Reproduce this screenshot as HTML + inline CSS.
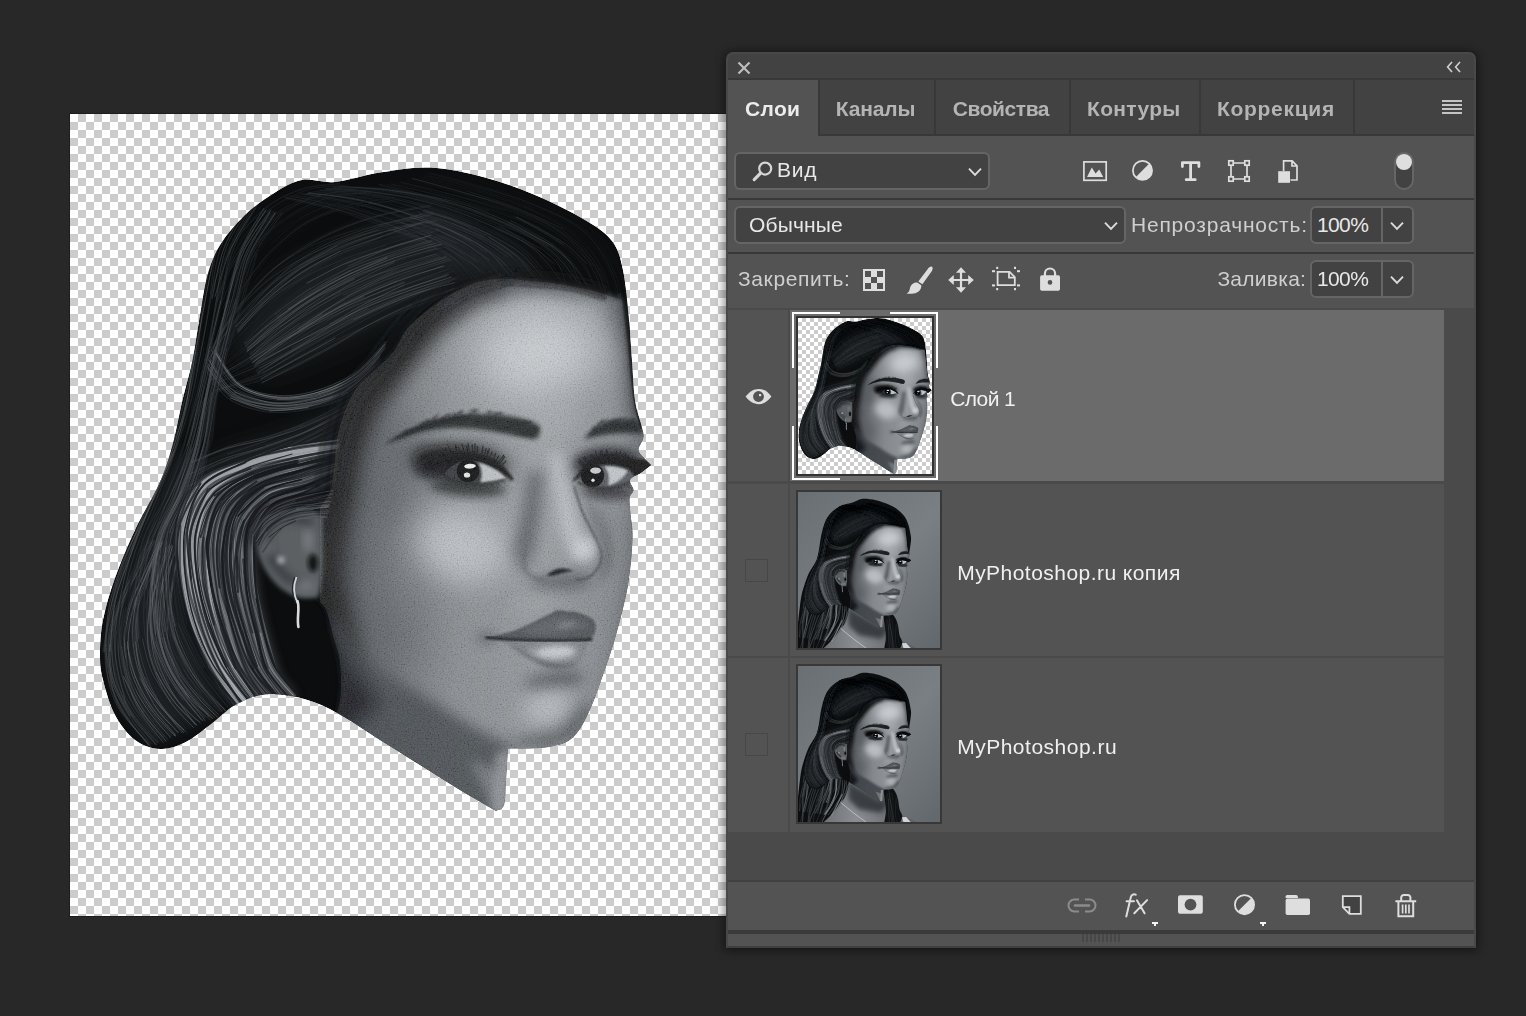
<!DOCTYPE html>
<html><head><meta charset="utf-8">
<style>
html,body{margin:0;padding:0;}
body{width:1526px;height:1016px;background:#282828;position:relative;overflow:hidden;font-family:"Liberation Sans",sans-serif;}
.abs{position:absolute;}
.t{position:absolute;white-space:nowrap;line-height:1;font-size:21px;color:#dcdcdc;}
.b{font-weight:bold;}
#canvas{left:70px;top:114px;width:690px;height:802px;background-color:#fff;
 background-image:conic-gradient(#ccc 0 25%,#fff 0 50%,#ccc 0 75%,#fff 0);background-size:16px 16px;box-shadow:0 0 0 1px #1d1d1d;}
#panel{left:726px;top:52px;width:746px;height:892px;background:#535353;border:2px solid #484848;border-bottom-color:#3f3f3f;border-radius:7px 7px 0 0;box-shadow:0 1px 10px 2px rgba(0,0,0,.45);overflow:hidden;}
#panel .abs, #panel .t{ }
.ln{position:absolute;background:#383838;}
.dd{position:absolute;box-sizing:border-box;border:2px solid #656565;border-radius:6px;background:#424242;}
</style></head><body>
<div id="canvas" class="abs"><svg class="abs" style="left:0;top:0" width="690" height="802" viewBox="70 114 690 802"><defs>
<clipPath id="cut"><path d="M430 167.5C447.5 168.3 467.5 172.9 485 177.5C502.5 182.1 518.3 187.9 535 195C551.7 202.1 572.2 212.3 585 220C597.8 227.7 605.7 232.7 612 241C618.3 249.3 620.2 256.8 623 270C625.8 283.2 627.5 305 629 320C630.5 335 631 346.7 632 360C633 373.3 633.5 389.3 635 400C636.5 410.7 639.6 417.8 641 424C642.4 430.2 643.9 432.7 643.5 437C643.1 441.3 638.2 446.3 638.5 450C638.8 453.7 642.9 456.5 645 459C647.1 461.5 650 464 651 465C649.3 466.2 644.5 470 641 472.5C637.5 475 631.2 477.1 630 480C628.8 482.9 633.6 487 633.5 490C633.4 493 630 494 629.5 498C629 502 630 507.3 630.5 514C631 520.7 632.9 526.2 632.5 538C632.1 549.8 630.8 568.8 628 585C625.2 601.2 620.2 620 616 635C611.8 650 607.7 661.8 603 675C598.3 688.2 593.3 703.3 588 714C582.7 724.7 578.2 733.4 571 739C563.8 744.6 555.5 745.9 545 747.5C534.5 749.1 514.2 748.3 508 748.5C507.7 753.8 506.7 770.6 506 780C505.3 789.4 505.7 799.8 504 805C502.3 810.2 497.3 810 496 811C490 807.5 472.7 797.7 460 790C447.3 782.3 433.3 773.3 420 765C406.7 756.7 392.5 747.9 380 740C367.5 732.1 355.8 723.8 345 717.5C334.2 711.2 325 706.2 315 702.5C305 698.8 294.2 696.2 285 695C275.8 693.8 268.3 693.3 260 695C251.7 696.7 243.3 700 235 705C226.7 710 218.3 718.8 210 725C201.7 731.2 193.3 738.5 185 742.5C176.7 746.5 168.3 749.4 160 749C151.7 748.6 142.5 745.7 135 740C127.5 734.3 120.3 725 115 715C109.7 705 105.5 690 103 680C100.5 670 100 665 100 655C100 645 100.5 632.8 103 620C105.5 607.2 109.7 593 115 578C120.3 563 127.5 546 135 530C142.5 514 153.8 496.2 160 482C166.2 467.8 168.8 458.7 172.5 445C176.2 431.3 179.2 414.2 182.5 400C185.8 385.8 189.6 374.2 192.5 360C195.4 345.8 197.5 329.2 200 315C202.5 300.8 204.2 286.7 207.5 275C210.8 263.3 213.8 255 220 245C226.2 235 235.8 223.8 245 215C254.2 206.2 265.5 198.3 275 192.5C284.5 186.7 292 181.8 302 180C312 178.2 322 183.2 335 182C348 180.8 364.2 174.9 380 172.5C395.8 170.1 412.5 166.7 430 167.5Z"/></clipPath>
<clipPath id="skinclip"><path d="M622 300C618.3 298.8 605.5 294.7 600 293C594.5 291.3 594.8 291.3 589 290C583.2 288.7 572.8 286.3 565 285C557.2 283.7 553.7 283 542 282C530.3 281 508.2 278 495 279C481.8 280 473.5 283.3 463 288C452.5 292.7 441.3 300.2 432 307C422.7 313.8 413.3 321.7 407 329C400.7 336.3 399.3 344.2 394 351C388.7 357.8 381.3 363.7 375 370C368.7 376.3 361.2 381.7 356 389C350.8 396.3 347.2 405.5 344 414C340.8 422.5 338.7 431 337 440C335.3 449 335.2 459.3 334 468C332.8 476.7 332.7 484.7 330 492C327.3 499.3 321 504 318 512C315 520 313 530.3 312 540C311 549.7 311.3 560.7 312 570C312.7 579.3 313.7 589.3 316 596C318.3 602.7 323.2 603.5 326 610C328.8 616.5 330.7 626.3 333 635C335.3 643.7 338.8 651.2 340 662C341.2 672.8 341.7 688.7 340 700C338.3 711.3 331.7 725 330 730C358.3 748.3 471.7 821.7 500 840C533.3 840 666.7 840 700 840C700 773.3 700 506.7 700 440C690.2 438.2 650.8 430.8 641 429C640 425.8 636.7 418.2 635 410C633.3 401.8 632.3 391.7 631 380C629.7 368.3 628.5 353.3 627 340C625.5 326.7 622.8 306.7 622 300Z"/></clipPath>
<filter id="b1" x="-20%" y="-20%" width="140%" height="140%"><feGaussianBlur stdDeviation="0.8"/></filter>
<filter id="b2" x="-30%" y="-30%" width="160%" height="160%"><feGaussianBlur stdDeviation="2"/></filter>
<filter id="b3" x="-10%" y="-10%" width="120%" height="120%"><feGaussianBlur stdDeviation="3"/></filter>
<filter id="b4" x="-40%" y="-40%" width="180%" height="180%"><feGaussianBlur stdDeviation="4"/></filter>
<filter id="b6" x="-50%" y="-50%" width="200%" height="200%"><feGaussianBlur stdDeviation="6"/></filter>
<filter id="b8" x="-50%" y="-50%" width="200%" height="200%"><feGaussianBlur stdDeviation="8"/></filter>
<filter id="b10" x="-50%" y="-50%" width="200%" height="200%"><feGaussianBlur stdDeviation="10"/></filter>
<filter id="b14" x="-60%" y="-60%" width="220%" height="220%"><feGaussianBlur stdDeviation="14"/></filter>
<filter id="b22" x="-80%" y="-80%" width="260%" height="260%"><feGaussianBlur stdDeviation="22"/></filter>
<filter id="grain" x="0" y="0" width="100%" height="100%"><feTurbulence type="fractalNoise" baseFrequency="0.7" numOctaves="2" seed="4"/><feColorMatrix type="matrix" values="1.6 0 0 0 -0.3  1.6 0 0 0 -0.3  1.6 0 0 0 -0.3  0 0 0 0 1"/></filter>
<linearGradient id="skg" x1="322" y1="0" x2="652" y2="0" gradientUnits="userSpaceOnUse">
<stop offset="0" stop-color="#3e4246"/><stop offset=".1" stop-color="#54585c"/><stop offset=".24" stop-color="#74787c"/><stop offset=".4" stop-color="#8c9094"/><stop offset=".65" stop-color="#9a9ea2"/><stop offset=".9" stop-color="#878b8f"/><stop offset="1" stop-color="#6e7276"/></linearGradient>
</defs><g id="faceg" clip-path="url(#cut)">
<path d="M430 167.5C447.5 168.3 467.5 172.9 485 177.5C502.5 182.1 518.3 187.9 535 195C551.7 202.1 572.2 212.3 585 220C597.8 227.7 605.7 232.7 612 241C618.3 249.3 620.2 256.8 623 270C625.8 283.2 627.5 305 629 320C630.5 335 631 346.7 632 360C633 373.3 633.5 389.3 635 400C636.5 410.7 639.6 417.8 641 424C642.4 430.2 643.9 432.7 643.5 437C643.1 441.3 638.2 446.3 638.5 450C638.8 453.7 642.9 456.5 645 459C647.1 461.5 650 464 651 465C649.3 466.2 644.5 470 641 472.5C637.5 475 631.2 477.1 630 480C628.8 482.9 633.6 487 633.5 490C633.4 493 630 494 629.5 498C629 502 630 507.3 630.5 514C631 520.7 632.9 526.2 632.5 538C632.1 549.8 630.8 568.8 628 585C625.2 601.2 620.2 620 616 635C611.8 650 607.7 661.8 603 675C598.3 688.2 593.3 703.3 588 714C582.7 724.7 578.2 733.4 571 739C563.8 744.6 555.5 745.9 545 747.5C534.5 749.1 514.2 748.3 508 748.5C507.7 753.8 506.7 770.6 506 780C505.3 789.4 505.7 799.8 504 805C502.3 810.2 497.3 810 496 811C490 807.5 472.7 797.7 460 790C447.3 782.3 433.3 773.3 420 765C406.7 756.7 392.5 747.9 380 740C367.5 732.1 355.8 723.8 345 717.5C334.2 711.2 325 706.2 315 702.5C305 698.8 294.2 696.2 285 695C275.8 693.8 268.3 693.3 260 695C251.7 696.7 243.3 700 235 705C226.7 710 218.3 718.8 210 725C201.7 731.2 193.3 738.5 185 742.5C176.7 746.5 168.3 749.4 160 749C151.7 748.6 142.5 745.7 135 740C127.5 734.3 120.3 725 115 715C109.7 705 105.5 690 103 680C100.5 670 100 665 100 655C100 645 100.5 632.8 103 620C105.5 607.2 109.7 593 115 578C120.3 563 127.5 546 135 530C142.5 514 153.8 496.2 160 482C166.2 467.8 168.8 458.7 172.5 445C176.2 431.3 179.2 414.2 182.5 400C185.8 385.8 189.6 374.2 192.5 360C195.4 345.8 197.5 329.2 200 315C202.5 300.8 204.2 286.7 207.5 275C210.8 263.3 213.8 255 220 245C226.2 235 235.8 223.8 245 215C254.2 206.2 265.5 198.3 275 192.5C284.5 186.7 292 181.8 302 180C312 178.2 322 183.2 335 182C348 180.8 364.2 174.9 380 172.5C395.8 170.1 412.5 166.7 430 167.5Z" fill="#0b0d0e"/>
<path d="M340 444L270 456L208 482L188 506L183 540L185 578L194 616L210 655L222 680L240 708L296 696L279 677L267 638L257 598L253 559L255 530L267 508L306 494L338 480Z" fill="#54585c" opacity=".9" filter="url(#b6)"/>
<path d="M440 215L360 235L290 270L240 320L232 350L270 372L330 348L395 316L458 290L470 250Z" fill="#2a2e32" opacity=".55" filter="url(#b14)"/>
<path d="M545 280L515 248L470 224L425 208L392 228L428 244L456 262L480 284Z" fill="#30343a" opacity=".5" filter="url(#b10)"/>
<path d="M176 450L150 510L122 575L108 640L118 700L152 744L226 708L200 660L182 610L178 560L186 512L208 474Z" fill="#2a2e32" opacity=".6" filter="url(#b10)"/>
<path d="M372 382L330 412L280 434L232 448L196 466L186 520L224 502L264 484L306 468L340 452Z" fill="#2a2e32" opacity=".5" filter="url(#b10)"/>
<g fill="none" stroke-linecap="round">
<path d="M613 314C610.5 306.5 606 282 598 268S580 240.5 567.5 230.5S537.5 213.5 522.5 207S492 196 475.5 191S433 179.5 424.5 177M616 320C614 312 610 286.5 603 271.5S585 243 571.5 232S532 211 524 206.5M468 288C464 283 453 266 443.5 256.5S421 239.5 408.5 233S382.5 222.5 369 217.5S341.5 208 328 204S293.5 197 286.5 195.5M481 286C476.5 280.5 463 262.5 452.5 254S430.5 239.5 418 233.5S391 222.5 377.5 217.5S351 208.5 337 205S300.5 197 293 195.5M529 287.5C524 281.5 510.5 260 498.5 249.5S469.5 232 455 225.5S425 214.5 410 210S381.5 200.5 366 198S325.5 193.5 317.5 193M350 303.5C342 307.5 317.5 318.5 302 327.5S270.5 346.5 255.5 355.5S219.5 377 212 381" stroke="#1d2023" stroke-width="0.8" opacity="0.6"/>
<path d="M628 334.5C627.5 325 629 296 623.5 279S608 243.5 595 231S562.5 210 545.5 202.5S509.5 190 492 185S448 173.5 439 171M517 287.5C511.5 281.5 497.5 261.5 486 251.5S459.5 234 445.5 227.5S416 216 401 211.5S371.5 203 356.5 199.5S316.5 194 309 193M531 288.5C525.5 282.5 511 262.5 498 252S470 234 454.5 227S422 215.5 405.5 211S373.5 202 357 199S315 194 306.5 193M284 291.5C277 298 255.5 316.5 242.5 329.5S214 362.5 208 369M374.5 219.5C365 222.5 336.5 230.5 319.5 239S287 257.5 273 269.5S241.5 304.5 235 311.5M406 296C397.5 300 373 310 356.5 318S323.5 335 308 343.5S269 364 261.5 368M440.5 232.5C431 234.5 402.5 239.5 384 244.5S346 253.5 329 261S296 277.5 281.5 288S253.5 311 241 324S212.5 358 207 364.5M316 222C310 226.5 291 239 281 249S258.5 277 254 283M348 204C341.5 206.5 320.5 212.5 308.5 219.5S282.5 241.5 277.5 246" stroke="#181b1e" stroke-width="0.8" opacity="0.4"/>
<path d="M621 325C619.5 316.5 618 290 611 274.5S592.5 243 579 231.5S549 214 532.5 207S498 194 480.5 188.5S434.5 177 425.5 174.5M628.5 333.5C627 324 627 294.5 621 277.5S597 239 592.5 231.5M625 329C623.5 320 622.5 292.5 616 276.5S599.5 242.5 586.5 231S555 213 538 206S503.5 194 486 188.5S441.5 176 433 173M390 256.5C381.5 259.5 355 267.5 338.5 275S305 290.5 289.5 300.5S252.5 328.5 245 334M309.5 345.5C302 349.5 278 363 262.5 370.5S222.5 386.5 214.5 389.5M263 447C257 449 238.5 456 226.5 461S196.5 474 190.5 476.5M283 463.5C277.5 465.5 260.5 473 249.5 478S221 490.5 215 493M200.5 350C199.5 359 197.5 386.5 194.5 403.5S187 437 181.5 453S165 492.5 161.5 500.5M284.5 213.5C280 220 264 239.5 257 254S248 284.5 243.5 300S233.5 330.5 229.5 346.5S221.5 378.5 218.5 394.5S215 426.5 211.5 441.5S204.5 471 199 485.5S181 513 177 528S174 559 175.5 575S179 607 184 622.5S197.5 653 205.5 667.5S228.5 700.5 233 707M123.5 600C122.5 609 116.5 635 116.5 651.5S119 685.5 125.5 700.5S151.5 734.5 156.5 741.5" stroke="#22262a" stroke-width="0.6" opacity="0.4"/>
<path d="M630 333C628.5 323.5 628 293.5 622 276.5S606 243 593 231S560.5 212.5 544 205.5S511 194 493.5 189S448 176.5 439 174.5M566 289.5C560 283 545 260 531 249S501 230.5 484 223S449.5 210 432 205S398 196 380 193S334.5 189 325.5 188.5M561.5 288.5C556.5 282 543 259 530.5 247.5S503 228.5 487.5 221S456 208 439.5 203S407 194 390 191.5S346 188 337 187M427.5 207.5C419 205.5 393.5 199 376 196S331.5 190.5 322.5 189.5M398 200.5C391 201.5 369.5 203 355.5 206.5S326.5 214 313.5 220.5S288 235 277 244.5S257 267 249 279S232.5 311 229 317.5M310 462C304 464 286.5 470 275.5 474.5S255 484.5 244.5 490S224 501.5 213.5 507S187 522 182 525M189 492.5C185 499.5 171 520.5 165.5 535.5S159.5 573.5 158 581" stroke="#1a1d1f" stroke-width="0.6" opacity="0.6"/>
<path d="M593.5 293.5C589.5 287 578.5 266 567.5 255.5S543 237.5 529.5 230S501 216.5 487 211S458.5 200 443 195S404.5 183.5 396.5 181.5M517.5 247.5C510 243.5 488 230.5 472 223.5S440 211.5 423.5 207S390 199 373.5 196.5S330.5 192 322 191M527.5 288.5C522.5 282.5 510 262.5 498 252.5S470.5 234.5 455.5 227.5S425 215.5 409.5 210.5S377.5 200.5 361.5 197S321 191.5 312.5 190M551 290C546 283.5 532.5 261.5 520 250.5S491 231.5 475.5 224S444 210.5 427 205.5S392.5 196.5 375 193.5S331.5 189 322.5 188M459.5 284.5C451 287.5 425 296 408 303S374.5 317 358.5 325S327.5 341.5 312 349.5S281.5 367.5 265.5 374S223.5 387 215 389.5" stroke="#14171a" stroke-width="0.8" opacity="0.4"/>
<path d="M612.5 317C610.5 309 606 283 599 269S581.5 242 568.5 231.5S537.5 213.5 521.5 206.5S489.5 195 473 190S430.5 178 422 175.5M530 206.5C521.5 203.5 495.5 195 477.5 189.5S433.5 177.5 424.5 175.5M578.5 289C573 282 558.5 259 545 247.5S515 228.5 498.5 221S465.5 206.5 448 201S412 192 393.5 189.5S347 186.5 337.5 186M494 286C489 280.5 475.5 262.5 464 253.5S439.5 237.5 425.5 231.5S396.5 221 382.5 216.5S355 207 340.5 204S303 197.5 295.5 196M475 286C470.5 281 458.5 263.5 448 254.5S425 238.5 413 232S386.5 221.5 373.5 216.5S347.5 208 334 204.5S300 198 293 197M431 207.5C422 210 394 215 376 221S338.5 234 321.5 243S288.5 261.5 274 274S247.5 302 236 317S211.5 356 206.5 363.5M387.5 197.5C380.5 198.5 360 199.5 347 202.5S319 211 306.5 217.5S282.5 233 272.5 243S254 264 246.5 276S230.5 308 227.5 314.5M369.5 193C363 194 343 195.5 331 198.5S306.5 207 295.5 213.5S272.5 229 263 238S245.5 259 238.5 270.5S224.5 301 222 307.5" stroke="#181b1e" stroke-width="0.6" opacity="0.4"/>
<path d="M630 332C628.5 323 628 294 622 277S605.5 243 592.5 231S560.5 212 544 205S509.5 193 492 187.5S448 175.5 439 173M614.5 317.5C612 310 609 284.5 601.5 270S582.5 242 569.5 231.5S540 215 524 208.5S491 197 474 191.5S430.5 179.5 421.5 177M600.5 300C596 293 585.5 268 574 256S545.5 236.5 530.5 229S499 215.5 483.5 210S453 201.5 437 197.5S397.5 187.5 389.5 185.5M451.5 201C442 199 413.5 191.5 394.5 189.5S347.5 187 338 186.5M427 230.5C419.5 227.5 397 218.5 382.5 214S352.5 205.5 338 202.5S302 197 295 195.5M478.5 288.5C473.5 283 461.5 264.5 450.5 255.5S426.5 239 413.5 232.5S386 221.5 372 216.5S336.5 206 329.5 204M523.5 286.5C518.5 280 505 259.5 493.5 249.5S467 233 453 226.5S423.5 214.5 408.5 210S379 201 363.5 198S324.5 194 316.5 193M536 289.5C531 283 517 263 504 252.5S475.5 233.5 459.5 226S426.5 214 410 209S376.5 199.5 359.5 196.5S318.5 192 310 191M382 238.5C373 241.5 346.5 248.5 330 256.5S296 274 281 285.5S246 316.5 239 322.5M457 273.5C448 275.5 420.5 281.5 403 287S367.5 298.5 350.5 305.5S309.5 326 301.5 330M456.5 283C448.5 286 424.5 295 408.5 302S376 315.5 360 322.5S327.5 337.5 311 345.5S278.5 362.5 262 369.5S220.5 384.5 212.5 387.5M274.5 205C270 209 255 220.5 247.5 230S231.5 256.5 228.5 261.5" stroke="#14171a" stroke-width="0.6" opacity="0.6"/>
<path d="M611.5 314.5C609 307 604 281.5 595.5 267.5S574 241 560.5 231.5S529.5 214.5 513 208S479.5 197.5 462.5 192.5S420.5 180.5 412 178.5M592.5 295C588 288.5 577 267 565 256S537.5 238 522.5 231S492 217 476 211S443 201.5 427 197S387.5 186.5 379.5 184.5M464.5 254C457.5 250.5 438.5 237.5 424.5 231S396 221 381.5 216.5S345 206 337.5 204M458 278.5C449.5 281.5 424 290 407.5 297S374 312 357.5 320S324.5 336.5 309 345S279 364.5 263 372S223 387 214.5 390M338.5 184C332.5 184.5 314 185.5 303 189S281 197 271.5 203.5S253 219 245.5 228S230 248.5 224.5 259S213 287.5 211 293M393 197.5C386 199 363.5 201.5 349.5 205.5S322.5 214 310 220.5S286.5 236.5 276.5 246S257.5 267 249.5 278.5S231.5 309 228 315.5M205 367C209.5 372.5 220 390.5 231 397.5S257 407 270 408S296.5 408 309.5 405.5S337.5 399 348.5 392S372 368.5 376.5 364M210.5 352C215 358 225.5 379 236.5 386.5S263 397.5 277 398.5S305 396.5 318.5 392.5S345 382 356 373.5S379.5 346.5 384.5 341M193.5 532C193.5 539.5 192 561.5 193.5 576.5S198.5 607.5 203 622.5S217 659 219.5 666M241.5 667C242.5 669.5 244.5 676.5 247 681.5S252.5 692 256 697S267 706.5 269 708.5M274 210.5C269.5 217.5 253 237 246.5 252S237.5 284 233.5 300S226.5 332 223 348.5S215.5 381 212.5 397S209 428 205 443.5S196 473.5 190 488.5S172 516.5 168 531.5S164 562.5 165 578.5S168.5 611.5 173 627.5S185 658.5 193 672.5S216 705.5 221 712M280.5 213C276 219.5 260.5 238 253 252.5S242 283.5 237 299S227.5 330 223.5 345.5S216.5 378.5 213.5 394.5S207.5 435.5 206.5 443.5M167 629C170 636.5 178.5 659.5 186.5 673.5S210 708 214.5 715M197 352.5C195.5 361 192 387.5 188 404.5S178 437.5 171.5 453.5S157.5 484.5 150.5 500.5S135.5 532.5 129.5 549S118 581.5 115 598.5S110 634 111.5 651S117.5 686.5 125 702S150.5 737 155.5 744M200.5 440.5C199 448.5 194.5 473 189.5 489S175.5 519.5 171.5 535S166 567.5 165 583.5S163 616.5 165.5 631.5S179 667 182 674.5" stroke="#33373b" stroke-width="0.8" opacity="0.6"/>
<path d="M611 314C608 306 603 280.5 595 267S576.5 241 563.5 231S533.5 215 517.5 208.5S485.5 196.5 469 191S427 179 419 176.5M595 296C590 289 578.5 267.5 567 256.5S540 238 525.5 230.5S493.5 217.5 478 212S446.5 201 430.5 196.5S390 187 382 185M572 232C564.5 228 544 214.5 528.5 207.5S487 192.5 478.5 189.5M559 287C553 280.5 537 258 523 247.5S492 230 476 223S444 211 427.5 206.5S393.5 198.5 376 195.5S332.5 192 323.5 191M389 196.5C382 197.5 359 199 345 202.5S318 211 306 218S282.5 234 272.5 244S250.5 271.5 246 277M247.5 486C242 488 227.5 495.5 216.5 500.5S188.5 514.5 183 517M354 418C348.5 421 333 431 322 436.5S299.5 448.5 288.5 453.5S267 463 256 467.5S232.5 476.5 221 481S191.5 494 185.5 496.5M201.5 296C200.5 305 196 331 193.5 349S189.5 385.5 186 403.5S178 438.5 172.5 455.5S159.5 489 152 505.5S135.5 536 128.5 551.5S114.5 583.5 110.5 600S105 643 104 651.5M212.5 395C211.5 403 209.5 428.5 206 444.5S198 476.5 191.5 491.5S174 520 168.5 535S160.5 573.5 159 581.5" stroke="#1a1d1f" stroke-width="0.8" opacity="0.4"/>
<path d="M608 310.5C605 303 599 278.5 590.5 265S570 239.5 556.5 230S525.5 215 510 208.5S478.5 197 462 192S421.5 181 413 178.5M593 293.5C588 287.5 576 266 563.5 255.5S535.5 237 520.5 229.5S481.5 215 474 212M488.5 210.5C480.5 208 457 200.5 440.5 196S399.5 186 391 184M309 344C301.5 348.5 279.5 364.5 264 372.5S224 387.5 216 390.5M347 185.5C341 186 322.5 186 310.5 189S287 197.5 276.5 204.5S256.5 220.5 248.5 230.5S234.5 252.5 229.5 264.5S219.5 295.5 217.5 301.5M357.5 189C351 190 331 192 319 195.5S296 204.5 285.5 211S265 225.5 256.5 234.5S239 254 232.5 265.5S219.5 295.5 217 302M212 351C216 356.5 225.5 377.5 236.5 385.5S264 397.5 277 399S303.5 398 316.5 394.5S343 385.5 354 377.5S377 353 381.5 348M243.5 490.5C238 493 222 500.5 211.5 506S186 521 181 524M340 453C334.5 455 318.5 462 307.5 466S279.5 476.5 274 478.5M362.5 402.5C357 406 341.5 417 330.5 423.5S308 435.5 296 440.5S271 450 259 454.5S235.5 462 224 467S194 481 188 483.5M360.5 401C355 405 339 417 328 424S306.5 437 295 442.5S271.5 453 259.5 457.5S235.5 465 223.5 470S194 484 188 487M210 440.5C208 447.5 203 469.5 197.5 483.5S181 510.5 177.5 526S175.5 559.5 177 576S185 616 187 624.5M282 213.5C277.5 220 263 239 255.5 253S244.5 282.5 239.5 298S228 328.5 223.5 344.5S216 377 213.5 393.5S211 426.5 208 443S202.5 475.5 197.5 490.5S181 518.5 176 533.5S169 563.5 168.5 579S169.5 609.5 174 624S187.5 653 196.5 667S222.5 700 227.5 706.5M139.5 590C139.5 598.5 136.5 624.5 139.5 640.5S148 673.5 156 688S180.5 721.5 185.5 728.5" stroke="#2a2e32" stroke-width="0.8" opacity="0.6"/>
<path d="M607.5 307.5C604 300 596.5 276 587 263S564 239 550 229.5S519 214 503.5 208S472.5 197.5 456.5 193S416.5 183 408 181M595 296C590.5 289.5 578.5 266 566.5 255.5S537 238 521.5 231S490.5 218.5 475 213S443 203 427.5 198.5S387.5 188 379.5 186M497.5 285C492.5 279.5 478.5 261.5 466.5 252S439.5 235 426 229S399.5 220 385.5 216S358 208.5 343.5 205S307 198 300 197M298 320.5C290.5 325.5 267.5 340.5 253 350.5S218 374 211 378.5M453 263.5C444.5 266.5 418 274.5 401 281.5S367.5 296.5 351 305.5S318.5 324.5 303 334.5S274.5 355.5 260 364.5S222 384 214.5 388M338.5 199C331.5 201 310 206 297.5 212.5S274 228 264.5 238S247 259.5 240 271.5S226.5 303 224 309.5M373.5 192C366.5 193 344.5 195 331.5 198.5S306.5 207.5 295 214.5S273.5 230 264 239.5S245.5 260 238.5 271S223 300 220 306" stroke="#181b1e" stroke-width="0.6" opacity="0.6"/>
<path d="M603.5 307C600 300 592 275.5 581.5 263S557 241 542.5 232S511.5 217 494.5 210.5S459.5 199.5 442 194.5S398.5 183.5 390 181.5M625 329.5C623.5 320 622 291 615.5 275S597 243 583.5 231.5S550.5 213 533.5 206S499 194.5 481 189.5S436 178 426.5 176M624.5 331.5C623.5 322.5 623.5 294.5 617.5 278S602.5 244.5 589.5 233S557.5 214.5 540 207S504.5 194 486 188.5S439 175 430 172.5M510.5 287C505 281.5 491 262.5 479 252.5S453 235.5 439 229S409 218.5 394 213.5S364 204 349 201S311 195.5 303.5 194M576 289.5C570.5 282.5 556.5 259 543 247.5S511 228.5 495 221S462 207 444.5 202S408.5 193 390.5 190.5S344 186.5 335 185.5" stroke="#1d2023" stroke-width="0.6" opacity="0.6"/>
<path d="M505 210.5C496.5 208 471 199.5 454 195S410 184.5 401 182.5M615 318C612.5 310 607.5 282.5 599 268S577.5 241 563.5 231S532.5 215.5 516.5 209S483.5 198 466 193S422 181 413 178.5M480.5 222.5C472 219.5 446.5 210.5 429.5 206S395.5 197.5 377.5 194.5S333 190.5 324 189.5M498.5 286C494 280.5 483 262.5 472.5 253.5S447.5 236 434.5 229.5S408.5 218 394.5 213.5S366.5 205 351.5 201.5S313 195 305.5 194M459.5 283C451 286.5 425.5 297 409 304.5S377 320.5 361.5 329S331 346.5 315 354.5S283.5 371.5 266.5 377.5S223.5 389.5 215 392M400 200C392.5 201 369.5 203.5 355 206.5S325.5 213.5 312.5 220S287.5 236 276.5 246S256 267.5 248 279S232 309 228.5 315M213 396.5C212 404.5 210 429 207 444.5S200 476.5 194 491.5S174.5 518.5 169.5 533S165 571 164 579M238.5 201C234.5 209 220.5 232 214.5 248.5S206 282 203 299S198.5 333.5 195.5 351S190 385 186 402.5S176.5 437 170 453.5S156 486 149 502.5S135 534.5 129 551S116 585 112.5 602S107.5 645.5 106.5 654" stroke="#22262a" stroke-width="0.8" opacity="0.6"/>
<path d="M610 312C607 304.5 600.5 278.5 592 265S570.5 240.5 557 231S525.5 216 509 209.5S476.5 198 459.5 193S417.5 181 409 179M622.5 326C621 317 619.5 289.5 613 274S596 242 583.5 231S552.5 212.5 535.5 205S501 192.5 483.5 187S441 176 432.5 173.5M603 303.5C599 296.5 589 273 579 261S555.5 239 541.5 231S512.5 218 497.5 212.5S467 201 450.5 196S408 184 399.5 182M613 275.5C608.5 268.5 599 245 586.5 233.5S548 211.5 540 207M491 286.5C485.5 280.5 471 261.5 458.5 252S430.5 235.5 416.5 230S386.5 220 372.5 216.5S346 209.5 332.5 207S297.5 200 290.5 198.5M427 231C419.5 228.5 397 220 382.5 215S353.5 206.5 339 203S302.5 196.5 295 195.5M579 289C573 281.5 558 258 544.5 246.5S512.5 227.5 496 220S462.5 207 445 202S409.5 194 391.5 191S345.5 187.5 336 186.5M477.5 222C469 219.5 444 211 427 207S393 198.5 376 196S332.5 192 323.5 191M410 306.5C402.5 311 379.5 323.5 364 331.5S331.5 348 315 356S274.5 374 266 377.5M279.5 282.5C272.5 289 251 309 238.5 322.5S211 358 205.5 365M412.5 308.5C404 312 378.5 322.5 362 330S322 350.5 314 354.5M307 338.5C299.5 343.5 277 358.5 261.5 367S222 385 214 388.5M340.5 453.5C335.5 456 319 464.5 308 469S286 476.5 275 481S252.5 489.5 241.5 494.5S220.5 506 210 512S184.5 527 179.5 530M117 650.5C119 659 121.5 686.5 128.5 701.5S154 735.5 159 742.5M273 211C269 218 254.5 237.5 248 251.5S237 282 232 297.5S222 328.5 218 344.5S210 377.5 207.5 394.5S205.5 429.5 203 446S195.5 477 190 492S173.5 521 168.5 536S161.5 567 161 582.5S161.5 613.5 166 628S179 657.5 187.5 671.5S214 704.5 219 711" stroke="#181b1d" stroke-width="0.8" opacity="0.6"/>
<path d="M564 229C556 225.5 532 214 516 207.5S476 194.5 468.5 191.5M446 201C437 199 409.5 192 391.5 189.5S346.5 188 337.5 187.5M582.5 289.5C577 282.5 562 259 548 247.5S515.5 228.5 498 221S463 206.5 444.5 201.5S408 192.5 389.5 190S342.5 187.5 333 187M367.5 190.5C360.5 191 339 191 325 194S297.5 201 285.5 207.5S261.5 222.5 252.5 232S237 253.5 231 265S219 295 216.5 301M258.5 455.5C253 457.5 235 464.5 223 469.5S193.5 484 188 486.5M275.5 676.5C277 678.5 281 684 284 687S290.5 692.5 293.5 695.5S301.5 703 303 704.5M230.5 251C228.5 259.5 223 284.5 219.5 301S212 334 208.5 350S201.5 383 197.5 399S188.5 431 183 447.5S168 488 164.5 496" stroke="#33373b" stroke-width="0.6" opacity="0.6"/>
<path d="M600.5 302C596.5 295 586.5 271.5 576 259.5S552 239 537.5 230.5S506.5 217 490.5 211.5S459 200 442.5 195.5S402 185 393.5 183M580 260C573.5 255 555.5 238.5 541.5 230.5S511.5 216 496.5 210.5S466 201 450 196.5S409.5 185 401.5 183M599 302C595 295 585 272.5 574.5 261S550.5 240 536 232S504.5 217.5 488 211.5S453.5 200.5 437 195.5S396 185 388 183M518 286C512.5 280 498 260.5 485 251S457 234 442.5 228S413 217 398 212.5S367.5 205 352 202S314 196 306.5 194.5M503.5 286.5C499 280.5 486 261 474.5 251.5S450 235 436.5 229S408.5 218.5 394.5 214S366 204.5 351.5 201.5S314.5 196 307 195M454 265C445 267.5 418 274.5 400.5 281S365 295.5 348.5 303.5S317 322 302 331.5S273 352.5 258 361.5S221 381 213.5 384.5M405 291.5C396.5 294.5 371 304 354 311S320 324.5 303.5 332.5S272 351.5 256.5 359.5S219.5 378.5 212 382M358 189C351 189.5 330.5 189 317.5 192S292 200 281 206.5S255.5 227 250.5 231M314.5 221.5C308.5 225.5 289.5 236.5 278.5 246.5S258.5 269 250.5 280.5S233.5 311 230 317.5M140.5 546C138 554 130 578 127.5 594.5S122 629 124 646S136 687 138.5 695.5M241.5 199.5C237.5 207 222 229.5 215.5 246S207.5 280.5 204.5 298S201 334 199 351.5S195.5 387.5 192 404.5S183.5 438.5 177.5 454S163 484.5 156 500S139.5 530 133.5 546S123 578.5 120.5 595.5S116.5 629.5 119 646.5S126 681 134 697S161 733 166 740.5M147 590.5C146.5 598.5 143.5 624 145 640S156.5 679 158.5 687" stroke="#181b1d" stroke-width="0.8" opacity="0.4"/>
<path d="M593 292.5C588.5 286.5 577 265 565.5 254.5S538.5 236.5 524 229S494 216 478.5 211S447 201.5 431.5 197S393.5 186.5 386 184M593 265.5C586 259.5 567 239 551.5 229.5S516.5 214 499 207.5S454.5 195.5 445.5 193M580 289.5C574 282 558 258.5 544 247S513 228.5 496.5 221S462.5 208 444.5 203S408 194 389.5 191S342.5 188 333 187.5M467 287C462.5 282 450.5 266 440.5 257.5S419 241.5 406.5 235.5S380.5 225.5 367 220.5S339.5 209.5 326 205.5S291.5 198.5 284.5 197M570 289.5C564.5 282.5 550 260 536.5 248.5S506 230.5 490 223S457 209.5 439.5 204S403.5 193.5 385 190.5S338 186.5 329 186M541 288C536 281.5 522 260 509 249.5S481 232 465.5 225S433 212.5 417 208S385.5 198 369 195.5S327 192 318.5 191.5M206 365.5C210 371 220.5 390.5 231 398S255.5 408 268.5 410S296 410.5 309 408S334.5 403.5 345 397.5S369.5 375.5 374 371M360.5 409C355 412.5 337.5 425 326 431.5S302 442.5 290.5 448.5S267 460 255 465.5S229.5 475.5 218 481.5S191 498.5 186 501.5M369 387C363.5 391 348.5 404.5 337.5 411.5S315 424.5 303 430S278.5 439.5 265.5 444S239 450.5 226 455S194 469 188 471.5M176 575C177.5 583 179.5 607 184.5 622.5S197.5 652.5 205.5 667S227.5 700.5 232 707M255 205.5C250.5 213 235.5 233.5 229 249S220 282 216.5 298.5S210 332 207 349S201 384 197.5 401S192.5 434 187.5 450.5S175.5 482.5 169 498S152.5 526.5 146.5 542S136.5 574.5 134.5 590.5S132 624 134.5 640.5S142.5 674 150.5 689S176.5 724.5 182 731.5M220 349C218 357 212 381 208 396.5S199 435 197.5 442.5M207.5 349C205.5 357 200.5 381 196.5 397.5S188 431 183 447.5S173.5 480.5 167.5 496.5S153 528 148 544S139 585 137 593.5M133 548C130.5 556.5 121.5 581 118.5 598S113.5 633.5 115 650S119.5 684.5 127 700S154.5 734.5 160 741.5M212.5 246C210.5 254.5 204 280.5 201 298S197 334 195 352S192 388 188 405.5S178.5 439.5 172 455.5S156.5 487 149 502.5S130.5 541.5 127 549M618.5 293.5C619.5 300.5 622 322 623.5 336.5S625.5 366.5 628 381S636.5 416.5 638 423.5M622 293C623 300.5 625.5 322.5 627 337.5S627.5 366.5 629.5 381S637 417 638.5 424.5M618 295C619 302.5 622 324.5 624 339S625.5 367 628 381.5S636.5 417 638 424" stroke="#2a2e32" stroke-width="0.8" opacity="0.4"/>
<path d="M619.5 324C618 315.5 617 289.5 610.5 274S594 243 581.5 231.5S550.5 212.5 534 205S499 192.5 482 187S439 175.5 430 173M587 289.5C580.5 282.5 565 258.5 550.5 247S517 228.5 500 220.5S464.5 206.5 446.5 201.5S410.5 193 392 190.5S344 187.5 334.5 186.5M428.5 231C421.5 228.5 400.5 221 386 216S349.5 205 342 203M442.5 241C433.5 243.5 406 250.5 388.5 256.5S354 267.5 337.5 275.5S304 292.5 289 302.5S260 324 246.5 335.5S214.5 365 208 371M435 215.5C426 218 398 224 380.5 230.5S344.5 244.5 328 253.5S295 274.5 280.5 286.5S253 313.5 240.5 327S213.5 363 208.5 370.5M352.5 187C346.5 187.5 326.5 188 314.5 191.5S289.5 199.5 279 206.5S259.5 222 251 231.5S236.5 252.5 230.5 264S218.5 294 216 300M333.5 199C327.5 201.5 308.5 206.5 297 213.5S274.5 229.5 265.5 239.5S250 262 243.5 274S229 306 226 312.5M292 447.5C286 449.5 268 455.5 256.5 459S228 468.5 222 470.5M244 492C238.5 494.5 221.5 503 211 509S186 525.5 181 529M358 412.5C352.5 416 337 427 326 432.5S303.5 443 292 447.5S268.5 456.5 257 461S232.5 469.5 220.5 474.5S192.5 488 187 491M348.5 432C343 435.5 327 445.5 316 452S293.5 463.5 282 468.5S259.5 478.5 248 484S225 495.5 214 501.5S185.5 517.5 180 520.5M356 418C350.5 421 334.5 431 323 436.5S300 447 288.5 452S265.5 461 254 465.5S231.5 474.5 220.5 479.5S192 492 186.5 494.5M225.5 347C223.5 355 216.5 377.5 213.5 393.5S210 426.5 207 442S198.5 472 193 486.5S178 514.5 174 530S170 562 170.5 578S173 611 177.5 626.5S194 662.5 197.5 670M216.5 300.5C215 308.5 210.5 333.5 207 350S200 382.5 195.5 399S187.5 433 182 449.5S170 480.5 163.5 496.5S148 529 142.5 545S131.5 586.5 129.5 595M156 500C152.5 508 141.5 533 135.5 549.5S124 582.5 120.5 599.5S114 642.5 112.5 651.5M194.5 444C191.5 452 183.5 475.5 178 491S163.5 520 159 536S152.5 578 151 586.5" stroke="#1a1d1f" stroke-width="0.6" opacity="0.4"/>
<path d="M605.5 304C601.5 296.5 591 272 580 259.5S554 237.5 539.5 229.5S507.5 216 491.5 210.5S460 200.5 444 196.5S402.5 187 394 185M612.5 312C609.5 304 603.5 279 595 265.5S574.5 239.5 562 230S532.5 215 517 209S487 197.5 471 192.5S429.5 181 421.5 179M550 246C541.5 241.5 517.5 228 500 221S465 207 447 202S410.5 193 391.5 191S344.5 188.5 335 188M449.5 255.5C441 257.5 415 263 397 268S360 279.5 342.5 286.5S308 301.5 292.5 311S262 332.5 248 343S216 370.5 209.5 376M430.5 209C421 211 393.5 217 375.5 222.5S340.5 234.5 323.5 243S289 261 274.5 273S246 299 234.5 314S210 353 205.5 361M278.5 279.5C271.5 286 249 304.5 236.5 318.5S210 356 205 363M380 230.5C371 233.5 343.5 242 326.5 250S292.5 268 278 279.5S250.5 305.5 238.5 320S212 357 206.5 364.5M349.5 434C344 436.5 328.5 445 317.5 450S293.5 459 282 463.5S254 476 248 478.5M351.5 427C346 430 330.5 441 319 447S295.5 457 284 462S260.5 471.5 249.5 477S227 488 216 494S188.5 509 183 512M274.5 211.5C270 219 255 239.5 248.5 255S240 287 236 302.5S227.5 333 223.5 348.5S215 379.5 211 395S204 427 199.5 442S190 472.5 184 487.5S167.5 516.5 163 532.5S158.5 567 158 584S159.5 617.5 162.5 633.5S170 666 177 681S198 714.5 202.5 721.5M251 204.5C247.5 212 234 234 228.5 249.5S221 282.5 217 299S210.5 332.5 207 349S200.5 382.5 197 399S191 433 186.5 449S176 480.5 169.5 496S154 526.5 149 542S141.5 574 140 590S138 623.5 141 639.5S150 672 158 686.5S184.5 719.5 189.5 726M176 529.5C175.5 537.5 173 562 173.5 578S176 610.5 180.5 625.5S196 662 199.5 669M261 206.5C257 213.5 242 234 235.5 249S225.5 281.5 221.5 298S214.5 331.5 211.5 348.5S207 382.5 204.5 399S200 433 195.5 448.5S185 479 178.5 493.5S161.5 521.5 156.5 536.5S149 568 148.5 584S149 617.5 153 633.5S165 665 173.5 679.5S199 714.5 204.5 721.5" stroke="#1a1d1f" stroke-width="0.8" opacity="0.6"/>
<path d="M621.5 327.5C620 319 620 292 613.5 276S597.5 243.5 584 231.5S551.5 212.5 534.5 205S498 192.5 480 187.5S435.5 175.5 427 173M559 289.5C553 282.5 537.5 260 523.5 249S493 230.5 476.5 223.5S444 211.5 426.5 207S390.5 197.5 373 194.5S330 190.5 321.5 189.5M513 287.5C507.5 281.5 492.5 262.5 480.5 253S453.5 237 439.5 230.5S410 219.5 394.5 214.5S364 206 348.5 202.5S308.5 195 300.5 193.5M418 208C410 206 386 198.5 370 195.5S328 191 319.5 190M435 219.5C426 221.5 398 227 380 232.5S343.5 243 327 250.5S293.5 268.5 278.5 279.5S249 304.5 237 318.5S211.5 355 206.5 362.5M435 219.5C426.5 222.5 399.5 229.5 382.5 236.5S347.5 251 331 260S299 280.5 284.5 292.5S256 318.5 243.5 331.5S214 364 208.5 370.5M459 287.5C451 291 426.5 300.5 410.5 307.5S378 323 362 331S331.5 347.5 316 355S284 372.5 267 378.5S223.5 390 214.5 392.5M452.5 265C443.5 267 417 273 399.5 278.5S355.5 295 347 298M234.5 299.5C232 307.5 225 330.5 221 346.5S213 379 210.5 395S207.5 427.5 204 443S193 481.5 190.5 489.5M195.5 352C194 360.5 191.5 387 187 404S177.5 437.5 171 454S156.5 486 149 502S134 533.5 128 550S115 592.5 112 601" stroke="#33373b" stroke-width="0.6" opacity="0.4"/>
<path d="M617 320C614.5 312 610.5 285 603.5 270.5S587 242.5 574.5 232S545 215 529 208S496.5 196 479.5 190.5S436 178 427 175.5M527.5 288C522.5 281.5 510 261 497.5 251S469.5 233.5 454.5 227S424.5 214 409 209.5S377.5 201 361.5 198S321 192.5 313 191.5M587 289.5C581 282.5 564.5 258 549.5 247S516.5 228.5 499 221S464 207 445.5 202S408 193 389 190.5S342 187.5 332.5 187M365 220C358.5 218 340.5 212.5 327.5 209S293.5 200.5 286.5 199M474.5 287C469.5 281.5 456 263.5 444.5 254.5S419 239 406 233.5S378.5 224 365.5 219.5S339.5 210 326 207S293 200 286 198.5M448.5 256.5C439.5 259.5 414 267 397 273S362 285 345.5 292.5S312.5 309.5 297 319S266.5 340.5 252 350.5S217.5 374 210.5 378.5M293 308C285.5 313.5 262.5 329 248.5 339.5S214 367 207 372.5M441.5 236C432 238 404 243 386 248S350 258.5 333 266S299.5 281.5 284 292S254.5 314 241.5 326.5S212.5 359.5 206.5 366M340.5 183.5C334.5 184 316 184 304.5 187.5S281.5 196.5 271.5 203.5S251.5 219.5 244 229S231 250 225.5 261S215 289.5 213 295M347 438.5C342 441 326.5 449 315.5 453.5S293.5 461 282.5 465.5S259.5 474 248.5 478.5S226 488.5 215.5 493.5S189.5 507 184.5 509.5M348 435C343 437.5 328 446.5 318 451.5S297 460.5 286 465S262 472 250.5 476S227.5 483.5 216 488.5S188 503 182 506M225.5 348.5C223.5 356.5 217.5 380.5 214 396.5S210 427.5 205.5 442.5S195.5 472 189.5 486S173.5 521.5 170 529M264 208C260 215.5 245 236 239 251.5S230.5 284 227 300.5S220.5 334 217 350S210.5 382 206.5 398S199 430.5 194 446.5S183 476 176.5 491S161 521 156.5 537S149 569 148 585.5S149 620 152 636S160 669 167.5 684S191 719 195.5 725.5" stroke="#2a2e32" stroke-width="0.6" opacity="0.4"/>
<path d="M602.5 303.5C599 296.5 590.5 273.5 580.5 261S556.5 238 542 229S510 214.5 494.5 208.5S462.5 198 447 193.5S408 183.5 400 181.5M436.5 204.5C427.5 202.5 402 196 384 194S338.5 190.5 329.5 190M500.5 287.5C496 281.5 485 263 474.5 253.5S449.5 236.5 436 230S408.5 218.5 394.5 213.5S358 202.5 350.5 200.5M487.5 286.5C482.5 281 467.5 262.5 455.5 253.5S429 237.5 415 231.5S386.5 222.5 372 218S344 208.5 330 205.5S294.5 199 287 197.5M432.5 217.5C424 220 398 226.5 380.5 232.5S345 244.5 328 252.5S287.5 276 279.5 280.5M369.5 192C363 193 342.5 193.5 330 197S304 205.5 293 212.5S272 228 263 238S246 259.5 239.5 271S226 302 223.5 308M355 188C348 188.5 328 189 315 191.5S288.5 198.5 276.5 205S253.5 219.5 244.5 228.5S228 247 222.5 258S212.5 288 210.5 294M282.5 211C277.5 218 260 238 253 253S243.5 285.5 239 301.5S230.5 333 227 349S219.5 381 216.5 396.5S213 428.5 209 443.5S198 472.5 191.5 486.5S174 514 170 529S166 561 166.5 577.5S169.5 610.5 173.5 626.5S185 659.5 192.5 674S214.5 708 219 714.5M264.5 210C260.5 217.5 248 238.5 242 253.5S234 284.5 230 300.5S222.5 333 218.5 348.5S209.5 379 206 395S200.5 427.5 196.5 443.5S188 475 182.5 490.5S168.5 520 164.5 535.5S159.5 567.5 159.5 583.5S160.5 616.5 164 632S174.5 663.5 182 677.5S206 709 211 715.5M145 542C143 550.5 135.5 576.5 133.5 593.5S132.5 635.5 132.5 644M190.5 487.5C187 494.5 172.5 515 168.5 530S164 562 165 578.5S172 619.5 173.5 628" stroke="#22262a" stroke-width="0.8" opacity="0.4"/>
<path d="M625 330.5C624 321.5 624.5 294 618.5 277.5S602 244 589 231.5S557 212 540 204.5S504.5 192.5 487 187S443 175.5 434 173M342.5 288C334.5 292.5 310 305.5 295 315.5S265.5 338 251.5 348.5S218 374 211.5 379.5M461 282.5C452 284.5 425 291.5 407.5 296.5S363 311 354.5 314M281 285C274 291.5 252.5 309 240 322.5S212.5 358.5 207 365.5M380.5 234.5C371.5 237.5 344 245.5 327.5 253.5S294 270.5 279.5 282S251 307 239 320.5S212.5 357 207 364.5M276.5 275C270 281.5 249 301 237 315S210 353 204.5 361M452 268C443.5 271 416.5 278 399.5 283.5S366 296.5 350 303.5S318.5 319 302.5 327.5S271 346 255.5 354.5S218 375.5 210.5 379.5M386.5 248C378 251.5 351.5 260 335 268S301 286 286 297S257 321.5 244.5 333.5S214.5 365 209 371M439 233C430.5 236 404 243.5 387 250.5S352 265 336 274.5S305.5 295 291 306S263 330 249 341.5S216.5 370 210 376M391.5 199.5C385 200 365 201.5 352 205S325 214 312.5 220.5S287.5 234.5 277 244.5S257.5 266 249.5 278.5S233 311.5 229.5 318M337 184.5C331 184.5 312.5 183.5 301 186S276 193 265.5 199S245 214 237 223S222 243 217 254S209 284.5 207.5 290.5M388 196.5C381.5 198 360 200 346.5 204S319.5 212.5 307.5 219.5S285 235 275.5 244.5S256.5 266.5 249 278S231.5 308 228 314" stroke="#14171a" stroke-width="0.6" opacity="0.4"/>
<path d="M586 290C579 283 560.5 257.5 544.5 246S509 228.5 491 221S455 207.5 437 203S400 195.5 382 193S336 190 326.5 189.5M448 246.5C444 244.5 432.5 238 424.5 234.5S403 228 399 226.5M433.5 213.5C424 216 396 222 378 227.5S342 238.5 325 247S291.5 266.5 277 278S249 303.5 237 317.5S211.5 356 206 363.5M432.5 212C423 214.5 395 220.5 377.5 227S342 241 325.5 250S293.5 270 279.5 282.5S247 317 240.5 324M445 266C438 268 416.5 274 403 278.5S375 288 362 294S335.5 307.5 323 314.5S298 329 286.5 337S258.5 358 253 362.5M431 237C424 239 401.5 244.5 387 249S352.5 261.5 345.5 264M377 230C370.5 232.5 350.5 239 337.5 245S305.5 262.5 299 266M422 216.5C414.5 219 392 224.5 378 229.5S349.5 239.5 336.5 246S310.5 259.5 298.5 268S276 286 266 296.5S242.5 324.5 237.5 330M398 269C391.5 272.5 371.5 281.5 359.5 288.5S335 304 323 312.5S299 330.5 287.5 339.5S259.5 361.5 253.5 366M345.5 442.5C339.5 445 323 453 312 458S290 467 279 471.5S256.5 481 245 486S223 496 212.5 501.5S187 516 182 519M167 543.5C164.5 548.5 157 564 153.5 575S146.5 602.5 145 608M149 539.5C146 545.5 136.5 563 131.5 574.5S120.5 597 117 608.5S110 633 109.5 645S108.5 670 112 681.5S121 703.5 127.5 714S148 739 152 744" stroke="#3d4246" stroke-width="0.6" opacity="0.6"/>
<path d="M486.5 252C479.5 248 459.5 234.5 445.5 228S416.5 216.5 401.5 212S371 203 356 200S317.5 193.5 309.5 192.5M553 246.5C544.5 242 519.5 227.5 502.5 219.5S469 205.5 451.5 201S414 193.5 395.5 191S349 187 339.5 186M431 206C421 208 392 212 373.5 217.5S336.5 230 320 239S287.5 257.5 273 269.5S246.5 297 235 312S210 352 205 360M435.5 221.5C426.5 223.5 398 228 380 233S344.5 244.5 327.5 252S292.5 268.5 277.5 279.5S249.5 305 237.5 319S211 355.5 206 363M449 259C440.5 261.5 414 269.5 397 275.5S355 292.5 347 296M456.5 277.5C448 280.5 421.5 288.5 404.5 295S371 308.5 355 316S324 332.5 308.5 341S276.5 357.5 260.5 365S221 381.5 213 384.5M437 220.5C427.5 222 400 225.5 381.5 230S343.5 239.5 326 247S290 264.5 274.5 275.5S245.5 300.5 234 315S210 354 205 362M351.5 273C345.5 276.5 326.5 286.5 314 294S283 313.5 277 317M312.5 402C319 399.5 339.5 394 350.5 386.5S374 362 378.5 357M303 425.5C296.5 428 278 436 265.5 441S234 451.5 227.5 454M244 595C245.5 601 250 619.5 253 632S259 657 264.5 668S282 693 285.5 698M274.5 676.5C275.5 678.5 278 683.5 279.5 687S283.5 693 285.5 696S292 704 293 706M263.5 673.5C265 675.5 270 681 273 685S278.5 693.5 281.5 696.5S291.5 703.5 293.5 705M215.5 391.5C214 399.5 211.5 423.5 208.5 439S198.5 478 196.5 485.5M145.5 677.5C148 682 156 698 163 707S181.5 728 185.5 732M160.5 608.5C160.5 614 160 629.5 162.5 640S168 661 172.5 670S184 687.5 190.5 695S209.5 713.5 213 717.5M165.5 543.5C163 549 156 564.5 151.5 575S141.5 595.5 138.5 606.5S134 629 134.5 640.5S138.5 664 143 675S154.5 696.5 161.5 706S182.5 728 187 732.5" stroke="#3d4246" stroke-width="0.8" opacity="0.6"/>
<path d="M472 287.5C467.5 282.5 454 264.5 443.5 255.5S420.5 239 407.5 233S373 221.5 366 219M557 291C552 284.5 538.5 261.5 525.5 250.5S495 232.5 478.5 225S444 211.5 427 206S392 195.5 374 192.5S329 188.5 320 187.5M527.5 287.5C522.5 281.5 508 261.5 495.5 251.5S467 233.5 452.5 226.5S422 215.5 406.5 211S373.5 201.5 357.5 198.5S318 193.5 310 193M360.5 328C352.5 332 329.5 345 314 353S283 372 266.5 378.5S224 389.5 215 392M347 295.5C338.5 299.5 313 311.5 297.5 321S260 345.5 252.5 350.5M454 271.5C445.5 274 420 280 403 286S368 299 351 306S318 321.5 302 330S270 348 255 356.5S218.5 377 211.5 381M380 194.5C373.5 195.5 353 198 340 201.5S314 210.5 303 217.5S276.5 238.5 271.5 243M383 196.5C376 197.5 356.5 198.5 343 202S315.5 209.5 303.5 216S279 231 269 240.5S250 261.5 242.5 273S227.5 304.5 224.5 310.5M209.5 397.5C207.5 405.5 202.5 429 197.5 444.5S186.5 474.5 180.5 489.5S164.5 526 161 533M109 652.5C111 661 113.5 688 121 703S147.5 736.5 152.5 743.5M188 447C185 455 177 479.5 170.5 495S154 525 149 541S140.5 573.5 139 590.5S135.5 625.5 137.5 642S149.5 681.5 152 689.5" stroke="#22262a" stroke-width="0.6" opacity="0.6"/>
<path d="M548 246C539.5 241.5 515 227.5 498.5 220S464 206 446 201S401 192 392 190.5M515 255.5C510 252.5 494.5 242.5 484.5 237.5S458.5 226 453 223.5M486.5 235.5C481.5 233.5 465.5 226 455 221.5S428 212 422.5 210M449 258.5C440 261.5 414.5 269 397.5 275.5S364 290 347.5 298S315 315 299.5 324S270 345 255 354.5S218.5 375.5 211 380M430 205C420.5 207 391 211.5 372.5 217S336 229 319 238S286.5 257 273 269.5S247 297 236 312S210.5 353 205.5 361M382 237C373 241 346.5 250 330 259S290.5 285 282.5 290M430.5 234C423.5 236.5 402 243 388.5 248.5S360.5 261 347.5 268.5S322.5 284 311 292.5S289.5 310 279 319.5S253 345 247.5 350M354 424.5C348.5 427 332 434.5 321 439.5S298.5 448.5 287 453S264 462.5 253 467S231.5 475.5 220.5 480S193.5 493 188 495.5M368 389C362.5 392.5 347.5 404 336.5 410S314 420.5 302.5 425S278 434.5 265.5 438.5S242 444 230 448S198.5 460 192.5 462.5M275.5 479C270 481.5 253.5 488.5 243 493.5S222.5 503.5 212 509.5S186 525 180.5 528M252.5 207C249 215 235 237.5 230 253S224 285 221 301.5S214.5 334.5 210.5 350.5S202 381.5 197.5 397.5S188.5 429.5 183.5 445.5S172.5 477.5 166.5 493.5S151.5 524.5 147 541.5S140.5 575.5 138.5 593S135.5 627.5 137 644S141.5 677.5 148.5 692S173 725 178 732M237.5 201C234 208.5 219.5 231 214 247.5S207 282 204 299.5S200 334.5 197 352S191.5 386.5 187.5 403.5S179 437.5 173 453.5S158.5 485 151.5 501S134 541.5 130.5 549.5M181 547C179.5 551.5 174.5 565 171.5 575S165 594.5 164 605S164 627.5 166.5 638S174 659.5 179.5 669S191.5 688 198.5 696S217.5 715 221 718.5M154.5 540.5C152 546 142.5 562.5 137 573.5S125 595 121 607S114.5 631.5 114 643.5S114 669.5 117.5 681.5S127.5 704 134 714.5S154.5 738.5 159 743M174 546C172.5 551 167.5 566.5 165 577S159.5 598.5 158.5 608.5S156.5 629 158 639.5S162.5 660 167 670S181.5 693.5 184.5 698M171 545C169.5 550.5 163.5 565.5 160.5 576S153 603 151.5 608.5M170.5 607C171 612 171 627 173.5 636.5S179 656.5 184 665.5S201.5 687 205 691M620.5 294C621 301 622.5 322 623.5 336.5S624 365.5 626 380S634 416 636 423" stroke="#3d4246" stroke-width="0.8" opacity="0.4"/>
<path d="M543 287.5C537.5 281.5 522 260 508.5 249.5S479 232 463.5 225S432 212.5 415.5 208S383 200.5 366 197.5S324.5 193 316 192M542.5 289.5C537 283 523 262 510.5 251S482 233 466.5 225.5S434 212.5 417.5 207.5S376.5 197 368 194.5M434 215C425 217.5 397 223 379.5 228.5S343.5 240.5 326.5 249S292.5 268.5 278 280S250 306.5 238 320.5S212.5 359 207.5 367M454 271C445.5 273.5 418.5 280 401 285.5S366.5 297.5 350 304.5S317 319.5 301.5 328S271 347.5 256 356.5S219 377 211.5 381M283 288.5C276 294.5 254 312.5 241 325.5S212 359 206.5 366M457 279C448.5 281.5 423 288.5 406 294.5S371.5 307 355 314S321.5 329.5 305.5 337.5S275 354.5 259.5 362.5S219.5 380 211.5 383.5M445 247C436 249.5 410.5 256.5 393 262.5S357 274.5 340.5 282S308.5 299.5 293 309.5S263 332.5 249 343.5S217 371 210.5 376.5M365.5 193C359 193 339 193 326 195.5S299 202.5 287 208.5S264.5 223 255 232S237 253 230.5 264.5S218.5 295 216 301M205.5 368.5C209 373.5 218 391.5 228 398.5S252.5 409 266 410.5S301.5 409 308.5 408.5M370.5 382.5C365 386.5 350 400 339 407S317 420.5 305 425.5S280 435 267.5 438.5S241 443.5 228 447.5S196.5 460 190 462.5M190 446.5C187 454.5 179 479.5 173 495S157 523.5 152 539.5S144.5 581 143 589.5M209 441C207 448.5 202.5 473 197.5 488S180.5 525 177 532.5" stroke="#2a2e32" stroke-width="0.6" opacity="0.6"/>
<path d="M568 288C562.5 281 547 258.5 533.5 247.5S503.5 229.5 487.5 222S455 209 438 204S404 195 386.5 192.5S342 189.5 333 189M484 286C478.5 281 463.5 263.5 452 254.5S427.5 238.5 414 232.5S386 223.5 372 219.5S344 210.5 330 207S294.5 199.5 287.5 198M473 253.5C466.5 250 447 237.5 433 231.5S397 219 389.5 216.5M570 289C564.5 282 549.5 258.5 536 247.5S506 229.5 490 222.5S457.5 209 440 204S396.5 193.5 388 191.5M508 287.5C502.5 281.5 488.5 262 476 252.5S449.5 237 435 230.5S405 218 389.5 213.5S359.5 205.5 344.5 202S306.5 195.5 299 194.5M342 451C336.5 453 319 460 308 464.5S285 473.5 274 478S252.5 488 242 493S221.5 503.5 211.5 509.5S186.5 524 181.5 527M340 455C335 457 319 464.5 308 468.5S286.5 475 275.5 479S253 487.5 242.5 492.5S221.5 503 211 508.5S186 523 180.5 526M297 437C291 439.5 272.5 448 260 453.5S235.5 462 223.5 467S193.5 482 187.5 485M176 532C175 540 171.5 564 171.5 580S171.5 612.5 175.5 627.5S190.5 663.5 193.5 671M151 501C148 509 137 532.5 131 549S118.5 591.5 116 600.5" stroke="#181b1d" stroke-width="0.6" opacity="0.4"/>
<path d="M567.5 289C561.5 282.5 547 260 533.5 249S501.5 230.5 485 223S451 209 434 204S398.5 195.5 380.5 193S335.5 189 326.5 188.5M254 670C256 672.5 261 680 265 684.5S273 693.5 277.5 697S290 704.5 292 706" stroke="#33373b" stroke-width="0.8" opacity="0.8"/>
<path d="M583 290C577.5 283 564.5 259.5 551.5 247.5S521.5 227 504.5 219S468.5 205 450 200S413 191.5 394.5 189S347.5 186.5 338.5 186M164 499C160 506.5 147 528 140.5 543.5S129.5 575.5 127 592S123.5 626.5 126 643.5S138.5 685.5 141 694" stroke="#181b1d" stroke-width="0.6" opacity="0.8"/>
<path d="M553 288.5C547.5 282 533 259 519.5 248.5S488.5 231 472.5 224S440 211.5 423.5 206.5S388.5 197 371.5 194S329 191 320.5 190M269 210.5C265 217.5 249.5 238 243 253.5S235.5 286 231.5 302S223.5 334 219.5 349.5S211 380.5 206.5 396S199 428.5 194.5 444S183.5 475 177.5 490S161.5 520.5 157 536.5S151 569.5 150 586.5S147.5 622.5 149.5 639S156 672 163 686.5S185.5 721 190 727.5M265 208.5C261 216 247 237 241 252.5S231.5 284.5 227.5 300.5S220 332.5 216.5 348.5S209.5 380 206 396S201 428 197.5 444S188 476.5 182.5 492S167 521 163 536.5S156 569 155.5 585S156 617 160 632.5S171 663.5 179 677.5S203.5 710 208.5 716.5" stroke="#2a2e32" stroke-width="0.6" opacity="0.8"/>
<path d="M564.5 286.5C558 280 541 258 526.5 247.5S495 229.5 478.5 222.5S445 210.5 428.5 206.5S395.5 199.5 378 197S332 192.5 323 191.5M310 189.5C304 192 286 198.5 275 205S254 219 245.5 228S229.5 248.5 224 259.5S213.5 288.5 211.5 294" stroke="#1d2023" stroke-width="0.6" opacity="0.4"/>
<path d="M421.5 208C412.5 206 387 198 369.5 194.5S327 190 318.5 189M528.5 288.5C523 282.5 508 262 495.5 251.5S468.5 234.5 453 228S420 216 404 211S372 201.5 355.5 198.5S315.5 192.5 307.5 191.5M444.5 249C436 252 411 260.5 394.5 267S361 280.5 345 289S304.5 312 296 317M288.5 304.5C282 310 261 327 248 338.5S216 368 209.5 374M442 234C433 236 405.5 240.5 387 245.5S350 256.5 332.5 265S299 283.5 284 294.5S255.5 318 242.5 331S214 364 208.5 371" stroke="#14171a" stroke-width="0.8" opacity="0.6"/>
<path d="M481 287.5C476 282 463.5 263.5 453 254.5S429 239 415.5 232.5S387 222 373 217.5S346 208 332 204.5S297.5 198 290.5 196.5M292 456.5C285 458.5 263 464.5 250 470.5S219.5 490 213.5 494" stroke="#14171a" stroke-width="0.8" opacity="0.8"/>
<path d="M443 255C437.5 251.5 422.5 240 411 234S388 223.5 375.5 219S349 209 335 205.5S300 198 293 196.5" stroke="#22262a" stroke-width="0.8" opacity="0.8"/>
<path d="M479 286.5C474 281.5 460.5 263 449 254.5S423.5 239 410 233S383 223 369 218.5S340.5 210.5 326.5 207S292.5 199 285.5 197.5M338.5 472.5C332.5 475 315 482.5 303.5 486.5S278 492 269.5 499S254.5 517 251.5 528S249 552 249.5 564S252 588 254 599.5S259 622 262.5 633.5S267 656.5 272 667S291 690 294.5 694.5M179.5 625.5C183 633 192 656 200 669.5S224 702 228.5 708.5" stroke="#33373b" stroke-width="0.6" opacity="0.8"/>
<path d="M515 288C509 282 493 263 480.5 253S452.5 235 437.5 228.5S406.5 218 390.5 213.5S359 205 343.5 202S304.5 196.5 297 195.5M292.5 452C285 454.5 262 460 248 466S217 477 207.5 488S192.5 516 189.5 530.5S188.5 562.5 190 578S198.5 615.5 200 623" stroke="#1d2023" stroke-width="0.8" opacity="0.8"/>
<path d="M442 202.5C433 200.5 406 194 388 192S343.5 189 334.5 188.5M529.5 287C523.5 281 508 261 495 251.5S467 235.5 452.5 229S423.5 217 408 212.5S376.5 203.5 359.5 200S317 194 308.5 192.5M378.5 230C369.5 233.5 341.5 242.5 325 250.5S285.5 274.5 277.5 279.5M439 228C430 230 402.5 234.5 384.5 239.5S347.5 250.5 330.5 258S296.5 275.5 281 286.5S252 311.5 239.5 324.5S213 359 207.5 366M444.5 244C435.5 247 409 253.5 391.5 260S357 274 340.5 282.5S307.5 300.5 292 310.5S264 334 250.5 345S217 371.5 210 377M370.5 193C363.5 193.5 342.5 194 329.5 197.5S305 206.5 294 213S271.5 228.5 262 238S244 257.5 237 269S223.5 299.5 220.5 305.5M265.5 441.5C259 443.5 239 448.5 226.5 453S196 466.5 190 469.5M351 428.5C345.5 432 329 442.5 317.5 449S294 459.5 282.5 465S259.5 474.5 248.5 480S225 491.5 214 498S187.5 515 182 518.5M339.5 459.5C332.5 461 312.5 465 299 468.5S269.5 474.5 257 480.5S233 494 225 504S212.5 529 210 542S208.5 570 210 584S215 611.5 218.5 625S226.5 654 233 666.5S254 696.5 258 702.5M305 490.5C299.5 492.5 280 495.5 272 502.5S257.5 521.5 254.5 532S253 554.5 254 566S256.5 589.5 258.5 600.5S262.5 622 265 633S270 657.5 275 667.5S291.5 690 295 694.5M199.5 400C197.5 408 194.5 433.5 189.5 449.5S177 481 170 496.5S153.5 525.5 148 541S139.5 572.5 137.5 589S136.5 631.5 136.5 639.5M227.5 346.5C225.5 354 219 376 216 392S212.5 424 209.5 440S201 478 199 485.5M144 542.5C142 551 132.5 575.5 130 592S127 625.5 129 642.5S136.5 676.5 144.5 692S170.5 728 176 735" stroke="#33373b" stroke-width="0.8" opacity="0.4"/>
<path d="M571 290C565 283 549.5 259 535.5 247.5S503.5 229 486.5 221.5S451 208 433.5 203.5S398 195 380.5 192.5S336 189.5 327 189M439 229.5C430 232 402.5 237 384.5 242.5S349.5 254.5 332.5 262.5S291 285.5 283 290M458 284.5C450 288 424.5 297.5 408.5 305S377 320.5 361.5 329S331 346 315.5 354S283.5 370 266.5 376S223.5 388.5 215 391M461 286C452.5 288.5 426.5 297 409.5 303S376 315.5 360 323S327.5 339.5 311.5 348S280 366.5 264 373.5S223 387 214.5 390M356.5 188C350 189 330.5 190 318 193.5S294 202 283.5 209S262.5 225 254 234.5S238 254.5 231.5 265.5S217.5 294.5 215 300M375 195.5C368.5 196.5 348.5 197 335.5 200.5S310.5 208.5 299 215S277 230.5 267 240S248.5 260.5 241 272S226 302 223 308M359 190.5C353 191.5 334.5 193 322.5 196.5S299 204.5 288 211S266 225.5 256.5 234.5S238.5 254.5 232 265.5S219 295 216.5 301M382.5 195C375 195.5 352.5 196 338.5 199S310.5 206 298 212.5S272.5 228.5 263 238.5S246 260 239.5 271.5S225.5 302.5 223 308.5" stroke="#1d2023" stroke-width="0.8" opacity="0.4"/>
<path d="M509 287.5C504 281.5 490 262 478.5 253S452.5 237.5 439 231S410.5 220.5 395.5 215.5S364.5 205.5 349 202S309 195 301 193.5M491.5 235C486 232.5 470 225 459 220.5S431 211.5 425.5 209.5M491 235C485.5 232.5 469.5 224.5 458.5 220.5S430 212 424.5 210.5M464.5 242.5C460 240.5 446 234 436 230S411.5 222 407 220.5M537.5 280C533 276 520.5 263 511 256S491.5 243.5 481.5 238.5S456 228 451 226M477.5 261.5C473 258.5 461 249.5 452 245S430 235 425.5 233.5M488.5 284C485.5 280.5 478 269 472 263S459.5 251.5 452 246.5S435 237 426.5 233S405.5 224.5 401.5 222.5M563 244C559 241 546.5 232 538 227.5S517.5 218 513.5 216.5M578.5 286C576.5 282 572.5 269.5 568 263S557.5 252.5 551.5 248S538.5 239 531.5 234.5S513 224 509 221.5M437.5 224C428 226 399 231.5 381 237S345 250.5 328.5 259S296.5 277.5 282 289S255 314 242.5 327S214 361 208.5 367.5M440 229.5C431 232 402.5 239 384.5 245S341.5 263.5 333 267.5M408 293C401.5 295.5 382 303.5 369 309.5S344 323 331.5 329.5S306.5 343.5 294.5 351S263 368.5 256.5 372M363 296.5C356.5 299.5 336.5 310 324 317S300.5 331.5 288.5 339S258.5 359 252.5 363M348 435.5C342.5 438.5 327.5 447 317 451.5S294.5 460 283.5 464.5S261 473.5 249.5 478S226 485.5 215 490.5S188.5 504.5 183.5 507.5M361 407C355.5 410.5 338.5 421.5 327 427.5S305 438.5 293.5 444S270 455 258 460S232.5 468 221 473S193 487 187.5 490M258.5 456.5C252.5 458.5 234 464.5 222.5 469.5S194 483 188.5 486M265.5 633.5C267 639 269.5 657 274.5 667S293 690 297 694.5M210.5 395C209 403 204.5 426.5 200.5 442S192.5 473.5 186.5 489S170.5 517.5 166.5 533S163 573.5 162 581.5M282 214C277.5 221 261.5 239.5 254.5 254S246 285 241.5 300.5S232 331.5 227.5 347S218 377.5 215 393S211.5 425.5 208 441S200.5 472 195 486.5S178 515 174 530.5S170.5 562 171 578S173 611 177 626.5S188 657 196 671S219.5 703.5 224 710M217 301C215.5 309 210 334 206.5 350.5S200.5 384 196.5 400S187.5 433 181.5 449S165 489 162 497" stroke="#3d4246" stroke-width="0.6" opacity="0.4"/>
<path d="M519 288C514 282 501 262 488.5 252S461 234.5 446.5 228S416 216.5 401 211.5S371 202 355.5 199S315.5 194 307.5 193.5M162 579C160.5 584 156 599 154.5 609S152 630 153 640.5S156.5 660.5 160 670S173 693.5 175.5 698M173 546C171.5 551 167 566 164 576.5S157 597 156 607.5S154 628.5 156 639S162 660.5 167 670.5S179 689.5 186 698S206.5 716.5 210.5 720" stroke="#3d4246" stroke-width="0.8" opacity="0.8"/>
<path d="M507.5 256.5C502.5 253.5 488 243.5 478 238S456.5 228.5 446.5 224.5S421 216.5 416 215M494 281.5C490 278.5 478.5 268.5 470.5 263S455 252.5 447 248.5S430.5 241.5 421.5 238.5S399 231.5 394.5 230M483.5 237C478 234.5 462.5 227.5 452 223S424 214.5 418.5 212.5M440 242C431.5 244.5 404.5 252 387.5 258.5S352.5 272.5 336 281S304.5 298.5 289 309.5S252.5 339.5 245.5 345.5M310.5 288C304.5 292 285 305 274 314S248.5 338 243.5 343M364 297C357.5 300.5 337 311 324.5 318.5S300.5 334 288.5 342S260.5 362.5 255 366.5M447.5 274C441 276.5 422 283 408.5 288.5S380.5 299 367.5 305.5S342 319.5 329.5 327S305 342 293 349.5S264 369.5 258 373.5M386 245C379 247.5 358 253.5 344.5 259S317.5 270 305 277S279 292.5 268 301.5S243 326.5 238 331.5M403.5 281.5C397 284.5 377 293 364 299.5S333 317.5 327 321M318.5 397.5C324.5 394.5 345.5 387.5 356.5 379S378.5 352 383 346.5M255.5 631.5C257.5 637.5 261.5 657 267.5 668S287 692.5 291 697.5M339.5 446.5C332 447.5 310 451 295 454.5S263.5 461.5 249 467S219 478.5 209 489S193.5 515 190.5 530S190 561.5 191.5 577S197 608.5 201.5 623.5S212.5 653 220 666.5S242 698.5 246.5 705M202.5 301.5C201.5 310.5 200 337 197.5 354.5S192 388 187.5 404.5S176 436.5 169 452S153 484 146 500S132 531.5 126.5 548.5S116.5 582 113.5 599.5S109.5 645 108.5 654M196 350.5C194 358.5 188.5 384 184 400.5S174 434.5 168 451S154.5 484 148 500.5S133.5 543 130.5 551.5M135.5 573.5C133 579 124 595.5 120 607S112 632.5 111.5 645S112.5 670 116 681.5S129.5 710 132 715.5M169 608.5C170 613.5 170.5 628.5 173.5 638S184.5 661.5 186.5 666M174 578C173 583 169.5 597.5 169 607S167.5 627 170 637S176 657 181 666S197.5 688 201 692.5M162 544C159.5 549 151.5 564 146.5 574.5S136.5 596 133 607.5S126 630.5 125 642S125.5 666 128.5 677.5S137.5 699.5 144 710S163.5 734 167.5 739" stroke="#5a5f63" stroke-width="0.6" opacity="0.4"/>
<path d="M485.5 235.5C480.5 233 465.5 225 455.5 220.5S429.5 211.5 424 209.5M574.5 286.5C572.5 282.5 569 269 564.5 262.5S552.5 251.5 546 247S532.5 238.5 525.5 234.5S508 226 504.5 224.5M594 288.5C592.5 284.5 589.5 271 584.5 263.5S573 250 566.5 244.5S552 235.5 543.5 231S522 219 517.5 217M341 447C333.5 448 309.5 450 294 453.5S262 461 248 467S217.5 478.5 208.5 489.5S194.5 516.5 192.5 531.5S193.5 564 196 579.5S203 611 207.5 625.5S216 654.5 223 667.5S244 697 248.5 703" stroke="#3d4246" stroke-width="0.4" opacity="0.4"/>
<path d="M511.5 255C506 252 491 242 481 236.5S460.5 226.5 450.5 223S424 216 419 214.5M481.5 284C478 280.5 469 270.5 462 264.5S446.5 254 438.5 249.5S422 241.5 414 238S393 231 389 229.5M478 262C473.5 259 460 250.5 450.5 246S432.5 238 423 235S399.5 228.5 395 227M570 262C566.5 259 556.5 249 549.5 244.5S535.5 236.5 529 233S512 224.5 508.5 223M554 263C551 260.5 542 253 535.5 248.5S522 240 515.5 236.5S500 229 497 227.5M571.5 263.5C568 260.5 559 251 552 246S533 236 529.5 233.5M554.5 264.5C551 262 542 253.5 535.5 249S522 241 515 237.5S498 230 494.5 228.5M563 244.5C559 242 547 235 539.5 230.5S520.5 219.5 516.5 217.5M581.5 286C579.5 282 575.5 270 570.5 263.5S560 250 553.5 245S539.5 236.5 532 232.5S514.5 222.5 511 220.5M455 278.5C447 282 423 292 407 299S375 314.5 359 323S328 340.5 312.5 349S281.5 367.5 265 374.5S223 388.5 214.5 391M463.5 291C454.5 293.5 428.5 301 411.5 307.5S377.5 321 361 328.5S328.5 343.5 312.5 351.5S280 369 264 375.5S222.5 388 214.5 390.5M300.5 327C293 332.5 270.5 349 256 358S220.5 379 213.5 383M433 214.5C423.5 216.5 393.5 221 375 225.5S338.5 234.5 321.5 241.5S288 257.5 273.5 269S246.5 295.5 235 310.5S209.5 351.5 204.5 360M438.5 255C431.5 257 411 263 397.5 268S371 277 357.5 282.5S329.5 295.5 317 302.5S287 322.5 281 326.5M314.5 293.5C308 298 288.5 310 277 319S251 342 245.5 346.5M327 321.5C320.5 325 302.5 336.5 290.5 344S260 363 254 367M316 393C322.5 390.5 343.5 384.5 355 377S380 351.5 385 346.5M358.5 414C353 417.5 337 427.5 326 433S302 443.5 290 448.5S265 457.5 253 462.5S230 472 219 477.5S192 492.5 186.5 495.5M349.5 431C344 434 327 443 316 448.5S289 461 283.5 463.5M293.5 440C287.5 442.5 269 450.5 257.5 455.5S235 464.5 224 469.5S195 483 189.5 485.5M264 634C265.5 639.5 269 658 274.5 668.5S291.5 692 295 696.5M338.5 472.5C333 474.5 317 480.5 305 484.5S277.5 488.5 267 494.5S248 509.5 243 519.5S236 543 235.5 555.5S237.5 581 239.5 593.5S244 619 247 631.5S252.5 656.5 258 667.5S276 693.5 279.5 699M340 449C332.5 450.5 310 453.5 295.5 457S264.5 464 251 470S222 481 213 491.5S198.5 518.5 196 533.5S195.5 565 197 580S203 609.5 208 624S218 653.5 225 666.5S247 697 251 703M199 535C199.5 542.5 199.5 564.5 201.5 579.5S211 617.5 212.5 625M222.5 662C224.5 665 230.5 674.5 234.5 680.5S242 692 247 696.5S262 705.5 265 707.5M177.5 623.5C181 630.5 190 652 199 665S225.5 697.5 230.5 704M135.5 573.5C133 579 124 595.5 120 607.5S113 638.5 111.5 645" stroke="#4a4f53" stroke-width="0.6" opacity="0.4"/>
<path d="M521.5 284C518 280 508.5 267 500.5 260S483.5 247 474 241.5S454 232 443.5 228S416 219 410.5 217.5M489.5 260.5C485 257.5 472.5 247.5 463.5 242.5S440.5 231 436 229M546 281.5C541.5 277 530.5 261.5 521 253.5S499.5 240 489 234.5S466 224.5 455 220.5S428.5 213 423.5 211.5M454.5 279C445.5 282 419.5 289.5 402.5 296.5S370 312 354 320.5S323 339 307.5 347.5S270 369 262.5 373.5M350.5 270.5C344 274.5 324 284 311.5 292S283 314.5 277 319M454 288.5C447 291 427 298 413.5 303.5S386.5 315.5 374 322S350 336.5 338 343.5S314.5 357 302 363.5S269 379 262 382.5M210.5 354C214.5 359.5 223.5 379.5 234.5 387.5S260.5 398.5 274 400S302.5 400 316 396.5S348 383.5 354.5 381M286 458.5C280.5 461 264 467 252.5 471.5S230.5 480.5 219 486S190.5 500 185 503M340 444.5C332.5 446 309 449 293.5 452.5S263 460 248.5 465.5S216.5 477 206.5 487.5S190.5 514 187.5 528.5S187 561.5 189 577S195.5 608 200.5 623S210.5 652.5 218 666S241.5 698.5 246.5 705M338.5 476C333 478.5 316.5 486 305.5 490S280.5 494 271.5 500.5S255 516.5 251 527S248 551.5 248.5 563.5S250 587.5 252 599S259 621 262.5 632.5S267.5 658 272.5 668.5S290.5 691 294 695.5M203 658C205.5 661.5 212.5 673 217.5 680S227 694 233 699S250 709 253.5 711M225 662C226.5 665 231.5 674.5 235 680S241.5 692.5 246 697.5S260 708 263 710" stroke="#5a5f63" stroke-width="0.8" opacity="0.4"/>
<path d="M532 281C528.5 277 518.5 264 511 257S495 244 486 238S468 227 458 222.5S431.5 213.5 426.5 211.5" stroke="#3d4246" stroke-width="0.4" opacity="0.6"/>
<path d="M542.5 281.5C538.5 277 526.5 263.5 518 256.5S494.5 241 490 238M471 241C466.5 239 452 231 442 227S416.5 219 411.5 217.5" stroke="#5a5f63" stroke-width="0.4" opacity="0.6"/>
<path d="M539.5 282C535.5 278 525.5 264 517 256.5S493.5 240 488.5 237M456.5 243C451.5 241 437 234.5 428 231S405.5 224 401 223M540 248.5C536.5 246.5 526 240.5 519.5 237S503 228 500 226M566.5 285.5C565 281.5 562 269.5 557.5 263.5S543.5 250.5 540.5 248M586.5 263.5C583 260 573 249.5 565.5 244S549 234.5 541 230S520.5 219 516.5 217M449 269C440.5 272 415 280.5 399 287.5S359.5 306.5 351.5 310.5M393 271C384.5 275 358 285 342 293.5S310 311.5 294.5 321.5S257.5 348 250 353.5M450 282C443.5 284 422.5 291 409.5 296S383.5 305.5 371 311S345 324.5 332 331S306.5 342.5 294 349.5S262.5 367 256 370.5M439.5 257C433 259 413 264 399 268S369.5 275.5 356 281S329.5 294 316.5 301.5S290.5 316.5 279 324.5S253 346.5 248 350.5M380.5 233.5C373.5 236 353 243.5 339.5 249.5S313 260.5 300.5 268S276.5 285.5 265.5 295.5S240.5 321 235.5 326.5M322.5 313C316.5 317 298.5 328.5 287 337S258.5 357.5 252.5 362M207.5 368C211.5 372.5 221 390 231 397S255 407.5 267.5 409S294 409 307 407S334 402.5 345.5 396.5S370.5 375.5 375.5 371M322 442C316 444.5 299 452 287.5 456.5S264.5 465 253.5 469.5S225 480 219 482.5M338.5 442C330.5 443.5 307.5 446.5 292 450S262 457 246.5 462S212.5 471 201 481S182 507 178 522S175 554.5 176.5 571S182 603 187.5 619S200 651.5 208.5 666S233 700 238 707M150 538.5C147 544.5 136.5 561.5 131.5 573.5S120.5 598.5 117.5 610.5S113 634.5 112.5 647S113.5 672.5 116 683.5S123 705.5 129 715.5S146.5 738 150 742.5" stroke="#4a4f53" stroke-width="0.8" opacity="0.4"/>
<path d="M456 244C452 242 440 234.5 431.5 231S409.5 224.5 405.5 223M580 287C578.5 283 575.5 270 571 263.5S561 252 555 247S541 237 534 232.5S515 223 511 221M340 444.5C332.5 446 309 450 293.5 453.5S262.5 461 248.5 467S218.5 479 209 489.5S193 516.5 190.5 531S189.5 561.5 191.5 576.5S197 608 201.5 623S211.5 652.5 219 665.5S242 697 246.5 703.5M337.5 457.5C331 460 310 466.5 297 471S270.5 478 259.5 484.5S238 498.5 232 509.5S223.5 535.5 222 548.5S222 574 224 587S229 614 233 627S243 653.5 250 665.5S271 692.5 275 698" stroke="#4a4f53" stroke-width="0.4" opacity="0.4"/>
<path d="M513 257C508 254.5 494.5 245 484.5 239.5S463.5 229 453 225S425 216 419.5 214M341.5 442C333.5 443 310 446 294 449S260.5 456.5 245.5 462.5S213.5 473.5 203.5 484S186.5 511.5 184 527S184 560.5 187 576.5S195 608.5 200 623.5S210 654 217.5 667.5S239.5 698.5 244 704.5M238 593C239.5 599 244.5 618 247.5 631S256 662.5 257.5 668.5" stroke="#5a5f63" stroke-width="0.4" opacity="0.4"/>
<path d="M324.5 243C316 248 289.5 260.5 274.5 272.5S241 306.5 234.5 313M450.5 262C442 265 417 274 400 280.5S358 299 349.5 302.5M342.5 286.5C334.5 291.5 310 306 295 316S267 338 253 348.5S218.5 374.5 211.5 379.5M283.5 292C276.5 298 254.5 316.5 242 329.5S214.5 363 209 370M390.5 198.5C383.5 199.5 363 201 349.5 204.5S321.5 213 309 219.5S285 234.5 275 244.5S256.5 266.5 249 279S233.5 310.5 230.5 317M338.5 458C332 459.5 312.5 464.5 299 468S270 474 258 480S233.5 494.5 225.5 504.5S214 529 211.5 542.5S211.5 571 213.5 585S218 613 222 626.5S230.5 654 237 666.5S257.5 695 261.5 701" stroke="#181b1e" stroke-width="0.8" opacity="0.6"/>
<path d="M296 313.5C288.5 319 265.5 335.5 251 346S216 371.5 209 376.5M446 248.5C437 251 410.5 258 393 264S350 282.5 341.5 286M380 230.5C371 234 344 242 326.5 250S292 267.5 277 279S244.5 312 238 319M440 232C430.5 234 403 240 385.5 245.5S342.5 263.5 334 267M445 245.5C436 248 408 254 390.5 260.5S357 274 340.5 282S307 299.5 292 309.5S263 331 249 342S216 369 209 374.5M443 243C434.5 246.5 408 255.5 391.5 263S358.5 278 342.5 287.5S312.5 307.5 297.5 317.5S268.5 339.5 254 349.5S218 374 210.5 378.5M393.5 197.5C386 199 364.5 201 351 204.5S323 213 311 220.5S288 237.5 278 247.5S259 268.5 251 280.5S234 312 230.5 318.5M231 252C229.5 260 224.5 285 221.5 301.5S214 334 210.5 350S204.5 383 201 399.5S192 431 187 447S176 478.5 170 494S155.5 524.5 151 540.5S143 573.5 141.5 590S140 623.5 142.5 639.5S150.5 673.5 158 688S182.5 721.5 187.5 728.5M220 249C218.5 257.5 213.5 283 210 300S204 334 201 351S195.5 385 191.5 402S180 443 177.5 451.5M206.5 397C205 405.5 201 430.5 196.5 446.5S183.5 484.5 181 492.5M248.5 203C244.5 210.5 230 233 224 249S216 282 212.5 299S207.5 334 204.5 351.5S199.5 385.5 195.5 402S187.5 435 182 451S168.5 482.5 161.5 498S145.5 528 140 544S130.5 577 128 594S124.5 627.5 126.5 644S134 679.5 141.5 695S167 730 172 737M205.5 300C204 308.5 201.5 334 199 351.5S193.5 386 189.5 403S181 437.5 175 453.5S160.5 484 153.5 500S139 532 133 548S121 580 118 597S114.5 640.5 114 649" stroke="#181b1d" stroke-width="0.6" opacity="0.6"/>
<path d="M451 260C442 263 415 271 398 278S364 293 348 301.5S317 320 302 330S265.5 355.5 258 361M299.5 323.5C292 328.5 269.5 344.5 255 354S218 375.5 211 379.5M340.5 293C333 298 309.5 312 295 322.5S259.5 349.5 252.5 355M450.5 277.5C444 280 423 286 409 291S381.5 300.5 368 306.5S341.5 319.5 329 326.5S298 344.5 292 348M421 214.5C414 216 392.5 221.5 378 225.5S348 234.5 334 240.5S307 254.5 295 263S274 281.5 264 292S240.5 321.5 236 327M455 288.5C448.5 291 427.5 298.5 414.5 304S388 315 375 321.5S350 335.5 337.5 342.5S314 355.5 301 362.5S268.5 379.5 262 383M322 314C316.5 318 299.5 330.5 288 339S260 359.5 254.5 364M208.5 361.5C212.5 367 222.5 386 233.5 393S259 403 272 404S300.5 403 313.5 400S340.5 392 351.5 384.5S375.5 360.5 380 355.5M348.5 430C343.5 433 328.5 442.5 318 448.5S296.5 459 285.5 463.5S263 471.5 251.5 476S228 485 217 490S189 503.5 183.5 506M364.5 393C359.5 397 344.5 409.5 334 416S313.5 428 302 433S271.5 443.5 265.5 445.5M262.5 447.5C256.5 449.5 237 455.5 224.5 460.5S194 473 188 475.5M337 476C332 478.5 317 486.5 306 490.5S281 494 272 500S256 517.5 252.5 527.5S248 550 248 562S249.5 586.5 252 598.5S259.5 622 263 633.5S269 657 274.5 667.5S291.5 692 295 697M340 446.5C332.5 447.5 309 449.5 294 453S263 460 248.5 465.5S217 476.5 206.5 486.5S188.5 513 185.5 528S184 560 186 575.5S194 607 199 622S209.5 653.5 216.5 667.5S239.5 700 244 706.5M126 607.5C125 613.5 120 632 120.5 644S124.5 668 128.5 679.5S138.5 702 145 712S163.5 735 167.5 739.5M153 540.5C150.5 546 141.5 562.5 136.5 574S125.5 596 122 608S116 632.5 115.5 644.5S115.5 669 119 680.5S129 703.5 135.5 713.5S154 737 158 741.5M123.5 610C123 616 119 634 118.5 646S120 670 123 680.5S131 701.5 136.5 711S154.5 734 158 738.5M180.5 546.5C179 551.5 175 566 173 576S169.5 597.5 169.5 607.5S170 627.5 173 637.5S182.5 658 188 667S200.5 684 207.5 691.5S225.5 710 229 713.5M161.5 543C159 548 150.5 562.5 145 573S133 594 129 605.5S121.5 630 121 642S123 667 126.5 678.5S136.5 702.5 143 713S161.5 737.5 165 742M170.5 608.5C171 613.5 172 629 174.5 638.5S181.5 657.5 186 666.5S197 684.5 204 692.5S223.5 709.5 227.5 713" stroke="#4a4f53" stroke-width="0.6" opacity="0.6"/>
<path d="M441.5 244C433 246.5 405.5 253.5 388.5 260S354.5 274 338 283S305.5 302.5 290.5 313.5S254.5 342.5 247.5 348M430.5 235.5C423.5 237.5 402 243.5 388.5 248S361 257 347.5 262.5S314 279.5 307 283M335 338C329 341.5 310.5 351.5 298.5 358S267.5 375.5 261 379M443 266C436 268.5 416 274.5 402.5 279.5S375.5 289.5 362.5 295.5S336.5 309 324 316S299.5 330.5 287.5 338S258.5 358.5 252.5 362.5M269.5 411C276 410.5 296.5 410 309 406.5S333.5 399 344.5 392.5S369 371 374 367M234.5 392C241 394 260.5 402 273.5 403S300 402 313 399S338 391 349.5 384S375 361 380 356M277.5 399.5C284.5 399 306 399 319 396S346 387.5 357 379.5S380 354 385 349M216.5 351.5C220.5 357 230 377 240.5 384.5S266 394.5 278.5 395.5S305.5 394 318 390S344.5 380 356 372S380.5 347 385.5 342M233 511.5C231.5 517.5 224.5 536 224 549S226 577 228 590.5S233.5 617 237.5 630S243.5 655.5 249.5 667S270 693 274 698.5M339.5 440C331.5 441 307 443.5 291 447S259.5 455.5 244 461.5S211.5 471 200.5 482S183.5 510 180 525.5S179 557.5 181 573.5S186 606 191 621.5S202 651.5 210 665.5S234 699 239 706M338 449.5C330.5 451 308.5 455 294.5 458.5S266.5 466.5 253 472S224 483 214.5 493.5S198.5 518.5 195.5 532.5S193 562.5 194.5 577.5S200 607 204.5 622S216 652 224 666S247.5 698 252 704.5M338 477C332.5 479 317.5 485.5 306.5 489S280.5 492.5 271 498.5S254 514.5 249.5 525S245 548.5 244.5 560.5S245.5 583.5 247.5 595.5S253 620 256 632S261.5 657.5 266.5 668.5S284 693 287.5 698M193 621.5C196.5 629 204.5 651.5 212.5 665.5S236 698.5 240.5 705M222 627C224.5 633.5 230 654.5 237 666.5S258.5 695 262.5 701M341 445C333.5 446 310.5 450 295 453S262 459 247 464S215.5 475.5 205.5 486S189.5 513 186 527.5S184.5 559.5 187 575.5S194 607 198.5 622.5S209 653.5 216.5 667.5S238 699.5 242.5 706M339.5 453.5C332 455 310.5 459 296 462.5S267.5 469.5 254.5 476S228.5 490 220.5 501S210.5 528.5 209 542.5S208 570.5 210 585S216.5 614 221 627.5S229 654 236 666S257.5 694.5 261.5 700M215.5 346.5C214 355 208.5 379.5 205.5 396S201 429 197 445.5S188 477.5 182 493S166 522 161 537.5S154 577 153 585M221 301C219 309 213.5 333 210 349.5S203 382 199.5 398.5S189 438 187 446M156 672.5C159 677.5 166.5 692 173.5 701S193 721.5 197 725.5" stroke="#6a6f73" stroke-width="0.8" opacity="0.6"/>
<path d="M345.5 303C338 307.5 314 321.5 299 331S263 355 255.5 360M395 260.5C388 263.5 367 272 353.5 278.5S328 293 316 301S293 317 282 326S255.5 350.5 250 355M423.5 222.5C416.5 224 394.5 228.5 380 233S352 242.5 338.5 248.5S312 261.5 300 269S277 285.5 266.5 295S241 321.5 236 326.5M432 240C425 242 403.5 248.5 390 253S362 262 349 268S323.5 281 311 288.5S281 310 275 314.5M368 308.5C361.5 311.5 342.5 320.5 329.5 326.5S304 338.5 291.5 345S261 362 255 365.5M363.5 296.5C357 299.5 336.5 308.5 323.5 315S298.5 328.5 286 336S257 356 251 360M429 236C422 238 401.5 244 388 249S355 263 348.5 266M337 245.5C331 249.5 311 260 299.5 269S277 287.5 267 297.5S243 325 238 330.5M211 349.5C215 355 223 376 234 384S262 397 276.5 399S306 398.5 319.5 394.5S347.5 384 358.5 375.5S382 347.5 386.5 342M289.5 451C284 453 268.5 460 257.5 463.5S234 470.5 222.5 474.5S193.5 484 187.5 486M338 469.5C332 471.5 315 476.5 303 480.5S276 486 265.5 492S246 507 240.5 517.5S233.5 542.5 233 554.5S233.5 579.5 235.5 592S241 617.5 244 630S249 656 255 667S274 692.5 278 698M339 446C331 447.5 308 450.5 293 454S263 461 249 467S218.5 478.5 208.5 488.5S192 514 188.5 529S185.5 560.5 187 576S191 606 195.5 621S206 651 213.5 665S236.5 698 241 705M338.5 474C333 476 315 483 303.5 487S277.5 490.5 268 497S251 514.5 247 525S243.5 548.5 243.5 560.5S245 585.5 247 597.5S251 621 254 632.5S259 656.5 264.5 667.5S282.5 691.5 286 696.5M341.5 453C334 454.5 312 459.5 297.5 463S267.5 467.5 254 473.5S225.5 488 217.5 499S206.5 526.5 205 540.5S206 570.5 208.5 585S215 614.5 219 628S228 654.5 234.5 667S253.5 696.5 257.5 702M258 671C259 673 262 679.5 264.5 684S269 693.5 272.5 698S283 707 285.5 709M252 203C247.5 210.5 232 232.5 226 248.5S219 284.5 216 301.5S211 335.5 208.5 352.5S204.5 386 200.5 402S191.5 434.5 185.5 450S173 480.5 166 495.5S148.5 523.5 143.5 539S136.5 572 135.5 589S134.5 623.5 137.5 641S146 676.5 153.5 692S177 726.5 182 733M163.5 638C165 643 167.5 658.5 172 667.5S187.5 689.5 190.5 693.5M136 571C132.5 577 121.5 593.5 117 605.5S108.5 629 108 642S109.5 669.5 114 682S130.5 711.5 134 717.5M125.5 643C126 649.5 127 669 130 680.5S142 707 144 712M111 644C112 650 112.5 669.5 116.5 681.5S126.5 704.5 133.5 715S153.5 738.5 157.5 743" stroke="#4a4f53" stroke-width="0.8" opacity="0.6"/>
<path d="M454 282.5C445.5 285 419 291 402 297.5S368.5 311 352.5 319S322 335.5 306.5 344S267 364 259.5 368M396.5 281C388 285 363 295.5 347 303.5S307.5 325.5 299.5 330M433 241C426 243 405.5 249.5 392 254.5S364 264 351 270.5S324.5 284.5 312.5 293S289 310.5 278 320S252 344.5 247 349.5M422 222.5C415 225 393.5 232 380 237S354.5 245.5 341.5 251S315 263.5 302.5 271.5S279 289 268 298.5S242 324.5 237 329.5M354.5 279C348 282.5 326.5 291.5 314 299S290.5 315 279.5 323.5S252.5 346 247 350.5M446.5 276C440 278 420 284 406.5 288.5S378.5 296.5 365.5 301.5S339 313 326 319.5S301 331.5 288 338S257 355.5 250.5 359M233 389.5C239.5 391.5 259 401.5 272.5 403S300.5 403 314 399.5S346.5 387 353 384.5M208 364C212 369 222 387.5 232 394.5S256.5 404 269.5 405.5S296.5 405.5 309.5 403S337.5 397.5 349 391S375 368.5 380 364M370.5 381C365.5 385 351 398 340 405S318 417.5 306 422.5S281 432.5 268 436.5S241.5 442 229 446.5S198 459.5 191.5 462M364 398.5C359 402 343 413 332 419S309.5 431 297.5 436S273 445 261 449S236 456.5 224 461.5S195 475.5 189 478M340.5 442.5C332.5 444 308.5 446.5 292.5 449.5S260.5 456 245 461S211.5 470 200 480.5S181 507.5 177.5 522.5S176 555.5 177.5 572S183.5 604.5 189 620.5S201 652.5 209 667S232 700 236.5 706.5M298 471C291.5 473.5 270.5 477.5 259.5 484S235 506 230.5 510.5M261.5 486C256.5 490 239.5 501 233 511.5S224 535 222.5 548S221.5 574 223 587S228.5 614 233 627.5S246 660 248.5 666.5M180.5 524.5C180.5 532.5 178.5 557.5 180.5 574S187.5 606 192.5 621.5S204 652.5 211.5 667S233 700 237 706.5M252.5 669.5C254 672 259 679.5 262.5 684S269 693.5 273.5 697.5S286 705 288.5 706.5M199.5 447.5C196.5 455 188.5 477 181.5 491.5S162.5 528 158.5 535M270.5 211C266.5 218 252 239 245.5 253.5S236.5 284.5 232 300S223 330.5 219 346.5S211 378 207.5 394.5S201.5 427.5 197.5 443.5S190 475 184 490.5S168.5 520.5 164 536S158 568.5 157 585S155.5 618 158.5 633.5S167.5 665 175 679S200 711.5 205 718M216 348.5C214 356.5 208.5 380.5 205.5 396.5S200.5 429 196.5 444.5S186.5 477 180.5 492S165.5 521.5 161 537S153.5 577 152 585M170 454.5C167 463 158 487.5 151 504S136 536.5 129.5 553S116.5 586 112 602.5S104.5 643.5 103 652M197 443.5C194.5 451 188 474.5 182.5 490S167.5 520.5 163.5 536.5S157.5 568.5 157 584.5S157 618 161 633.5S176.5 670 179.5 677M230 300C228 308 221 331.5 217.5 347.5S210 380 206.5 396.5S200 430 195.5 445.5S186 476.5 180 491.5S164 521.5 159 537.5S152 570.5 150.5 587S148 620.5 151 636.5S159 668 166.5 682.5S190.5 717 195.5 724M158 536.5C157 545 152 570.5 151 587.5S150 621 153 637S166 676 169 684M242 203C238 210.5 225.5 233.5 220 250S213.5 283.5 210.5 300.5S204.5 334 201 350.5S195 385 191 401.5S181 434 175.5 450.5S163 483 156.5 499S142 531 136.5 547.5S126.5 580.5 123.5 597.5S116.5 633 118 649.5S123.5 684 130.5 699S156 733 161.5 740M174 637C176 642 182 656 187 665S202 686.5 205 690.5" stroke="#5a5f63" stroke-width="0.6" opacity="0.6"/>
<path d="M455 282.5C446.5 285 420.5 291.5 404 298S362.5 316 354 319.5M446 257.5C437.5 260 410.5 267.5 393.5 274S359.5 290 343.5 299S306 323.5 298.5 328.5M386.5 258.5C378.5 262 353 272 336.5 280.5S304.5 299 289 309.5S252 338.5 245 344M404.5 282.5C398 285 378 292.5 365 298S339 310.5 326 317S293.5 334.5 287.5 338M208 364C212 369 222 386.5 232 393.5S255.5 403.5 268.5 405.5S295.5 406 308.5 404S341.5 394.5 348 392.5M208.5 359.5C213 365 223 384 234 391.5S260 402 273.5 403.5S301.5 401.5 314 398.5S339.5 391 350 384S375 359.5 380 354.5M367.5 392C362.5 395 348 405.5 337 411.5S314 422.5 302.5 427.5S278.5 435.5 266.5 439S240.5 444.5 228 448S198.5 460 192.5 462M364 399.5C358.5 403 343 413 332.5 419S310.5 430 299 434.5S274.5 443.5 262 447.5S236.5 454 224.5 458.5S195 471.5 189.5 474M211 490.5C208 497.5 196.5 518 194 532.5S193.5 562.5 196 578S206 616.5 207.5 624M224.5 589C226 595.5 230 615 234 628S246.5 661 249 667.5M255 477C249 480.5 228.5 489.5 219.5 499.5S206 524.5 203.5 538S202.5 567 203.5 581.5S210 617 211 624M340 449C332.5 450.5 310 452.5 295 456S265 462.5 251 469S220.5 481.5 211.5 492.5S198 520 196 535S195.5 565.5 197.5 581S203.5 611 208 625.5S218 654.5 225 667.5S245 697.5 249 703.5M127 645.5C129.5 653.5 134.5 679.5 142.5 694.5S169.5 727.5 175 734M162.5 532C162 540 158.5 565 159 581.5S163.5 623 164.5 631.5M105.5 644.5C106 650.5 105.5 669 109 681S120 705 126.5 716S146.5 741.5 150.5 746.5" stroke="#5a5f63" stroke-width="0.8" opacity="0.6"/>
<path d="M344.5 300C337 304.5 313 317.5 298 327S261 352 253.5 357M446.5 256C437.5 259 411 266 394 272.5S352 291.5 343.5 295M435.5 243C428.5 245 407 251 393 255.5S364 264.5 350.5 270.5S322.5 283.5 310 291.5S286.5 308 275.5 317S251 341.5 246 346.5M354 278C347.5 281 327 290.5 314.5 297.5S284.5 317.5 278.5 321M205.5 366.5C210 371.5 222.5 390 233.5 397S258.5 406 271.5 407.5S298 407.5 310.5 404.5S337 396.5 347.5 389S370.5 366.5 375 361.5M207 540.5C207 547.5 205.5 569 207 583.5S211 611.5 215 625.5S226.5 660 229 667" stroke="#6a6f73" stroke-width="0.6" opacity="0.4"/>
<path d="M451.5 277C443.5 280 418.5 287 402 293S368 306 352 313.5S320.5 329.5 304.5 338S264 359 256 363M387 257C378.5 261 351.5 272.5 335 281S296 304.5 288 309M340 251C333.5 255 313.5 265 301.5 273S278 289.5 267.5 299.5S243 327 238 332.5M231 395.5C237.5 398 256.5 407 270 408.5S305 405.5 312 405M214.5 353C218.5 358.5 228 378.5 238.5 386.5S264.5 398 278 399S307 398 320 394.5S346.5 384 357 376S379.5 350.5 384 345M253 631.5C255 637.5 258.5 656.5 263.5 667S281.5 692 285 697M218 546C218 552.5 217.5 572.5 219.5 586S225 613.5 228.5 627S235.5 654.5 241.5 666.5S262 695 266 700.5M236 513C234.5 519.5 228 537.5 227 550.5S230 584.5 230.5 591M251.5 471C245 474.5 222.5 482.5 213.5 493.5S199 521.5 197 536S197 566 199 580.5S205 610.5 209.5 625S223 660 225.5 667M259 671C260.5 673.5 265.5 680 269 684.5S276 693.5 280.5 697S293 704 295.5 705.5M173 453.5C169.5 461 158 484.5 150.5 501S135 533.5 128.5 550S115.5 584 112 601S105.5 636.5 106.5 654S111.5 688.5 118.5 704S144 738.5 149 745.5M270 212.5C266.5 219.5 253 239.5 247 254.5S239.5 286 235 302S226.5 333 222 348S214 378 210 393.5S203 425 199.5 441S192.5 472.5 187.5 487.5S172 525.5 169 533M205 397.5C203.5 405 199 428 194 444S183 475.5 177 491S161.5 520.5 157.5 536.5S152.5 570 151.5 586.5S150 620.5 152.5 637S160.5 669.5 167.5 684S190.5 717.5 195 724.5M265.5 210.5C261.5 217.5 247 238.5 241 253.5S232.5 285 228 300.5S218.5 331 214 347S206.5 379.5 202.5 396S196.5 428.5 192 444.5S182.5 477 177 493S161.5 524.5 156.5 540.5S147.5 581 146 589M211.5 393C210.5 401 208 426.5 205 442.5S198 475 192.5 490S177 518 172.5 533S166.5 565 166.5 581S167.5 613 171.5 628S188 663.5 191 671M121.5 646.5C123.5 655.5 127.5 684 134 700S158 735.5 163 742.5M175 546.5C173.5 551.5 170 567.5 168.5 578S164 600 164 610S165.5 630 168 639.5S173.5 659 178 668S189 685 196 692.5S215 711 218.5 714.5M178 550C177 555 174.5 570.5 173 580S169.5 599.5 168.5 609.5S166.5 628.5 167.5 638S173.5 661 174.5 665.5" stroke="#6a6f73" stroke-width="0.6" opacity="0.6"/>
<path d="M436 248.5C429.5 250.5 409 255.5 395.5 260.5S367 270.5 353.5 277S327 291 314.5 298.5S290.5 315 279.5 324S252.5 347 247 351.5M448.5 274.5C441.5 277 421 283.5 407 288.5S379.5 298.5 366.5 305S342 320 329.5 327.5S305.5 343 293.5 350.5S263.5 368.5 258 372.5M404 285C398 288 380 296 367.5 302.5S336 320.5 330 324M394 262.5C387.5 265.5 369 274 356.5 281S330.5 295.5 318.5 303.5S295 320 283 329S255 353 249.5 358M436 254C429.5 256 409.5 261.5 396.5 266.5S370 277.5 357 283.5S331 296 318.5 303S293.5 317.5 281.5 325.5S252.5 347.5 246.5 352M207.5 366C211.5 371 222 388 232.5 394.5S256 403.5 269.5 405S297 404.5 310.5 402S337.5 395 349 388S375 364.5 380.5 359.5M205.5 364C209.5 369 219 387.5 229.5 395S255.5 406 269 408S298.5 408 312 405.5S339 398.5 350 391.5S374 367.5 379 362.5M206.5 365C210.5 370.5 221 389 232 396S258.5 406.5 272 408S299 406.5 311.5 403.5S336.5 396.5 347.5 389.5S371.5 365.5 376 361" stroke="#6a6f73" stroke-width="0.8" opacity="0.4"/>
<path d="M230.5 398C237 400 255.5 408.5 268.5 410S301.5 408 308 407.5M208.5 359.5C212.5 365 222 385 233 393S259 403.5 272.5 405S300.5 404.5 314 401.5S341 394.5 352 387S375 362.5 379.5 357.5M215 351C218.5 357 227.5 377 238 384.5S264 396 277.5 397.5S306 397 319.5 393.5S346.5 384 357.5 376S380.5 351.5 385 346.5M215.5 353.5C220 359 230 378.5 240.5 385.5S265.5 397 278.5 398S305.5 396 318.5 392S345 382.5 356 374.5S379.5 349.5 384.5 344.5M226 551C226.5 557.5 226.5 577 228.5 590S234.5 616 238.5 629S250 661 252.5 667.5M252 598.5C253.5 604.5 259 622.5 262.5 634S268.5 658 274 668S291 691 294.5 696M271.5 501C268.5 506 257.5 519 254.5 529.5S252.5 554.5 253.5 566S256.5 588.5 259 600.5S264 624 267 635.5S274.5 663 276 668.5M247 468C241 471.5 219 480.5 210 491.5S196 518.5 193 533.5S192.5 564 194 579S198.5 608.5 203 622.5S217.5 657.5 220.5 664.5M341.5 456C334 457.5 312.5 461 298.5 464.5S268 470.5 255.5 477.5S229.5 493 222.5 504.5S213.5 531.5 212.5 545.5S213.5 575 215.5 588.5S221 615 224.5 628S231.5 655 237.5 667S257 694.5 261 699.5M214 625.5C216.5 632.5 223 653 230 666S250.5 696 255 702M216 247.5C214 256 208.5 282 205.5 299S199 332.5 196 349.5S190.5 384.5 186.5 401.5S177 436.5 171.5 453.5S158.5 485.5 152 501.5S138.5 534 132.5 550.5S119 584 115.5 600.5S111 642.5 110 651M167.5 532.5C167 540.5 162.5 564 162.5 580S167 621 168 629M159 542C156.5 547.5 148.5 563.5 143.5 574.5S133 596 130 607.5S124.5 630.5 124.5 642.5S126.5 666.5 130.5 678S140.5 699.5 147.5 709.5S167 733 170.5 737.5M123.5 676.5C126.5 682.5 134 699.5 141.5 710.5S162 736 166 741M163 542C160 547.5 151.5 562.5 147 573.5S137 595 135 606.5S132 630.5 133 642.5S136.5 666 141 677S153.5 697.5 161 707S179.5 728 183.5 732.5M167.5 545.5C165.5 551 160 567 157.5 577.5S152.5 599.5 151.5 610S150.5 631.5 151.5 641.5S155 662 159 671.5S169 690.5 176 699S196 719 200 722.5M178.5 544.5C176.5 549.5 170 564.5 167 574.5S160.5 595.5 160.5 606.5S161.5 628.5 164.5 639.5S172.5 662 178 671.5S191 689 197.5 697S215 714.5 218.5 718" stroke="#7b8084" stroke-width="0.8" opacity="0.6"/>
<path d="M319.5 391.5C326 388.5 347 381.5 358 373.5S382 347 387 341.5M339.5 473.5C333.5 475.5 316.5 481.5 304.5 485.5S278 490.5 268.5 497S252.5 514 249 525S245.5 549.5 246 561.5S249 586 251 598.5S257.5 623 261 634.5S266 658.5 271 668.5S287.5 691.5 291 696M340.5 443C332.5 444.5 308.5 447 293 450.5S260.5 457.5 246 463.5S213.5 474 203 484.5S186.5 511.5 183.5 526.5S183 560 185 576S191 607 196 622S206 653 213.5 666.5S236 699 240.5 705.5M238.5 516.5C237 522.5 232 540 231 552.5S230.5 578 232 590.5S236 616.5 239 629.5S245 655 251 667S270 693.5 273.5 698.5M191 488.5C187.5 495.5 173.5 515 169 529.5S164.5 561 165.5 577S172 618 173.5 626M266.5 209.5C262 216.5 247 236.5 240.5 252S232 284.5 228 300.5S219.5 332 216 348S209.5 380 206.5 396.5S200 429.5 195.5 445.5S186.5 477 180.5 492S165 521.5 160.5 537S154 569.5 153 585.5S152.5 619 155.5 634.5S165 665.5 172.5 680S197 714 202 720.5" stroke="#7b8084" stroke-width="0.6" opacity="0.4"/>
<path d="M236 383C242.5 385.5 262.5 396 276 398S304.5 397 318 393.5S349.5 379.5 355.5 376.5M267.5 408C274.5 407.5 295 407.5 308 405S341 395.5 347.5 393.5M361 404.5C355.5 408 340 419.5 328.5 426S305 438.5 293.5 444S269.5 454.5 257.5 459.5S234 468.5 222 473.5S192.5 487.5 186.5 490" stroke="#474c50" stroke-width="0.8" opacity="0.4"/>
<path d="M205 370C209.5 375 219.5 392.5 230 399.5S255 410.5 267.5 412S294 412 307 409.5S333.5 404 345 398S369 377 374 372.5M286.5 455.5C281 458 264 465 253 470S225 481.5 219 483.5M327 432C321 434.5 303.5 443 292 448S268.5 457.5 256.5 462.5S226 475 219.5 477.5M364.5 399C359 402.5 342 412.5 330.5 418.5S303 433 297.5 435.5M239.5 202C236 210.5 222 234 217 250.5S212 284.5 209.5 301.5S204.5 335 201 352S192.5 393.5 190.5 402M205 399C203.5 407 200.5 432.5 196 448.5S182 487 179.5 494.5M238 301C235.5 309 228.5 331.5 224.5 347.5S216.5 379.5 213 395.5S209 427 204.5 442.5S194.5 473.5 188.5 488.5S171.5 517 167.5 532.5S163 573.5 162 581.5M155.5 540.5C153.5 548.5 146.5 572.5 145 588.5S143 621.5 145.5 637.5S158.5 676.5 161 684.5M276 212.5C272 219.5 257.5 239.5 251 254S241 285.5 236.5 301S227 331 223 346.5S214.5 378 211 394S207.5 426 204 442S195.5 473.5 190 488.5S175 516.5 170.5 532S166 565.5 166 581.5S167 614 171 629S181.5 659.5 189.5 673S214 705 219 711.5" stroke="#474c50" stroke-width="0.6" opacity="0.6"/>
<path d="M209 357C213 362.5 222 382 233 390S260.5 401 274.5 402.5S309 398.5 315.5 398M161.5 542.5C159.5 548 152 565 148 576S140 597 138 608S135.5 632 136 643S139.5 665 143.5 675.5S153.5 695 160.5 704.5S180 726 184 730M169 545.5C167.5 551 161.5 567 158.5 577.5S152 598 150 608.5S147 630.5 148 641S151.5 662 156 671.5S167 691.5 173.5 700.5S193 721 196.5 725" stroke="#7b8084" stroke-width="0.8" opacity="0.4"/>
<path d="M216 353C220 358.5 230 378.5 240.5 386S265.5 396 278.5 397S306.5 395.5 319 392S344.5 382 355.5 374S380.5 349.5 385.5 344.5M300.5 469.5C294 471 272 473.5 259.5 479S232.5 492.5 225 503.5S214.5 529.5 213 543S214 571.5 216.5 585.5S224 614 228.5 628S241.5 662 244 668.5M340.5 449.5C333 451 311.5 454 296.5 457S265 462 250.5 467.5S219 478 209 488S193 514 190.5 529S189.5 561.5 192 577S199 609 204 624S214 654.5 221 668.5S241 700 245 706.5M338.5 461.5C332 463.5 312 469.5 299 474S272.5 480.5 261.5 487S240.5 502 234.5 512.5S226.5 537 225.5 550S225.5 576.5 227.5 589.5S233 616 236.5 628.5S243.5 654.5 249.5 666S269.5 692.5 273.5 698M339 444C331.5 445.5 309 449.5 293.5 453S262 459 247.5 464.5S216 476 205.5 486.5S187.5 513 184 527.5S182.5 558.5 184.5 574S191.5 606 196.5 621S207 652 215 666S238 699 242.5 705.5M291 448.5C283 451 259.5 456.5 244.5 462.5S212.5 473.5 201.5 484S184 510 180.5 525S178.5 558 180.5 574S186 606 190.5 621.5S206 658 209 665M205.5 487C202.5 494 190.5 514.5 188 529.5S186.5 561.5 188.5 577.5S194.5 608 199 623S209 651.5 216.5 665S239.5 696.5 244 702.5M294.5 453C286.5 455 263 459 248.5 464.5S216 475 205.5 485.5S189 513 185.5 528S183.5 560 185 575.5S191 606.5 195.5 621.5S211 659 214 667M204 484.5C200.5 491.5 187 511 183.5 526.5S181.5 559.5 183 575S189 605.5 194 621S205 652 212.5 666.5S235 699 239.5 705.5M339.5 444C332 445.5 308.5 448 293 451.5S262 459.5 247.5 465S216 475.5 205.5 486S188.5 513 185.5 528S184 560.5 185.5 576S191 606.5 195.5 621.5S206 652.5 214 666.5S237.5 698.5 242 704.5M140 678C143 683 150 698.5 156 707.5S174.5 728.5 178 732.5" stroke="#7b8084" stroke-width="0.8" opacity="0.8"/>
<path d="M318.5 394C325 391.5 345 385 356 377.5S380 352.5 385 347.5M341 451C334 452.5 312 456.5 297.5 459.5S266.5 465 252.5 471S222.5 483.5 214 494.5S201.5 522.5 199.5 537S200 567 202.5 582S211.5 619.5 213.5 626.5M340 444.5C332.5 445.5 308.5 448.5 293 451.5S262 458 247 464S214.5 476 204.5 487S190 513.5 187 528.5S186 560.5 187.5 576.5S193.5 608.5 198 623S208 652.5 215 666S236.5 698 240.5 704M203 538C203 545.5 203 568.5 205.5 583S215.5 619.5 217.5 627M192.5 578C194 585.5 197.5 608.5 202 623S216.5 658.5 219 665.5" stroke="#8b9094" stroke-width="0.6" opacity="0.6"/>
<path d="M370.5 388C365 392 348.5 404.5 337 411S306 424.5 300 427M318 450C312.5 452.5 296 459 285 463S257.5 473.5 252 475.5M354 422C348.5 425.5 331.5 436 320 442S296.5 453 285 458.5S261.5 469.5 250 475S227.5 486.5 216.5 492.5S189 509 183.5 512M240 252.5C238 260.5 232 284.5 228.5 300.5S222 333 218.5 349.5S210.5 382.5 206.5 398S200 429.5 195.5 445S185.5 475.5 179 490.5S163.5 520 159 536S153 568 152.5 584.5S153.5 618.5 157 635S171 674.5 174 682M257 255C255 262.5 248 284.5 243.5 300S234 331 229.5 346.5S220 377.5 217 393S214 425 211 440.5S204 471.5 198.5 486.5S183 513 179 528.5S174.5 560.5 175.5 576.5S179.5 609 184 624S201 659.5 204.5 666.5M209.5 399C208 407 204.5 431 200 446.5S188.5 476.5 181.5 491S163.5 518.5 158.5 534S152.5 574.5 151 583M615 297.5C616.5 304.5 621 325.5 623.5 339S626 367 628.5 381S635.5 414 637 421M619.5 294C620.5 301 623.5 322.5 625 337.5S626 367 628.5 381.5S637 417.5 638.5 424.5" stroke="#474c50" stroke-width="0.6" opacity="0.4"/>
<path d="M246.5 522.5C245.5 529 242 547.5 241.5 559.5S242 584 244 595.5S250 619.5 253 631.5S262 661.5 263.5 668M205 659C206.5 662.5 212 674 216 681.5S225.5 696 231 701S248.5 711.5 252 713.5" stroke="#33373b" stroke-width="1" opacity="0.8"/>
<path d="M338.5 441.5C330.5 443.5 307 447 292 451S261.5 459 247 465S215 476 204.5 486.5S187.5 512 183.5 526.5S181.5 558.5 182.5 574S186.5 605 191 620S202 650 210.5 664S235 698.5 239.5 705" stroke="#7b8084" stroke-width="1.2" opacity="0.4"/>
<path d="M255 477C249.5 481 230 490.5 222 501S210 533.5 207.5 540M209.5 543C209.5 550 209 572 210.5 586S215 613 218.5 626.5S228.5 659.5 230.5 666M339.5 468C333.5 469.5 316 474.5 303 477.5S274.5 482.5 263.5 488.5S243 503.5 237 514S229 538.5 228.5 551.5S231 579 233.5 592S238.5 618 242 630.5S248 657 253.5 668.5S271 694 274.5 699" stroke="#4a4f53" stroke-width="0.4" opacity="0.6"/>
<path d="M338 470.5C332.5 473 315 479.5 303.5 483.5S277 488 267.5 494.5S249 511 244.5 521.5S240.5 546.5 240 558.5S241.5 583 243.5 595S250 620 253.5 632S259 656.5 264.5 667.5S282.5 692 286 697M218.5 626C221 632.5 227 654 234 667S256 696.5 260.5 702.5" stroke="#8b9094" stroke-width="1.2" opacity="0.8"/>
<path d="M302 480C296 481.5 275.5 484.5 265 490.5S243 511.5 238.5 516" stroke="#3d4246" stroke-width="1.2" opacity="0.8"/>
<path d="M338.5 472C333 474 315 480.5 303.5 485S277.5 490.5 268 497S251 513.5 247 524S242 548 242 560S244 584.5 246 596.5S251 620 254 632S259 656 264.5 667S283 691.5 287 696.5M340 450C332.5 451 309.5 455 294.5 458.5S264.5 464.5 251 470S222 483.5 212.5 494.5S199 520.5 196.5 535S196.5 565.5 198.5 580.5S204.5 610.5 209 624.5S218.5 652.5 226 665.5S247.5 696.5 252 702.5" stroke="#6a6f73" stroke-width="0.6" opacity="0.8"/>
<path d="M266 493C262 497.5 246.5 509 241.5 519S236 543 235.5 555.5S237 581.5 239 594S244 619 247.5 631S257 661.5 259 667.5M182.5 527C182.5 535 180.5 559.5 182 575S187.5 606 192 621S203.5 652.5 211 666.5S232.5 698.5 237 705M250.5 471C244.5 474.5 222.5 483.5 213.5 494S199.5 520 196.5 534.5S195 565.5 197 580.5S206 617 208 624M339 445C331.5 446.5 308 450 293 453S263.5 460 249 465.5S216 476 205 486S187.5 511.5 184 526.5S181.5 558.5 183.5 574.5S189.5 606 195 621S206 651.5 214 665.5S237.5 699.5 242 706" stroke="#8b9094" stroke-width="1" opacity="0.6"/>
<path d="M340 473.5C334 475.5 316.5 480.5 304.5 484S278.5 489.5 268.5 496S250 512.5 245.5 523S241.5 547 242 559S244.5 584.5 246.5 597S252 621.5 255.5 633S260 658 265 668.5S282.5 692 286 696.5M222 627C225 633.5 231 654 238 666.5S259.5 696 263.5 701.5" stroke="#9da2a6" stroke-width="1.2" opacity="0.8"/>
<path d="M339 444.5C331.5 446 309 449.5 294 453S263.5 461 249 466.5S217.5 476.5 207 487S191 513 188 528S186 559.5 188 575.5S196 607 201.5 622S213.5 653.5 221.5 667.5S244.5 698.5 249 705" stroke="#8b9094" stroke-width="1.2" opacity="0.4"/>
<path d="M206.5 582.5C208.5 589.5 213 611 217.5 625S228 654 235 667S256 696.5 260 702.5M210 623C212.5 630 220 652.5 227.5 665.5S250.5 696.5 255.5 703M338 469.5C332 471.5 314 478 302.5 482S277.5 487.5 268 493.5S248.5 509.5 243.5 520S238.5 543.5 238 556S238 581.5 240.5 594S248 619 252 631S259.5 656 265 667S284 692.5 287.5 697.5M337 465C331 467 311.5 474.5 299.5 479S274 485 264 491.5S245 507.5 239.5 518S233 541.5 232.5 554S232.5 580 234 592.5S238.5 617 242 629S248 653.5 254 664.5S274.5 691.5 278.5 696.5" stroke="#6a6f73" stroke-width="1" opacity="0.4"/>
<path d="M339 442C331 443.5 308 447.5 292.5 451S261 458 246 463.5S214.5 475 204.5 485.5S188 511.5 184.5 526.5S182 558 183.5 574S190 606.5 195.5 621.5S206.5 652.5 214 666S237 699 241.5 705.5M338.5 457C331.5 459 309.5 464.5 296 469S269.5 476.5 258 483S236 497.5 229 508.5S220 533.5 218 547S219 580.5 219 587.5M271.5 500C268 504 255.5 515.5 251 525.5S245 547.5 244.5 559.5S245.5 589 246 595M340 441C332 442.5 306.5 445.5 291 449S259.5 457.5 245.5 463.5S215.5 475.5 205.5 486.5S189.5 514 187 529S187 561 189 576S194.5 607.5 199 622S210.5 651.5 218.5 665S242.5 697 247.5 703.5M295.5 461C288.5 463 266 467.5 253 474S226.5 488.5 218 499.5S205.5 525.5 203 539.5S202.5 568.5 204 583S211 618.5 212.5 625.5" stroke="#5a5f63" stroke-width="1.2" opacity="0.8"/>
<path d="M338.5 459.5C332 461.5 312 466 299 470S271.5 476.5 259.5 482.5S235.5 497 228.5 507.5S219.5 533 218 546S217 572.5 219 586S225 613.5 229 627S236 654 242.5 666S264 694 268.5 699.5M228 551.5C228.5 558 229 577.5 231 590.5S235 616.5 238.5 629.5S248.5 661 251 667.5M261 633C263 639 266.5 657.5 272 668S289.5 691 293 695.5M340 447C332.5 448.5 309 452 294 455S263.5 460.5 249 466.5S217.5 478.5 207.5 489S191 515.5 188 530S187 561 189 576.5S194.5 608 199 623.5S210 653.5 217.5 667S238.5 698 243 704.5M293 455.5C285.5 457.5 263 462 249.5 468.5S220 482 211 493S197 520 194.5 534.5S194 565.5 196 580.5S201.5 609 206 623S219.5 658 222.5 665" stroke="#7b8084" stroke-width="1.2" opacity="0.6"/>
<path d="M253.5 565C254 571 255.5 588.5 257.5 600S262.5 623 265.5 634S273.5 661.5 275 667" stroke="#6a6f73" stroke-width="0.4" opacity="0.4"/>
<path d="M226.5 627C229 633.5 235 655 242 667.5S262.5 695.5 267 701" stroke="#9da2a6" stroke-width="0.6" opacity="0.8"/>
<path d="M304 479.5C297.5 481 276.5 483.5 265.5 489.5S244.5 505 239 515.5S232.5 540.5 232 553.5S236.5 587 237.5 593.5M336.5 477C331.5 479 315.5 486.5 305 490.5S281 494 272 500S255 515.5 250.5 525.5S246 548.5 245 560S244 583 245.5 595S251.5 619.5 255 631.5S261.5 655.5 267 667S286 693 290 698.5M339.5 454.5C332.5 456 310.5 460 296.5 463S267.5 468.5 254.5 474.5S227.5 488.5 219 499.5S206.5 526 204 540S203.5 569 205.5 583S211.5 611.5 215.5 625.5S224 654.5 230.5 667.5S251.5 697 256 703" stroke="#8b9094" stroke-width="0.8" opacity="0.6"/>
<path d="M338.5 470C333 472 315.5 478.5 303.5 482.5S276.5 486 266.5 492.5S247.5 510 242.5 520.5S237 544.5 237 557S238.5 582 240.5 594.5S246.5 619 249.5 631.5S255 657 260.5 668S279 692.5 282.5 697.5M340.5 444C332.5 445.5 308 449.5 292.5 453S262 460.5 248.5 466.5S219 480 209.5 491S195 518 192.5 532.5S192 563.5 194 578.5S199 608 203 623S213 652.5 220 665.5S242 696 246.5 702M215 495C212.5 501.5 202.5 521 200 535.5S198.5 566 200.5 581S205.5 609.5 210 624S224 659.5 227 666.5" stroke="#9da2a6" stroke-width="1.2" opacity="0.4"/>
<path d="M339 454.5C331.5 456 309 461.5 295 465.5S266.5 472 254.5 478S230.5 491 223 501.5S210.5 527 208 541S206 569 207 583S211 611 214.5 624.5S221 652.5 228 665S250.5 694.5 255 700.5M338 462C331.5 464 310.5 470.5 298 475S272.5 482.5 262.5 489S243 505 237.5 516S231.5 541 230.5 553.5S231.5 580 233 592.5S237 616.5 240.5 628.5S247 653 253.5 664.5S274.5 691.5 279 697M302 481C296 482.5 274.5 486 264.5 492.5S247 508.5 242.5 519.5S237.5 545 237 557.5S239 583.5 241 595.5S246.5 620 249.5 632S255 656.5 260.5 667.5S279.5 691 283.5 696M341 442.5C333 444 308.5 446.5 292.5 450S253 460 245 462M151 542C148 547 139 563.5 133.5 574S122.5 595.5 118.5 606.5S109.5 630.5 108.5 643S109.5 668.5 113 680.5S124 703.5 131 714S152.5 739 156.5 744.5M154 541.5C151.5 547 143.5 564 139 575.5S130.5 599 128 610.5S123.5 633.5 123 645S123.5 668 126.5 679S134 700.5 140 710.5S159.5 732.5 163.5 737" stroke="#4a4f53" stroke-width="0.6" opacity="0.8"/>
<path d="M242 518.5C240.5 524.5 236 543 235.5 555.5S236.5 581 238.5 594S247.5 625.5 249 632M340.5 457.5C333.5 459 313 463.5 299.5 467S269.5 472.5 257 479S233 494.5 226.5 506S218.5 532 218 546S221 575.5 223.5 589.5S230.5 617 234.5 630S242 656.5 248 668S267.5 694 271.5 699.5M204 444C201.5 451.5 194.5 474 188.5 489S172 517 167.5 532.5S161 565.5 161 581.5S165 621.5 166 630M142.5 639.5C144 645 147 662 152 672.5S167.5 697 170.5 702" stroke="#3d4246" stroke-width="1" opacity="0.8"/>
<path d="M223.5 550C224 556.5 225.5 576.5 227.5 589.5S232 616 236 628.5S242.5 655 248.5 666.5S268.5 693.5 272.5 699M340 443C332 444.5 308.5 446.5 293.5 450S262.5 457.5 247 463S213.5 472.5 202 482.5S182.5 508 178.5 523S176.5 556 178 572S185 604 190.5 620S202.5 652 210.5 666.5S232.5 701 237 708M263.5 489C259 493 241.5 503 235.5 513.5S227.5 537.5 226 550S227.5 584 227.5 590.5M337.5 477C332 479.5 316 487 305.5 491.5S281 496 273 503S259 521.5 255.5 532S253 554.5 253.5 566S255.5 588.5 257.5 600S262.5 622.5 265.5 634S269.5 657.5 274.5 667.5S293 690 296.5 694.5M176.5 545.5C175 551 170.5 567 168 577.5S163.5 598.5 163 609S162 630 164.5 640.5S171 660.5 175.5 670S186.5 688 193 696S211 714 215 718" stroke="#5a5f63" stroke-width="0.6" opacity="0.8"/>
<path d="M339 458.5C332.5 460.5 312.5 465.5 299 469S271 475 258.5 480.5S232.5 493 225 503.5S214 529.5 212 543S212 571 214 585S219.5 612.5 224 626S232 654.5 239 667S260 696 264 701.5M235 592C237 598.5 242 618.5 246.5 631.5S254.5 657.5 260.5 668.5S278 694.5 282 699.5M340 458.5C333.5 460 312.5 465 298.5 468.5S269.5 475 257.5 481S233.5 495 226.5 505.5S216.5 530.5 215.5 544.5S216.5 574 218.5 588S224 615 228 628.5S235 656 241.5 668S261.5 694.5 265.5 699.5" stroke="#9da2a6" stroke-width="1" opacity="0.4"/>
<path d="M338 461.5C331.5 463 311.5 468.5 298.5 472S271.5 479 260 485S236.5 498 229.5 508S219.5 532 217.5 545S216 572.5 217 585.5S220 612 223.5 625.5S232 653 239 666S259 695 263.5 701M258.5 631.5C260.5 637.5 265 656.5 270.5 667.5S289 693 293 698M339.5 463C333 464.5 314 470 301 473.5S273.5 478 261.5 484S237.5 498.5 231 509S221.5 533.5 220 547S221 575 223 588.5S229.5 615.5 233.5 628.5S240.5 655.5 246.5 667S266 694.5 270 700M203 623.5C206 630.5 213 652.5 220.5 666S241.5 698 246 704.5M246 667.5C247 670 249.5 677.5 252 682.5S257.5 693 261.5 697.5S272.5 707 274.5 709M172.5 546C171 551 166.5 567.5 164 578S158.5 598 158 608.5S157.5 630 159.5 640.5S164.5 660.5 169.5 670S180.5 688 187.5 696S208.5 715 212.5 718.5" stroke="#6a6f73" stroke-width="0.8" opacity="0.8"/>
<path d="M340.5 448.5C333 449.5 310 453.5 295 456.5S264 463 250 468.5S221.5 481.5 212.5 492S199 518.5 197 533.5S197.5 564.5 200 580S206.5 611 211 625.5S220 654 227 667S249.5 697.5 254 703.5M179.5 572.5C181 580.5 184 606 189 621.5S205.5 658 208.5 665M210 491C207 498 196 518 194 533S194.5 565 197 580.5S206.5 617.5 208 625M339 445C331 446.5 308.5 449 293.5 452S262.5 459.5 248 465S215 475 204.5 485.5S187 511 183.5 526S182 558 184 573.5S191 605.5 196.5 621S208 653 215.5 667.5S239 699.5 243.5 706M340.5 452.5C333.5 454.5 311.5 459 297 462.5S266 468 253 474S226.5 488 218.5 499S206.5 526.5 205 541S206 571 208 585.5S213 613 216.5 626.5S223.5 653.5 230 666S251.5 695.5 256 701.5" stroke="#7b8084" stroke-width="0.6" opacity="0.8"/>
<path d="M338 472.5C332.5 475 316 482 304.5 486S278.5 490 269.5 496S252 512.5 248 523.5S243.5 548 243.5 560S245.5 584.5 248.5 596.5S255 620.5 259 632.5S265 657 270.5 667.5S288 692 291.5 697M229 663C231 666.5 236 676.5 241 682.5S251 694.5 257 699.5S273.5 708.5 277 710.5M148 590C148 598 145 622 147.5 637.5S156.5 668.5 164.5 682.5S191 714.5 196.5 720.5M162.5 610.5C163 615.5 162 631 164 641S170.5 664.5 172 669.5" stroke="#3d4246" stroke-width="0.6" opacity="0.8"/>
<path d="M337.5 478C332.5 480 317.5 487.5 307 491.5S282.5 495.5 273.5 501.5S257.5 518.5 253.5 528.5S251 551.5 251 563S252.5 587.5 255 599.5S261.5 622.5 265 634S270 658.5 275.5 669S292.5 692 296 696.5M210.5 625C213.5 631.5 220 653.5 227 666S248 696 252.5 702M267.5 673.5C269 675.5 272.5 681 275.5 685S281 693 284.5 696S294 703.5 296 705M275 213C271 220 256 240 249.5 254.5S241.5 286 237 301.5S229 332.5 225 348S216 378.5 212.5 394S208 425.5 204.5 441S196.5 472.5 191 487.5S175.5 515.5 172 531S168 563 168.5 579S171 612 175 627.5S186.5 658 194 672S217 705 222 711.5" stroke="#4a4f53" stroke-width="1" opacity="0.8"/>
<path d="M339.5 469.5C333 471.5 315 477.5 302.5 481.5S272 491 266 493M195.5 622C198 629.5 203.5 652.5 210 666.5S231.5 698 236 704" stroke="#4a4f53" stroke-width="0.4" opacity="0.8"/>
<path d="M227 551.5C228 558 229 578 231.5 591.5S238.5 618 242 631S249 657 255 668S275.5 693 279.5 697.5M190 532C190.5 539.5 190 563 192 578.5S198 609.5 202 624S216 658.5 218.5 665.5" stroke="#b0b5b9" stroke-width="0.6" opacity="0.6"/>
<path d="M213.5 584.5C215 592 219.5 613.5 223.5 627S235.5 660.5 238 667M339.5 451.5C332 453.5 310.5 458.5 296 462S266.5 469 253.5 475S227 488 218.5 498.5S207.5 525 205.5 539S206 568.5 208 582.5S214 611 218 625S227.5 654.5 234 667S255.5 695.5 259.5 701.5" stroke="#5a5f63" stroke-width="0.4" opacity="0.8"/>
<path d="M339.5 446C331.5 447.5 308.5 450.5 293.5 454S263.5 462.5 249.5 468.5S219.5 479.5 210 490S195 517 192 532S191.5 563 193 578S197.5 608 202 622.5S213.5 652.5 221 666S243 697.5 247.5 704M340 442C332 443 308.5 446.5 292.5 449.5S260 456.5 245.5 462S213 473.5 202.5 484.5S185.5 511 182 526S181 558.5 183 574.5S189.5 607 194.5 622S204.5 653 212 666.5S234.5 699 238.5 705.5M214 494.5C211.5 501.5 201 520.5 198 535S197 566 198.5 580.5S204 610 208.5 624S218.5 653.5 225.5 666.5S247 697 251 703M182 490.5C178.5 498 166 520.5 161.5 536.5S155.5 568.5 154.5 584.5S154 617.5 157.5 633.5S167 665.5 175 680S200 713.5 205 720.5M179.5 548.5C178.5 553.5 175 568 174 577.5S170.5 597.5 171 607.5S173 628.5 175.5 638S182.5 657 187.5 665.5S198.5 683 205.5 691S224.5 709 228 713" stroke="#5a5f63" stroke-width="0.8" opacity="0.8"/>
<path d="M260 633C261.5 638.5 265 657 270.5 667.5S289 690.5 293 695" stroke="#b0b5b9" stroke-width="1" opacity="0.6"/>
<path d="M338.5 452.5C331.5 454 310 459 296 462S268 467.5 254.5 473S225 484.5 215.5 494.5S201 519.5 198 533.5S196.5 563.5 199 578.5S206 609.5 211 624S222 654 229.5 667.5S251.5 698 256 704.5M180.5 526C180.5 534 179.5 558 181.5 574S187 606.5 191.5 621.5S201 652 208.5 666S231.5 699 236 705.5M339.5 442C331.5 443.5 308 447 292 450S261.5 456.5 246.5 462S213 472 202 482.5S184 510 180 525.5S178 557.5 180 573.5S186 606 191 621S201.5 651 209.5 665.5S232.5 699.5 237 706.5M340 445.5C332 447 308.5 451 293 454.5S263 461.5 249 467.5S218.5 478.5 208.5 489S193 516 190 530.5S188.5 561.5 190.5 577S196.5 608.5 201 623.5S211.5 652 219 665.5S241.5 697 246 703.5" stroke="#9da2a6" stroke-width="0.6" opacity="0.6"/>
<path d="M338 461C331.5 463 313 468.5 300 472.5S272.5 478.5 261 484.5S238 499 230.5 509S220 533 218.5 546S218.5 573.5 220.5 587S225.5 615 229.5 628S237.5 655 244 667S264 695 268 700.5M258 601.5C259.5 607.5 264.5 625.5 267.5 636.5S275 664 276.5 669.5" stroke="#6a6f73" stroke-width="0.4" opacity="0.8"/>
<path d="M340.5 472.5C334.5 474.5 317.5 480.5 305.5 484.5S278 488.5 268 495S249.5 512 245 523S242.5 547.5 243 560S246.5 586.5 249.5 598.5S256 622.5 259 634S263.5 658.5 268.5 668.5S284.5 691 287.5 696M338 468.5C332 470 315.5 475.5 303 479S275 482.5 263.5 488S240.5 501.5 233.5 511.5S223 534 221 547S221 574 223 587S229.5 614 233.5 627.5S240.5 656.5 246.5 669S265.5 696 269.5 701.5M339.5 455.5C332.5 457 311.5 461 297.5 464.5S268 471 255 476.5S228 488 219.5 498.5S207 524.5 205 538.5S204.5 567.5 206 582S210.5 611.5 214.5 625.5S223 654 229.5 666.5S250 696.5 254.5 702.5M198 622C201 629.5 208 651.5 216 665S239 698 243.5 704.5M296 463C289 465.5 267.5 470 254.5 476S228 489 219.5 499S206 523 203 536.5S202 572.5 202 580" stroke="#6a6f73" stroke-width="1.2" opacity="0.8"/>
<path d="M338 456.5C331.5 458 311 463.5 297.5 467S270 471.5 257.5 477S230.5 490.5 222 500.5S209 525 206.5 539S205.5 567.5 207.5 582.5S213.5 612 218.5 626S229 654.5 236 667.5S257 697 261 703M151 538.5C148 544.5 138 561.5 133.5 573S124 597 121.5 609S119 633 119.5 644.5S122.5 669 126.5 680S137.5 701.5 145 711S166 732 170 736" stroke="#3d4246" stroke-width="1" opacity="0.4"/>
<path d="M341.5 450C334 451.5 310.5 454 295 457.5S263.5 464.5 249.5 470.5S221.5 482.5 213 493S198.5 520.5 196.5 535.5S198.5 573 198.5 580.5" stroke="#8b9094" stroke-width="1" opacity="0.4"/>
<path d="M340 440.5C331.5 442 307 445.5 291.5 449S259.5 456.5 245 462.5S214 473.5 204 484.5S187.5 512 184.5 527S183 558.5 185 574.5S190.5 606 195.5 621S206.5 651.5 214.5 665.5S238 698 243 704.5M236.5 555C237 561.5 236 580.5 238 593S243.5 618 247.5 630.5S258.5 661 260.5 667M337.5 455.5C331 457.5 311 463.5 298 467.5S270 474 258 480.5S235 495 227.5 505.5S216 530.5 214 543.5S214 571 216 585S222.5 613.5 227 626.5S237.5 653.5 244.5 666S265.5 694.5 269.5 700M203 581C204.5 588 208 609.5 212 624S227 660 230 667" stroke="#5a5f63" stroke-width="1.2" opacity="0.4"/>
<path d="M338.5 465C332 467 313 472.5 300.5 476.5S273.5 483 263 489S242.5 503.5 237 514S229.5 538 228.5 550.5S228.5 577 230.5 590S235 616 239 629S246 655.5 252 667.5S272 693.5 276 699M127.5 642C128.5 647.5 128.5 664.5 132.5 675.5S143.5 698.5 150.5 708.5S171 731.5 175 736M169.5 544C168 549.5 162 566 160 577S155.5 599.5 155.5 610.5S158.5 632.5 161 643S166.5 663.5 171 672S182.5 687.5 189 695S206.5 712.5 210.5 716.5" stroke="#5a5f63" stroke-width="1" opacity="0.8"/>
<path d="M339.5 456.5C332.5 458 312 462.5 298 466S269.5 471.5 257 477.5S229.5 490 221.5 500S209 525 207 539S206.5 568 208.5 582.5S215.5 612 220 626S228.5 654 235.5 667S256 697.5 260 703.5" stroke="#b0b5b9" stroke-width="0.4" opacity="0.4"/>
<path d="M340 450.5C332.5 452 309.5 455.5 295 459S264.5 466 251 472S223.5 485.5 215 496S203.5 523 201.5 537S200.5 567.5 202 582S207 611.5 210.5 625.5S218 653.5 224.5 666S245.5 695.5 249.5 701.5M338 476.5C332.5 478.5 316.5 485.5 305.5 489.5S281 494.5 272.5 501S255.5 518.5 252 528.5S249.5 551 249.5 562.5S249.5 586.5 251.5 598S257.5 621 261 632.5S265.5 656 271 667S289.5 691 293 696M339 455C332 457 309.5 462.5 295.5 466.5S267 472.5 255 478.5S231 492.5 223.5 503S212 529 209.5 542.5S207.5 569.5 208.5 583S211.5 610.5 215 624S222.5 651 229 664S250 694.5 254.5 701M338.5 442.5C330.5 444.5 306.5 448.5 291.5 453S261.5 461 247.5 467S219 480 210 490.5S194.5 517 191.5 531.5S189 563 190.5 577.5S196 606.5 200.5 621S210.5 650.5 218.5 664S243 696.5 248 703" stroke="#7b8084" stroke-width="0.4" opacity="0.6"/>
<path d="M337.5 462.5C331 464 312 469.5 299 473S272.5 478.5 261 484S237 497 229.5 507S218 531.5 216 544.5S215.5 577.5 215.5 584M339 478.5C333.5 481 317 488 306 492S281.5 495 273 501.5S257.5 519 254.5 529.5S252.5 554 253 566S255.5 589 257.5 600.5S264 624 267 635S270.5 659 275.5 669S292 691.5 295.5 696M340 448.5C332.5 450.5 309 455.5 294.5 459.5S264 466.5 251 472.5S225 485.5 217 496.5S205.5 523.5 203.5 538S203 568.5 205 583S211 612 215.5 625.5S224 653.5 231 666S252.5 695.5 257 701.5M263 486.5C258.5 491 240 501 234 511.5S226.5 536.5 226 550S230.5 584.5 231 591.5M341 442C333 443 308.5 445.5 292.5 449S260 455.5 245 461S212.5 471.5 202 482S184 510 181 525.5S179.5 558.5 181.5 574.5S188.5 607 193.5 622.5S204.5 652.5 212 666.5S234 699 238 705.5M197 580C198.5 587.5 202.5 610.5 207 625S221 660 223.5 667" stroke="#5a5f63" stroke-width="1.2" opacity="0.6"/>
<path d="M340 458.5C333.5 460.5 313.5 465.5 300 469S269.5 474.5 257.5 480.5S234 494.5 227 505.5S217 530.5 216 544S218 573.5 220.5 587.5S227 615 231 628.5S239 655.5 245 667.5S265 695.5 269 701" stroke="#b0b5b9" stroke-width="1" opacity="0.4"/>
<path d="M341 467.5C335 469 316 474 303 478S275 483.5 264 490S244 506.5 239 517.5S234.5 543 234.5 556S237 583 239.5 596S245.5 621 248.5 633S254 657 259.5 668S276 692.5 279.5 697.5M338.5 447C331 448.5 308 453 293.5 456.5S264 463.5 250.5 469S221.5 481.5 212 492S196.5 518.5 193 533S191.5 563.5 193 578.5S199 607.5 204 622S214 651.5 221.5 665S244 696.5 249 703" stroke="#9da2a6" stroke-width="1" opacity="0.6"/>
<path d="M338.5 466.5C332.5 468.5 315.5 474.5 303 478.5S276 483 265 489.5S244 505 238.5 516S231.5 540.5 231.5 553.5S234.5 579 237.5 592S245.5 619 250 631.5S257 658.5 263 669.5S282 693.5 285.5 698M338.5 465C332.5 467 313.5 473 300.5 476.5S274 481.5 263 488S242 504.5 236 515S229 539.5 228.5 552S230.5 579 233 592S238.5 617.5 242 630S248 655 254 666.5S273.5 692.5 277.5 697.5M337 469.5C331.5 472 315.5 479.5 304 483.5S278.5 487.5 268.5 493.5S248.5 508.5 243 519S236 543 235.5 555S237 579.5 239.5 592.5S246 618.5 250 631S258 657 264 668S283.5 694 287.5 699.5M253 529C253 534.5 251.5 552.5 252 564S254 587.5 256 599.5S262.5 628.5 264 634.5M220.5 500.5C218.5 507.5 210 527.5 208 541.5S207.5 570.5 209.5 584.5S218 619.5 219.5 627M246.5 462C239 465.5 213 471.5 202 482S184 510 180.5 525.5S181 558.5 183.5 575S189.5 608 194.5 623.5S206 654 213.5 667.5S235 700.5 239 707M180.5 492C177 499.5 164 521.5 159.5 537S153.5 569 152.5 585.5S155 626 155.5 634M214.5 245.5C212 254 204.5 280 201 297.5S196 333 193.5 350.5S190 386.5 186.5 404S178.5 439.5 172.5 456.5S159 488 151.5 504S134 536 127 552S114.5 583.5 110.5 600S105.5 642.5 104.5 651.5M181.5 494.5C178 502 166 524.5 161 540S153 571.5 151.5 587S148.5 618.5 151.5 634S162 665 170 679S196 713 201.5 720M248.5 203.5C244.5 211 230 232 224 248S214 290 212 298.5M109.5 645C110 651.5 109 671 112.5 683S127 710.5 130 716" stroke="#7b8084" stroke-width="0.6" opacity="0.6"/>
<path d="M340 453.5C332.5 455 311.5 459.5 297.5 463S267.5 469 254.5 474.5S228 487 220 497.5S207.5 524 206 538S207 568.5 209.5 583S217.5 613 222.5 627S232 655 238.5 667.5S259.5 697 263.5 703M233.5 592C235.5 598.5 241 619 245 631.5S251 656.5 257 668S276 693.5 279.5 698.5" stroke="#3d4246" stroke-width="1.2" opacity="0.4"/>
<path d="M336.5 467C330.5 469.5 313 476 301.5 480S276 486.5 266.5 493.5S248 510 243 520.5S238 544 237.5 556S237 581 238.5 593.5S245 617.5 249 630S255.5 655 262 666.5S283 691.5 287.5 696.5M253 565C254 571 255.5 589 258 600.5S263 623 266 634.5S270.5 657.5 275 667.5S292 691 295.5 695.5" stroke="#4a4f53" stroke-width="1.2" opacity="0.4"/>
<path d="M337.5 456C330.5 458 309.5 464 296 468S262.5 478 255.5 480M340 469C334 471 316 477.5 303.5 481S277 484 266 489.5S244.5 504.5 238 515S229.5 539 228.5 551.5S230 578.5 232 591.5S239.5 618 243 631S249.5 657 255 668.5S272.5 694.5 276 699.5M302.5 482C296.5 484 277 487 267 493S245.5 513 241 517M338.5 449.5C331.5 451.5 309 455.5 294.5 459S265.5 465 252 470.5S223 483 213.5 493.5S198 519.5 195.5 533.5S195.5 565 197.5 580S202.5 609 207 623.5S217 652.5 224 666S246 698 250.5 704" stroke="#6a6f73" stroke-width="1" opacity="0.8"/>
<path d="M338.5 462.5C332 464.5 312.5 471 300 475S273 481 262 487.5S240.5 501 234 511.5S226.5 543.5 225 550" stroke="#3d4246" stroke-width="0.4" opacity="0.8"/>
<path d="M339.5 442C331.5 443.5 308.5 446 292.5 449S260.5 456.5 245.5 462S213 473 202.5 483.5S185 511 181.5 526S179.5 558 181 573.5S187 606 192 621.5S202.5 652.5 210.5 666.5S234 699 239 705.5M210 541C210 548 208 569.5 209 583S215 617 216 624M339.5 471C333.5 473.5 316.5 480 304.5 484S279 488.5 269 494.5S248.5 508.5 243.5 519S238 543 237.5 555.5S239.5 581 242 594S250 620.5 254 633S261 659 266.5 670S284.5 693.5 288 698.5M341 451.5C333.5 453 311.5 457 296.5 460S265.5 464.5 251.5 470.5S222 483 213 494S199.5 521.5 197.5 536S197.5 566.5 199.5 581.5S205.5 611 209.5 625.5S218 654.5 224.5 667.5S245.5 697 249.5 703M339.5 454.5C332.5 456.5 310.5 461 296.5 465S268 470.5 255.5 477S227 497.5 221.5 501.5" stroke="#7b8084" stroke-width="1.2" opacity="0.8"/>
<path d="M208 539C208 546.5 206 568.5 207.5 583S212 610.5 216.5 624.5S230 659.5 233 667M292.5 452C285 454 262 459.5 247.5 465S216 475.5 205.5 485.5S188 512 184.5 527S183 566.5 183 574" stroke="#b0b5b9" stroke-width="1" opacity="0.8"/>
<path d="M305.5 484.5C299 486 278.5 489 268 495S248.5 511.5 244 522S240 546 240 558.5S242 584 244 596.5S248.5 621.5 251 633.5S255.5 658 260 668.5S276 692.5 279 697.5M339.5 440C331.5 441.5 307.5 444 291.5 447.5S260 455 244.5 460.5S210.5 471.5 200 482.5S183 510 179.5 525S177 557.5 178.5 573S184.5 605 189 620S199 650.5 207 665S231 699 235.5 706M216.5 661C219 664.5 224.5 675 229.5 681S239.5 692.5 245 697.5S261 707.5 264 709M257 205C252.5 212.5 238 233 231 248.5S217.5 288.5 215 296.5M106.5 654C108.5 662 110.5 689 117.5 704S143.5 738.5 148.5 745M174.5 450.5C171 458.5 160.5 482 153.5 497.5S139 529.5 133.5 546S123.5 581 120 598.5S114 634 115 651.5S124 694 125.5 703M151.5 542C149 547.5 141 564.5 135.5 575.5S123.5 597 119 608S111.5 630.5 110.5 642S110.5 668 113.5 680S123 703 130 714S151.5 739.5 155.5 744.5M160 642C162 647 166.5 663 171.5 672S185 692 188 696" stroke="#4a4f53" stroke-width="0.8" opacity="0.8"/>
<path d="M340.5 447.5C333 449 310 452 295 456S264 464 250 470S221 481.5 212 492S197.5 518.5 195 533S193.5 563.5 195 579S200 609 204.5 623.5S213.5 652.5 220.5 666S241.5 697.5 246 703.5M338 449.5C330.5 451.5 308 456.5 293.5 460.5S265 469.5 252.5 476S227 488.5 219 499S207.5 525 205.5 538.5S204.5 568 206 582.5S210 610.5 214 624S224.5 651 232 664S255 695 259.5 701M292.5 454.5C285 457 262.5 461.5 248.5 467.5S218 479.5 208 489.5S192 515.5 188 529.5S185 559.5 186 574.5S190 605.5 194.5 620S205 650 213 664S237.5 698 242 705M297.5 466.5C291 468.5 270.5 472 258 478S230.5 491.5 222 502S209 528 207 541.5S205.5 568.5 207.5 582.5S213 611 217.5 625S230.5 659 233 665.5M339 444C331.5 445.5 308 449 293 452.5S263 459.5 248.5 465.5S217 477 207 487.5S190 514 187 529S186.5 560.5 188.5 576S193.5 608 198.5 623S209.5 653 217 666.5S239 698.5 243.5 705" stroke="#7b8084" stroke-width="1" opacity="0.8"/>
<path d="M338.5 455.5C331.5 457 311.5 461.5 297.5 465S269 470 256 476S228 489.5 219.5 499.5S206.5 524 204 538S203 568 204.5 582.5S210 610.5 214 625S222.5 654.5 229 667.5S249 697 253 703M200 579C201.5 586.5 205 609.5 209.5 624S225 659.5 228 666.5M194 578.5C195.5 586 198.5 609 203 623.5S217.5 659.5 220.5 666.5M338 457.5C331.5 459.5 311.5 464.5 298 468.5S270.5 474.5 258.5 480.5S233.5 495 226 506S214.5 531.5 212.5 544.5S211 571.5 212.5 585S218.5 612.5 223 626S231.5 654 238.5 666.5S260 695.5 264.5 701.5" stroke="#4a4f53" stroke-width="1.2" opacity="0.8"/>
<path d="M257 479.5C251.5 483.5 231.5 492 223.5 502.5S212 528.5 210 542S210 570 211.5 584S217 612.5 221 626S228.5 654 235 666.5S256 695 260 701M339.5 461C332.5 463 312.5 469.5 299.5 473S272.5 478 261 484S238 499.5 231.5 510.5S223 542 221 548.5M300.5 476C294.5 478 273.5 482 263 488S242.5 503.5 236.5 513.5S227.5 537 226.5 550S229.5 583 230 590M135.5 642C136.5 647.5 137.5 664.5 141.5 675S151.5 695.5 158.5 704.5S179.5 726 184 730.5" stroke="#7b8084" stroke-width="1" opacity="0.4"/>
<path d="M338.5 477.5C333.5 480 318 487 306.5 490.5S281.5 493.5 272 499.5S255 516 250.5 526S246 554.5 245 560M298 466C291 468 269 471.5 256.5 477.5S230 492 222.5 502.5S212.5 529 210.5 543S211 578 211.5 585.5M171.5 545C169.5 550.5 162.5 565.5 159 576S151.5 597 149.5 608S147 630.5 147.5 641.5S151.5 663 155.5 673.5S165 693.5 171 702.5S190 723.5 193.5 727.5" stroke="#5a5f63" stroke-width="1" opacity="0.6"/>
<path d="M304.5 485.5C298.5 487.5 278 489.5 268.5 495.5S250 512.5 245.5 523S241.5 546.5 241.5 558.5S243 583.5 245 595.5S250.5 620 253.5 632S260.5 662.5 262 668.5M250 471C243.5 474.5 221.5 482.5 212 492.5S196 518 192.5 532S190 569 190 576.5M160.5 542C158 547.5 151 562.5 146.5 573.5S136.5 596 133.5 607.5S128 631.5 128 643S131 666 135.5 677S146 699 153 708.5S172 731 175.5 735.5M160 607C160 612.5 158.5 629.5 160.5 640.5S166.5 661 171.5 670.5S186 693 189 697.5" stroke="#6a6f73" stroke-width="1" opacity="0.6"/>
<path d="M339 469.5C333 471.5 315.5 477.5 303 481.5S275.5 486 265 492.5S247 509.5 242 520.5S237.5 545.5 237 558S239 582.5 240.5 595S245.5 620 248.5 632.5S253.5 657 258.5 667.5S276 692.5 279.5 697M209.5 347C207.5 355.5 202 380.5 198.5 397.5S193 430.5 188.5 447S178.5 480.5 172.5 496.5S156.5 526.5 151.5 542.5S142.5 575.5 140 592S137.5 633 137 641M226.5 348.5C225 356 219.5 379.5 216 395.5S211.5 427 207.5 442S198.5 473.5 192.5 488S175.5 514 171 529S165.5 561.5 166.5 578S174 618 175.5 626M155.5 641.5C157 646.5 161.5 663 166 672.5S180.5 695.5 183 700M161.5 544.5C159 549.5 151.5 565 147 575.5S137 602.5 135 608" stroke="#5a5f63" stroke-width="1" opacity="0.4"/>
<path d="M339.5 441C331.5 442.5 307 445.5 291 449S259.5 456 244.5 461.5S212.5 472 202 482S183 509 179 524S176.5 556.5 178 572.5S183 604.5 188 619.5S199.5 650 207.5 664S231.5 698 236.5 705" stroke="#33373b" stroke-width="1.2" opacity="0.6"/>
<path d="M337.5 467C331.5 469 314 475.5 302 479.5S276.5 484.5 266 491S244.5 506.5 238.5 516.5S231.5 540 230 552.5S229 577.5 231 590S237.5 615.5 241.5 628S248 654.5 254.5 666S275 693.5 279 699M303.5 485C298 486.5 279 488.5 269 494.5S250 511 245 521S239 544 238.5 556.5S239 581.5 241 593.5S250 624.5 251.5 630.5M339.5 462.5C333 464.5 313 469 299.5 473S270.5 480.5 260 487S239.5 509.5 235.5 514M338 453.5C331 455 310.5 460 296.5 463.5S268 469 254.5 474.5S227 487 218 497.5S203.5 523.5 201 537.5S200 565.5 201.5 580S206.5 609 211 623.5S222.5 653 230 666S252 697.5 256.5 704" stroke="#4a4f53" stroke-width="1.2" opacity="0.6"/>
<path d="M303 482.5C297 484.5 277 488.5 267.5 494.5S247 516 243 520.5M219.5 499.5C217 506.5 207.5 526 205.5 540S205.5 569.5 207.5 584S213 613 217.5 626.5S227 654 234 666.5S254.5 696 258.5 702" stroke="#b0b5b9" stroke-width="0.6" opacity="0.8"/>
<path d="M338 477C332.5 479.5 317 487 306 491S281.5 495 273 501.5S257.5 520 254 530S252 552.5 252.5 564S254 588 256 599.5S262 622 265 633.5S271 657.5 276 668S293 690.5 296.5 695" stroke="#b0b5b9" stroke-width="1.2" opacity="0.4"/>
<path d="M270.5 499.5C267 504 254.5 517 250.5 527S247 556 246.5 561.5M236 302.5C234.5 310.5 229.5 333.5 225.5 349S216.5 380 212.5 395.5S206.5 426.5 201.5 442S191 472.5 185 487.5S168.5 524 165 531.5" stroke="#33373b" stroke-width="1" opacity="0.6"/>
<path d="M338.5 474C332.5 476.5 314.5 484 303 488.5S277.5 493.5 269 500S254.5 518 251.5 529S250.5 554 251 565.5S253 588.5 254.5 600S258.5 622.5 261 633.5S264 656 269 666S288 689.5 292 694.5" stroke="#8b9094" stroke-width="0.4" opacity="0.6"/>
<path d="M297.5 467C290.5 469 268 473 256 479.5S232.5 495.5 226 507S218 540 216.5 546.5M209 490.5C206 497.5 194.5 517.5 191.5 532S190 563 192 578S197.5 608.5 202.5 623S212.5 653 219.5 666.5S241 698 245 704.5M340 445C332 446.5 309 450.5 294 454S263 460 248.5 465.5S217.5 477 207.5 488S192 515.5 189 530.5S188 562 190 577.5S196.5 608 201 622.5S210.5 652.5 218 666S240.5 698 245.5 704.5M250.5 469.5C244 473.5 221.5 482 212 492.5S197.5 519 195 533.5S196.5 572 196.5 579.5" stroke="#8b9094" stroke-width="1.2" opacity="0.6"/>
<path d="M335.5 474C330.5 476.5 315 485.5 304.5 490S280.5 495.5 272 501.5S256.5 517 252 527S248 549.5 247.5 561S247.5 584 249 595.5S253.5 619 257 631S263 655.5 269 666.5S289 691.5 293 697" stroke="#6a6f73" stroke-width="0.4" opacity="0.6"/>
<path d="M339.5 452C332.5 453.5 310.5 457.5 296 461S267 467 253.5 472.5S224 484 215 494S200 521 197.5 535S197 565 199 580S205.5 609.5 210 624S219.5 653.5 226.5 667S248 697.5 252 703.5M339 445.5C331.5 447 308 451 293 454.5S262.5 461.5 248.5 467S218.5 479.5 208.5 489.5S192 515 188.5 529.5S186.5 560.5 188 575.5S193 605.5 197.5 620.5S208 651 216 665.5S239.5 698.5 244 705" stroke="#8b9094" stroke-width="1" opacity="0.8"/>
<path d="M340.5 449.5C333 451 309 454.5 294.5 458.5S265 466 251.5 472.5S223 486 214.5 497S203 523 201 537.5S201.5 568.5 203 583S208.5 611.5 212.5 625.5S220 654 227 666.5S248 695.5 252.5 701.5M340.5 448C333 449 309 452 294 455.5S263.5 462.5 249.5 468.5S219 481 210 492S197 528 194.5 535M339.5 446.5C332 447.5 309.5 451.5 294.5 455S264 461.5 249.5 467S218.5 478.5 208.5 489.5S193 517 190.5 532S189 563 191 578S197 608.5 202 623.5S212 653.5 219.5 666.5S240.5 697.5 244.5 704" stroke="#9da2a6" stroke-width="0.8" opacity="0.8"/>
<path d="M337.5 450.5C330.5 452.5 309.5 456.5 295.5 460.5S266 468 252.5 473.5S225 485 216 495.5S201.5 521 198.5 535S197.5 565.5 199 580.5S203.5 609.5 208 623.5S217 652 224.5 665S247 697 251.5 703.5M340.5 454.5C333.5 456 313 460 298.5 463S267.5 469 254 475S226.5 488 218 499S207 525.5 205.5 540S206 569.5 208 584.5S215 613.5 219 627.5S226.5 656 232.5 668.5S252.5 696 256.5 701.5M184.5 526.5C184.5 535 183.5 559.5 185 575S190 606.5 195 621.5S211.5 658 215 665" stroke="#7b8084" stroke-width="1" opacity="1"/>
<path d="M340.5 440.5C332.5 441.5 307 444.5 291 448S260 455 244.5 461S211 471 200 481.5S182 508.5 178.5 524S176.5 556.5 178 572.5S184.5 605.5 189.5 621S200.5 651 208.5 665.5S231.5 699 236 705.5M195.5 621.5C198 629 204 650.5 211.5 664.5S235.5 697.5 240.5 704M210 491.5C207 498.5 195 518 192 532.5S190.5 563.5 192 578.5S197.5 608 202 622.5S217 658.5 220 665.5" stroke="#8b9094" stroke-width="1.4" opacity="0.6"/>
<path d="M256.5 476C250.5 480 228.5 490 220 501S209 527.5 207.5 541.5S208 570.5 210 585S218 621 220 628" stroke="#b0b5b9" stroke-width="1.4" opacity="1"/>
<path d="M339 452.5C332 454 310.5 458.5 297 462S268 468 255 474S226.5 487.5 218 498.5S204.5 524 202 538S203.5 575 204 582.5M340.5 440.5C332.5 442 308 445 292.5 448S260.5 455 245 460.5S210.5 470.5 199.5 481.5S182 508.5 179 524S179 558 181.5 574.5S187 607 192 622.5S203 652 211 666S234 699.5 238.5 706" stroke="#b0b5b9" stroke-width="0.8" opacity="1"/>
<path d="M246.5 465.5C239.5 469 216 477 205.5 487.5S189 513.5 185.5 528S183.5 559.5 185 575S190 605.5 194.5 620.5S206 651.5 214 665.5S238 698.5 243 705M338.5 454.5C331.5 456.5 311 461.5 297 465.5S268.5 471.5 255.5 477.5S229 490.5 220.5 501S209 527 207 541S206 570 208 584S214.5 612 219 625.5S226.5 653.5 233.5 666.5S254.5 696 258.5 702" stroke="#5a5f63" stroke-width="1.4" opacity="0.6"/>
<path d="M223 627C225.5 633.5 231 655 238 667.5S259 696 263.5 701.5M341 443.5C333 445 309 448.5 293.5 452.5S261.5 459.5 246.5 465.5S215.5 477 205.5 487.5S190 514.5 187 529.5S186.5 561.5 188.5 577S195 607.5 200 622.5S209.5 653 216.5 666.5S238.5 697.5 243 703.5" stroke="#9da2a6" stroke-width="1.2" opacity="0.6"/>
<path d="M339.5 447C332 448 309.5 451.5 294.5 455S265 461.5 250.5 467.5S219 479 209 489.5S193 516.5 190 531S188.5 561.5 190.5 577S197 608 202 623S212.5 652.5 220 666S243 698 247.5 704.5M295 456.5C287.5 458.5 265 463.5 251 469.5S221 481 211.5 491.5S197 518.5 194.5 533.5S195 565 197.5 580S204 609 209 623.5S223 659.5 225.5 667M185 575C187 583 190.5 606.5 195.5 621.5S211.5 658.5 215 665.5" stroke="#b0b5b9" stroke-width="0.8" opacity="0.6"/>
<path d="M339 448C331.5 449 309 452.5 294.5 456S264.5 463.5 250.5 469S219.5 480 210 490.5S195 518 192 532.5S191 562.5 192.5 577.5S197.5 608.5 201.5 623.5S211 652.5 218 666S241 698 245.5 704.5M294.5 457.5C287 459.5 265 464.5 251 470S221 481.5 211.5 492S197.5 519.5 195 534S196 572.5 196.5 580M340.5 444C332.5 445 309.5 447.5 294 450.5S263 458 247.5 463.5S214 473.5 203 484S187 511 184.5 526S184 559 186.5 575.5S193 608 198.5 623.5S211 653 218.5 667S239.5 700 243.5 706.5M208 489C205 496 193.5 517 190.5 532S191.5 570.5 191.5 578.5" stroke="#b0b5b9" stroke-width="1.4" opacity="0.6"/>
<path d="M188 576C190 584 194 607.5 198.5 622.5S208.5 653 216 666.5S238.5 698.5 243 705" stroke="#5a5f63" stroke-width="1.4" opacity="0.8"/>
<path d="M339 452.5C332 454 310.5 458.5 296 461.5S261 471.5 254 473M339.5 450C332.5 451.5 310.5 454.5 295.5 457.5S266 464 252 469.5S221.5 481.5 211.5 492S197 518.5 194.5 533S194 564.5 196 579.5S202 610.5 206.5 625S215.5 654 222.5 667S243 698 247 704M339.5 439.5C331.5 441 307 445 291.5 448.5S259 456 244 462S212.5 472.5 202 483.5S184.5 511 181 526S178.5 558.5 180 574S186 606 190.5 621S199.5 651 207 665S231 697.5 235.5 704M185.5 528C185.5 536 184 559 186 575S191.5 607 196.5 622S212.5 659 216 666.5" stroke="#9da2a6" stroke-width="1.4" opacity="0.6"/>
<path d="M339.5 442.5C332 444 308 447.5 292.5 451S261 458.5 247 464.5S216.5 476.5 206.5 487.5S191 515.5 188 530.5S188 562.5 190 577.5S195.5 607.5 200.5 622S210 652 217.5 665.5S240.5 696.5 245 703M339.5 448C332 449.5 309 452 294 455.5S264.5 463 250.5 469S220 481 210.5 491.5S197 518.5 194 533S192.5 564.5 194.5 579.5S200.5 610 205 624S213.5 652.5 220.5 665.5S242.5 697 246.5 703.5M250.5 469.5C244 473.5 221 482.5 212 493.5S199.5 529 197 536.5" stroke="#b0b5b9" stroke-width="1.4" opacity="0.8"/>
<path d="M338.5 456.5C332 458 312 463 298.5 466.5S270.5 472 258 478.5S231.5 492.5 223.5 503.5S211.5 529.5 210 543.5S211.5 572 213.5 586S218.5 614.5 222.5 628S231.5 655.5 238 667.5S257.5 695.5 261.5 701.5M203 580.5C205 588 209.5 609.5 214 623.5S223.5 653 230.5 666S253 697.5 257.5 703.5M339.5 439.5C331.5 441 305.5 445 290 449S258.5 457 244 463S213.5 474.5 203.5 485S187.5 512.5 184 527.5S182 558.5 183.5 574.5S188 606 192.5 621S201.5 650.5 209.5 664.5S234.5 697.5 239.5 704M227 664.5C229 667.5 234.5 677 238.5 683S245.5 695 250 699.5S264 708 267 709.5" stroke="#7b8084" stroke-width="1" opacity="0.6"/>
<path d="M340.5 446C332.5 447.5 309 450.5 293.5 454S263 461 249 467S218 478 208 488.5S191.5 515 189 529.5S188.5 562 191 578S197 608.5 202 623.5S213 653.5 221 667S243 699 247.5 705M211.5 492.5C209 499.5 197.5 519.5 195 534S193.5 564 195.5 579S201 608.5 206 623.5S216 652.5 223.5 666S244.5 697 248.5 703.5" stroke="#9da2a6" stroke-width="1" opacity="0.8"/>
<path d="M340 449C332.5 450.5 311 453.5 296 457S265 463 250.5 469S221 481.5 211.5 492S196.5 518.5 194 533S194.5 564.5 197 579.5S203 609.5 207.5 624S217.5 653 224.5 666.5S245.5 697.5 249.5 704" stroke="#6a6f73" stroke-width="1.4" opacity="0.8"/>
<path d="M294 456.5C287 458.5 264 463 250 468.5S219.5 480 210 490.5S194.5 518 191.5 532S189.5 562 191 577S196 608.5 200.5 623.5S214.5 659.5 217.5 666.5M212 625.5C214.5 632 220.5 653 227.5 666S248.5 697 253 703" stroke="#6a6f73" stroke-width="1.2" opacity="0.6"/>
<path d="M295 458.5C287.5 460.5 265.5 465 251.5 470.5S219.5 489 213 493" stroke="#6a6f73" stroke-width="1.4" opacity="0.6"/>
<path d="M338.5 453.5C331 455.5 309.5 460.5 296 464.5S267.5 470.5 255.5 477S229 491 221 501.5S209.5 527 207.5 541S207 569.5 208.5 583.5S212.5 611.5 216.5 625.5S225.5 653.5 232.5 666S253.5 695 258 701M340.5 448C333 449.5 310.5 453 295.5 456.5S264.5 463 250.5 468.5S221.5 480.5 212 491.5S197.5 519.5 195 534.5S194 565.5 196 580.5S203 611 208 625S217.5 653 224.5 666S246 697 250 703.5M340 441.5C332 442.5 308 445 292 448.5S260.5 456 245.5 461.5S212 472.5 201 483S184 509 180.5 524S178.5 557 180 573S184.5 605.5 189 621S200 651.5 207.5 665.5S231.5 699.5 236.5 706.5M196.5 534C196.5 541.5 195.5 564 197 579S205.5 616 207 623.5M199 624C202 631 208.5 653.5 215.5 667S236.5 698 241 704.5" stroke="#b0b5b9" stroke-width="1.2" opacity="0.8"/>
<path d="M340 448C332.5 449.5 310 452.5 295 456S264.5 463.5 250.5 470S221 483 212 494.5S199.5 522.5 197.5 537S199 567.5 201.5 582.5S206.5 611.5 210.5 625.5S220 654 227 666.5S248 695.5 252 701M187 529.5C187.5 537 186 560 188 575S194.5 605.5 199.5 620.5S211 651 219 665S243.5 698 248 704.5M340.5 444C332.5 445 308 447.5 292.5 451S261 457.5 246.5 463.5S215.5 476 205.5 486.5S188.5 513.5 185.5 528.5S184.5 560.5 186.5 576S192.5 607 197.5 622S206.5 652 214 666S237.5 698.5 242 705" stroke="#b0b5b9" stroke-width="0.8" opacity="0.8"/>
<path d="M339.5 452.5C332 454 310 458 296 461.5S267 468 254 474S226.5 487 217.5 497.5S204.5 524 201.5 537.5S200 566 202 581S208 610.5 212.5 625S222.5 653 229.5 666S250 696.5 254 702.5" stroke="#7b8084" stroke-width="1.4" opacity="0.8"/>
<path d="M340 443C332 444 308.5 446.5 292.5 449.5S261.5 456 246.5 461.5S213 472 202 482.5S183 510 180 525.5S180 558 182 574S189 606 194 621.5S204.5 652.5 212 667S234.5 700.5 239 707" stroke="#9da2a6" stroke-width="0.8" opacity="0.6"/>
<path d="M340.5 441C332 442 307 444.5 291.5 448S260.5 455.5 245.5 461S211.5 471 200.5 481.5S181 507.5 177.5 522.5S175.5 556 177.5 572S184 605 189.5 620.5S200.5 651 208.5 665.5S231.5 699.5 236 706M292.5 451.5C285 453.5 261.5 458 246.5 464S211.5 481.5 204.5 485M341 441C333 442.5 309 445.5 293 448.5S260 455 244.5 460.5S212 471.5 201.5 482.5S183.5 510 180 525S179 557 181 573S186.5 606.5 191.5 622S203 653 210.5 667S232.5 699 236.5 705.5" stroke="#8b9094" stroke-width="0.8" opacity="0.8"/>
<path d="M247.5 464.5C240.5 468 216 475.5 205 486S187.5 512 184 526.5S181.5 559 183.5 575S189.5 606 194 621.5S209.5 658 212.5 665.5" stroke="#9da2a6" stroke-width="1.4" opacity="0.8"/>
<path d="M340 447C332.5 448.5 310 452 294.5 455S263 461.5 249 467S218.5 479.5 209 490S193.5 517 190.5 531.5S189.5 562 191 577.5S197 608.5 201.5 623S211.5 653.5 219 667S241.5 698.5 246 705" stroke="#8b9094" stroke-width="1.4" opacity="0.8"/>
<path d="M340 442C332 443 308 446 292.5 449.5S261.5 456.5 246.5 462.5S212.5 473.5 202 484S185.5 511.5 182.5 526.5S181 559 183 575S189.5 607 194.5 622S205.5 652 213 666S235.5 699 240 706M340.5 445C332.5 446 309 448 293.5 451.5S262 458 247.5 464S215.5 477 205.5 488S191 523.5 188.5 530.5" stroke="#9da2a6" stroke-width="1.6" opacity="0.8"/>
<path d="M340.5 443.5C332.5 445 308.5 448 293 451.5S262 459.5 247.5 465.5S215.5 477.5 206 488S190.5 516 187.5 530.5S187.5 561 189 576.5S193 607.5 197.5 622.5S207.5 652 215 665.5S237.5 697 242 703.5M339.5 445C331.5 446.5 308.5 449 293 452.5S262 460 247.5 466S216.5 477.5 207 488.5S191 515.5 188.5 530.5S187 561.5 189 577S195 608.5 199.5 623.5S209.5 652.5 217 666S239 698 243.5 704.5" stroke="#9da2a6" stroke-width="0.8" opacity="1"/>
<path d="M338.5 450.5C331.5 452 310 456 295.5 459.5S266.5 465 253 470.5S223 482.5 213 493S197 518.5 194 532.5S192 563 194 578S201 608.5 206 623.5S216.5 654 224 667.5S245.5 698.5 250 704.5" stroke="#9da2a6" stroke-width="1.6" opacity="0.6"/>
<path d="M291.5 447C283.5 449.5 258.5 455 243 460.5S211 471 200.5 481.5S181.5 508.5 178 523.5S178.5 565 178.5 573.5" stroke="#b0b5b9" stroke-width="1" opacity="1"/>
<path d="M341 442C333 443 308.5 445 292.5 448S261 454.5 245.5 460S210.5 470 199.5 480.5S181 507.5 177.5 523S176.5 556 178.5 572.5S184 605.5 189.5 621.5S202 652.5 210 667S231.5 700.5 236 707.5M179.5 524.5C179.5 533 177.5 557.5 179.5 573.5S184.5 605 189 620.5S200 651 208 665S232 699 236.5 706" stroke="#8b9094" stroke-width="1.6" opacity="0.8"/>
<path d="M341 446C333 447 310 449.5 294.5 453S262.5 460 248 466S217.5 478.5 208 489.5S193.5 517.5 190.5 532.5S189.5 564 191.5 579.5S197 610 201.5 624.5S211.5 653 218.5 666.5S240 697.5 244.5 704" stroke="#b0b5b9" stroke-width="1.2" opacity="0.6"/>
<path d="M190 531.5C190 539 189 562.5 191 578S197.5 608.5 202 623.5S215.5 659 218.5 666.5" stroke="#7b8084" stroke-width="1.6" opacity="0.8"/>
<path d="M339.5 444C331.5 445.5 307.5 448.5 292.5 452S262.5 459.5 248 465.5S216.5 477.5 206.5 488.5S191 515 187.5 529.5S185.5 561.5 187 577S192.5 607.5 197 622S207 651 214.5 664.5S237.5 698 242 704.5" stroke="#9da2a6" stroke-width="1.6" opacity="1"/>
<path d="M194.5 621.5C197.5 629 205.5 652.5 213 666.5S235.5 698 240 704.5" stroke="#7b8084" stroke-width="1.6" opacity="0.6"/>
<path d="M337.5 460.5C331 462.5 311 468 298.5 472.5S272 479.5 261 486.5S240.5 502 234.5 512.5S226.5 537 225.5 549.5S226 576 228.5 589.5S235.5 616 240 629S248.5 655 255 667S276 693.5 280 698.5" stroke="#181b1e" stroke-width="2.4" opacity="0.8"/>
<path d="M340 468C333.5 469.5 316 474.5 303.5 478.5S275 484 264.5 490S244.5 504 239 514.5S231.5 540 231 553.5S233.5 579.5 236 593S243.5 619 247.5 631.5S255.5 657 261 668S278.5 693.5 282 699M338.5 455C332 456.5 312 462 298 465.5S268.5 471 256 477S230 490.5 222 501.5S211 527.5 209 541.5S209 570.5 211 585S216 612.5 220 626S228.5 654.5 235.5 667S257 695.5 261 701" stroke="#1d2023" stroke-width="1.2" opacity="0.6"/>
<path d="M338 459.5C331.5 461.5 313 467 300 470.5S272 476.5 260.5 482.5S236.5 496 229 506.5S218.5 531 217 544.5S217.5 573 220 587S228 614 232.5 627.5S241 655.5 247.5 668S268 695 272 700.5M180.5 525.5C180.5 533.5 179 557.5 180.5 573.5S185 606 189.5 621.5S204.5 658.5 207.5 666" stroke="#14171a" stroke-width="1.6" opacity="0.6"/>
<path d="M336.5 456C329.5 457.5 309 462 296 466S268.5 473.5 256.5 479.5S232 492.5 224 502S209.5 525.5 206.5 539S204.5 568 206 582S211 609 215.5 623S225.5 651.5 233 664.5S255.5 696.5 260 703" stroke="#181b1e" stroke-width="1.6" opacity="0.6"/>
<path d="M339.5 456.5C332.5 458 311.5 462 297.5 465.5S267.5 471.5 255.5 478S230.5 493 223.5 504S214 530 213 544S214.5 573 216.5 587S221 615 225 628S232.5 654 239 666S259.5 694.5 263.5 700.5" stroke="#1d2023" stroke-width="1.8" opacity="0.8"/>
<path d="M245.5 462.5C238.5 466 213.5 473.5 203.5 485S189.5 514 187.5 529.5S190.5 570.5 191 578.5M208 489C205 496.5 193.5 517 191 531.5S191 563.5 193.5 578.5S200 608.5 204.5 623S214 652.5 222 665.5S245 696 250 702" stroke="#181b1e" stroke-width="1.8" opacity="0.8"/>
<path d="M338.5 471.5C332.5 474 314.5 481.5 303 486S277 491 267.5 497.5S251 514.5 247.5 525S244.5 549 244.5 561S246 585.5 248 597S252 620 255 632S259 657 264.5 667.5S283.5 690.5 287.5 695.5" stroke="#14171a" stroke-width="1" opacity="0.8"/>
<path d="M297 463C290 465 268 468.5 254.5 474S226 486 217 496S202.5 521 199.5 534.5S197.5 564 199.5 579S206.5 608.5 211 623.5S221 653.5 228.5 667S251 699 255.5 705" stroke="#14171a" stroke-width="0.8" opacity="1"/>
<path d="M339 449.5C331.5 451 309.5 454.5 295 458S265.5 465 251.5 471S222 483 213 493.5S198.5 519 196 533.5S195.5 564 197.5 579S203 609 207.5 623.5S223 659 226 666.5" stroke="#14171a" stroke-width="2.4" opacity="0.6"/>
<path d="M338.5 461.5C332 463.5 312.5 470 300 474.5S273 481 262.5 487.5S242 503 236.5 514S231 546 230 552.5" stroke="#1d2023" stroke-width="1.4" opacity="0.8"/>
<path d="M339.5 476.5C334 478.5 317 484.5 305.5 488S279 493 269.5 499.5S253.5 516.5 249.5 527S247 550.5 247 562.5S248.5 588 250.5 599.5S255.5 622 258 633.5S260 658 264.5 668S281.5 691 284.5 695.5M340 461C333.5 462.5 314 467 300.5 470.5S271.5 477 259.5 483.5S235.5 497.5 228.5 508S220.5 533.5 219.5 547S221 576 223 590S229.5 616 233 629S240 656 245.5 668S264 694 267.5 699.5" stroke="#181b1e" stroke-width="2" opacity="0.6"/>
<path d="M336.5 476C331.5 478.5 315.5 487 305 492S282 498 273.5 505S259.5 522.5 256.5 532.5S254.5 554.5 254.5 565.5S255.5 588 257 599S260.5 621.5 263.5 632.5S269 655.5 274.5 666S293.5 690 297 695M340 457C333.5 458.5 313.5 462 299.5 465S268.5 470 255.5 475.5S229 488 221 499S209.5 525.5 207.5 540S209 569.5 211.5 584.5S218.5 613.5 222.5 627S231 655.5 237.5 668S256 697.5 259.5 703M297.5 460.5C290 462.5 267 466 253 472S221 491.5 214.5 495.5" stroke="#181b1e" stroke-width="2.2" opacity="0.8"/>
<path d="M242.5 631C244 637 246.5 656 251.5 667.5S269.5 693.5 273 698.5M337.5 477C332 479.5 316.5 487.5 306 492S280.5 497.5 272.5 504S258.5 520.5 255.5 531S253.5 554.5 254 566S256 588.5 258 600S262.5 622.5 265 634S269.5 656.5 275 667S293 690 297 695M337.5 454.5C331 456 310 461.5 296.5 465.5S270 471.5 257.5 477.5S231 490.5 223 500.5S211.5 526 209.5 540S209.5 569 211.5 583.5S217.5 612 222.5 625.5S233.5 654 241 667S264 696.5 268.5 702.5" stroke="#14171a" stroke-width="1.4" opacity="0.6"/>
<path d="M253 472C246.5 475.5 223.5 483 214 493.5S198 519.5 195.5 533.5S195.5 564 197.5 579.5S204.5 610 209.5 625S220 655 227 668.5S247.5 698.5 251.5 704.5" stroke="#1d2023" stroke-width="1.6" opacity="1"/>
<path d="M297 461.5C289.5 463.5 267 467.5 253.5 473S226 486 217 496.5S203.5 530.5 200.5 537M250.5 468.5C243.5 472 219.5 479 209.5 489.5S193.5 516.5 190.5 531S188.5 561 190.5 576.5S196 608 200.5 623S211 653 218 666.5S238.5 699 243 705.5M263.5 487.5C258.5 491.5 241 502 235 512.5S227.5 537.5 227 550.5S227.5 577 230 590.5S238 617.5 242 631S252 663 253.5 669.5M337.5 472C331.5 474 314.5 481.5 303 485.5S278.5 489.5 269 495.5S250.5 511 244.5 520.5S237 543 235.5 555S234 580.5 235.5 592.5S241 616 244.5 628.5S255 660 257 666.5" stroke="#1d2023" stroke-width="2" opacity="0.8"/>
<path d="M338 458.5C331 460.5 310 467 297 471.5S270 478.5 259 485S238 500 232 511S224 536.5 223 549.5S223 576.5 225 589.5S231.5 615 235.5 627.5S243 653 249.5 665S272 692.5 276 698" stroke="#14171a" stroke-width="2.4" opacity="0.8"/>
<path d="M340.5 443C333 444 309 446 293.5 449S260.5 455 245 460S211.5 469.5 200 480S180 506 176.5 521.5S175.5 554.5 177.5 571.5S183.5 605.5 189 621.5S202.5 653 210.5 667.5S232.5 701 237 708M339 466.5C333 468.5 314.5 473.5 301.5 477S273.5 481.5 262 487S239.5 501 233 511S224 536 222.5 549S222.5 576 224.5 589.5S228.5 616.5 232 629.5S239 656 244.5 668S262.5 695.5 266 701" stroke="#14171a" stroke-width="2.2" opacity="0.6"/>
<path d="M336.5 476C331.5 478 317 485 306 489S281.5 492.5 271.5 498S252.5 513 247 522.5S241 545.5 240 557S240 580.5 241.5 592.5S246.5 618 250 630.5S258.5 657.5 264 668.5S282 694 285.5 699M197.5 579C199 586.5 202.5 608.5 207 623S222 657.5 225 664.5" stroke="#14171a" stroke-width="1.2" opacity="0.6"/>
<path d="M209.5 623.5C212.5 631 221 654.5 228.5 668S250 699 254 705.5" stroke="#181b1e" stroke-width="1" opacity="0.8"/>
<path d="M256 598.5C257.5 604.5 261.5 622.5 264.5 633.5S274 661.5 275.5 667M292 454C284.5 456.5 262 462 248 467.5S216 485.5 209.5 489" stroke="#14171a" stroke-width="1.2" opacity="0.8"/>
<path d="M203.5 537.5C203.5 545 201.5 567 203 581.5S212 617.5 214 624.5" stroke="#1d2023" stroke-width="2.2" opacity="0.6"/>
<path d="M256.5 481.5C251.5 485.5 233.5 495.5 227 506.5S218 533 217 546.5S219 581 219.5 587.5M340 453C333 454.5 310.5 458.5 296.5 462.5S261.5 473.5 254.5 475.5M244 520.5C242.5 526.5 238 543 237 555S237.5 586 238 592" stroke="#1d2023" stroke-width="2.2" opacity="0.8"/>
<path d="M340 456C333 458 313 462.5 299 466S268.5 470 255.5 475.5S228.5 487 219.5 497S206 522.5 203 536.5S201 566.5 203 581.5S210 611.5 214.5 626S224 654 230.5 667.5S250.5 698 254.5 704M340.5 452C333 453.5 311.5 457 297 460.5S266.5 468 253 474S225 486.5 216.5 497.5S205 524 203 538.5S203 569 205 583.5S211 612.5 215 626.5S226.5 659.5 228.5 666.5" stroke="#181b1e" stroke-width="1.2" opacity="0.6"/>
<path d="M243 559.5C243.5 565.5 244.5 584.5 246.5 596.5S252 621 255.5 633S264 662.5 266 668M340.5 441.5C332 443 307 445 291 448.5S258.5 455 243.5 460.5S211 471 200 481.5S182 509 178.5 524S176.5 556.5 178.5 573S184 606 188.5 621.5S200.5 652 208 666S230.5 699 235 706" stroke="#14171a" stroke-width="2" opacity="0.6"/>
<path d="M301.5 479.5C295.5 481.5 275.5 484.5 265 491S242.5 511.5 238 516" stroke="#14171a" stroke-width="1.4" opacity="1"/>
<path d="M297 463.5C290 465.5 268.5 470.5 255.5 476.5S227.5 496 221.5 500" stroke="#181b1e" stroke-width="1.4" opacity="0.8"/>
<path d="M338.5 450C331.5 451 311 454.5 296.5 457.5S266 463 251 468S219 477.5 208.5 487S191 513 187.5 527.5S184 558.5 186 574S193 607 198.5 622.5S210 653 217.5 667S239 700.5 243.5 707.5" stroke="#1d2023" stroke-width="2.4" opacity="0.6"/>
<path d="M336 473C330.5 475.5 313.5 483 302.5 487S274.5 497 268.5 499" stroke="#14171a" stroke-width="1.6" opacity="1"/>
<path d="M338 470.5C332.5 472.5 315.5 479 303.5 482.5S277 485.5 266.5 491.5S246.5 507 240.5 517S232.5 540 231 552.5S231.5 578 233.5 591S240.5 616.5 244.5 629.5S250.5 656 256 667.5S275 695 279 700.5" stroke="#181b1e" stroke-width="2.4" opacity="0.6"/>
<path d="M339 464C332.5 466 313 472 300 476S271.5 481 261 487.5S241.5 505 236 516S230 540.5 229.5 553.5S231 580 233 593S239 623.5 240.5 630" stroke="#181b1e" stroke-width="1.2" opacity="0.8"/>
<path d="M200.5 483.5C197 490.5 183 511 179.5 526S177.5 558 179 574S184 605 188.5 620S198 650 205.5 664S231 697 236 704M337.5 475C332 477 315.5 483 304 487S279 492.5 269.5 499S253 514.5 249 524.5S245 548 245 560S245.5 584.5 247.5 597S253.5 621 256.5 633S261 657 266 667.5S284 691.5 287.5 696.5" stroke="#14171a" stroke-width="2" opacity="0.8"/>
<path d="M237 557C237.5 563.5 239.5 583 242.5 595.5S250.5 626.5 252.5 632.5" stroke="#181b1e" stroke-width="2.2" opacity="0.6"/>
<path d="M210.5 584C212.5 591 218 613 223 627S232.5 656.5 239.5 669S259.5 698 263.5 703.5M306.5 488.5C300.5 490 279.5 491.5 270 498S252.5 514.5 248.5 525S245 549.5 245 562S248.5 587 250.5 599S256 623 259 634.5S266.5 662.5 268 668.5" stroke="#1d2023" stroke-width="1.6" opacity="0.6"/>
<path d="M340 456.5C333 458 313 462 299 465.5S268.5 471 255.5 477S229 489.5 221 500S209.5 527 208 541S209 570 211 584.5S217 612.5 221 626.5S233 661 235.5 668" stroke="#1d2023" stroke-width="2.4" opacity="0.8"/>
<path d="M340 438C331.5 439.5 305.5 442 289.5 446S258.5 456 244 462.5S213.5 474 203.5 485S188 513 185 528.5S184 561 185.5 576.5S190 607 194.5 621.5S205 651 213 664.5S237 696 242 702" stroke="#1d2023" stroke-width="1.4" opacity="1"/>
<path d="M298 463.5C290.5 465.5 267.5 470 254.5 476S228 489 220 499.5S209 525.5 207 539.5S210.5 577.5 211 585" stroke="#14171a" stroke-width="1.8" opacity="0.6"/>
<path d="M339 454C332 456 310 461 296 465S262 476 255.5 478" stroke="#181b1e" stroke-width="1.6" opacity="1"/>
<path d="M226.5 662.5C228.5 665.5 233.5 676 237.5 681.5S245 693.5 250 698.5S264.5 708 267 710" stroke="#3d4246" stroke-width="1" opacity="0.6"/>
<path d="M268.5 674C269.5 675.5 272.5 681.5 275.5 685S281 692.5 284 696S292.5 704.5 294 706M271 210C266.5 216.5 251 235.5 244 250.5S232.5 282.5 228 298.5S220 330 216.5 346.5S210 380 207 396.5S203 430.5 199 446.5S190 478.5 183.5 493.5S166 523 160.5 538S152 568.5 150.5 584S149.5 617 153 633S163.5 664.5 172 679.5S197.5 714 202.5 720.5" stroke="#4a4f53" stroke-width="1" opacity="0.6"/>
<path d="M247.5 669C249 671.5 253 678.5 256 683.5S261.5 693 265.5 697S277.5 706 280 707.5M227.5 301C226 309 220.5 333 217 349S209 380.5 205.5 396.5S200.5 429 196.5 445S182.5 484 179.5 492" stroke="#474c50" stroke-width="0.6" opacity="0.8"/>
<path d="M255.5 208.5C251.5 215.5 238 236 232.5 251.5S225 283.5 221 299.5S213 332.5 209 349S200 388.5 198.5 396.5M191.5 449C188.5 457 178.5 479.5 171 494.5S153.5 524.5 148 540S139.5 572.5 138 589S138.5 631 138.5 639.5M127.5 644.5C129.5 653 133 678.5 140 694S166 728.5 171.5 735.5M203.5 400C201 408 195.5 432 190.5 447S178 477 171.5 492S155 529.5 152 537M195 350C193.5 358.5 188.5 384 184.5 401S176 434.5 170.5 451.5S158 486 151.5 503S136.5 535 130.5 552S118.5 586 114 603S104.5 637 105 654S109 689.5 116.5 704.5S144 737.5 149.5 744" stroke="#474c50" stroke-width="0.8" opacity="0.6"/>
<path d="M225.5 347C224 355 218.5 379 215.5 394.5S211 426.5 207.5 441.5S198 472 192 487S176.5 514.5 172 530S167 562.5 167.5 578.5S169.5 611.5 173.5 627S185.5 657.5 193.5 672S216.5 705 221.5 712M210 394.5C208.5 402.5 205 426.5 201.5 442.5S194 475 188 490S172 519 167.5 534.5S162.5 574.5 161.5 582.5M244 203C240.5 210.5 226.5 232.5 221 248.5S214 282.5 210.5 299S203.5 332.5 200 349.5S195 383.5 191.5 400.5S184 435 179 451.5S168 483 161.5 498.5S147 529.5 141 545.5S131 578.5 128.5 595S124 628 126 644.5S133 677.5 141 692.5S168.5 726.5 174 733.5M618 293C619 300.5 621.5 322.5 623 337.5S625.5 367.5 628.5 382.5S638 419.5 640 426.5" stroke="#181b1d" stroke-width="1" opacity="0.4"/>
<path d="M256.5 253.5C254 261.5 246.5 284 242 299.5S233.5 330.5 229 346.5S220.5 378 217.5 394S213.5 433 212.5 441M618 295.5C619 302.5 622.5 323.5 624 337.5S625.5 365.5 627 379.5S634 414.5 635 421.5" stroke="#2a2e32" stroke-width="1" opacity="0.4"/>
<path d="M169 533.5C168.5 541.5 164.5 566 164.5 582.5S165.5 616.5 169 632S182.5 668.5 185 676M138.5 639C141.5 647 148 673 156 688S182 722 187.5 729M194.5 400.5C192.5 409 187 434 181.5 450S166 490 163 498" stroke="#1a1d1f" stroke-width="1" opacity="0.6"/>
<path d="M159.5 498.5C156.5 506.5 146 530.5 140.5 546.5S129 588 127 596.5M251.5 206C247.5 213.5 235 234.5 229 250.5S221 284 217.5 300S211 332.5 207.5 349S199.5 382.5 195.5 399S188 432 183.5 448S172.5 481 166 496.5S150.5 527 145 543S137 576 134.5 593S130.5 628 132.5 644.5S138.5 677 146 691.5S172.5 725.5 177.5 732.5M193.5 485.5C191 493 180 514 176.5 529.5S173.5 564 174 580.5S176 613 180 628S195 663 198 670" stroke="#2a2e32" stroke-width="0.8" opacity="0.8"/>
<path d="M218 297.5C216.5 306 211 331.5 208 348.5S202.5 382 199.5 399S194 433 189.5 449.5S179 481.5 172.5 497S155.5 526.5 150 542S140.5 573.5 138.5 589.5S139.5 630.5 140 638.5M208.5 442C206.5 449.5 200.5 473 195.5 487.5S179.5 514.5 176 529.5S172 560.5 173 576S176.5 609.5 181.5 624.5S199.5 660.5 203.5 668M164.5 534C164 542 160 566 159.5 582S160 615 163.5 631S175 662 182.5 676.5S206 710 210.5 716.5M187 491.5C183.5 498 170.5 518.5 165.5 533S159 563 159 578.5S162.5 611 168 627S187 664.5 191 672M620 293C620.5 300.5 621.5 322 622.5 336.5S623 365 625.5 379.5S634.5 416.5 636.5 424" stroke="#2a2e32" stroke-width="1" opacity="0.6"/>
<path d="M277.5 213.5C273 220 257.5 239 251 253.5S242 285 237 301S225.5 339.5 223 347.5" stroke="#1a1d1f" stroke-width="0.8" opacity="0.8"/>
<path d="M200 350.5C198 359 194.5 385 190.5 402S182.5 435.5 177 452S165 485 158 501S141 532.5 135 548.5S124.5 581 121.5 597.5S117.5 639 116.5 647.5" stroke="#181b1d" stroke-width="1" opacity="0.6"/>
<path d="M104.5 651.5C106.5 660 110 686.5 118 702S145.5 737.5 151 745" stroke="#33373b" stroke-width="1" opacity="0.4"/>
<path d="M256 207C252 214.5 238 236.5 232.5 252.5S226 285 222 301S214.5 333 210.5 349.5S202.5 382 198.5 398S191.5 429.5 186.5 445.5S174.5 477.5 168.5 493.5S152.5 532.5 149.5 540.5" stroke="#181b1d" stroke-width="1" opacity="0.8"/>
<path d="M274 212.5C270 219.5 255 240 249 254.5S242 286.5 238 302.5S230 333 226 348.5S217.5 378.5 214 393.5S209 425.5 205.5 441S198 471.5 193 486S179 514 175.5 529S173 561.5 174 577.5S179 611 183.5 626S194.5 656 202.5 669.5S226.5 700.5 231 706.5" stroke="#22262a" stroke-width="1" opacity="0.6"/>
<path d="M204 347.5C202.5 356.5 197 382.5 193.5 400S187 434.5 182 451S170 483.5 163.5 499S148.5 530 142.5 546.5S130.5 579.5 127 596S121 629 122.5 645S134 686.5 136.5 694.5" stroke="#1a1d1f" stroke-width="1" opacity="0.8"/>
<path d="M263.5 208.5C259.5 216 246 236.5 240 252S231 283 227 299.5S220.5 332 216.5 348.5S209 380.5 205.5 397S200 429.5 196 445.5S187.5 476.5 181.5 491.5S166 520.5 162 536S156.5 568.5 156.5 585S156 617.5 160 633S171 664 179 678S204 710.5 209 717" stroke="#474c50" stroke-width="1" opacity="0.6"/>
<path d="M165 633C167.5 640 173 662.5 180.5 676S205 708 210 714.5M618.5 294.5C619 302 622 325 623.5 339.5S625.5 368.5 628 382.5S636 416 637.5 422.5" stroke="#22262a" stroke-width="1" opacity="0.4"/>
</g>
<g filter="url(#b3)"><g clip-path="url(#skinclip)"><path d="M622 300C618.3 298.8 605.5 294.7 600 293C594.5 291.3 594.8 291.3 589 290C583.2 288.7 572.8 286.3 565 285C557.2 283.7 553.7 283 542 282C530.3 281 508.2 278 495 279C481.8 280 473.5 283.3 463 288C452.5 292.7 441.3 300.2 432 307C422.7 313.8 413.3 321.7 407 329C400.7 336.3 399.3 344.2 394 351C388.7 357.8 381.3 363.7 375 370C368.7 376.3 361.2 381.7 356 389C350.8 396.3 347.2 405.5 344 414C340.8 422.5 338.7 431 337 440C335.3 449 335.2 459.3 334 468C332.8 476.7 332.7 484.7 330 492C327.3 499.3 321 504 318 512C315 520 313 530.3 312 540C311 549.7 311.3 560.7 312 570C312.7 579.3 313.7 589.3 316 596C318.3 602.7 323.2 603.5 326 610C328.8 616.5 330.7 626.3 333 635C335.3 643.7 338.8 651.2 340 662C341.2 672.8 341.7 688.7 340 700C338.3 711.3 331.7 725 330 730C358.3 748.3 471.7 821.7 500 840C533.3 840 666.7 840 700 840C700 773.3 700 506.7 700 440C690.2 438.2 650.8 430.8 641 429C640 425.8 636.7 418.2 635 410C633.3 401.8 632.3 391.7 631 380C629.7 368.3 628.5 353.3 627 340C625.5 326.7 622.8 306.7 622 300Z" fill="url(#skg)"/>
<path d="M320 600L660 560L660 860L320 860Z" fill="#6a6e72" opacity="0.2" filter="url(#b22)"/>
<path d="M318 500L340 440L360 392L400 336L440 300L452 310L418 352L386 400L362 450L350 510L344 580L350 640L326 650L316 600Z" fill="#25282b" opacity="0.8" filter="url(#b10)"/>
<path d="M500 274C470 280 440 298 412 326C392 352 370 376 352 400C342 430 336 462 332 492C322 512 314 540 314 570C316 596 328 612 336 640C342 662 342 700 336 726" fill="none" stroke="#121416" stroke-width="48" opacity=".85" filter="url(#b8)"/>
<ellipse cx="392" cy="470" rx="26" ry="60" fill="#50545a" opacity="0.55" transform="rotate(12 392 470)" filter="url(#b14)"/>
<path d="M332 610L356 650L394 678L434 702L474 727L510 745L514 860L300 760Z" fill="#3e4246" opacity="0.85" filter="url(#b6)"/>
<path d="M496 752L512 752L508 815L492 815Z" fill="#a0a4a8" opacity="0.7" filter="url(#b3)"/>
<path d="M320 598L346 650L380 704L326 740Z" fill="#0e1012" opacity="0.85" filter="url(#b8)"/>
<path d="M470 760L500 770L506 812L494 812Z" fill="#9a9ea2" opacity="0.5" filter="url(#b4)"/>
<ellipse cx="538" cy="352" rx="64" ry="44" fill="#c8ccd0" transform="rotate(-8 538 352)" filter="url(#b22)"/>
<ellipse cx="556" cy="420" rx="22" ry="26" fill="#a8acb0" opacity="0.5" filter="url(#b10)"/>
<ellipse cx="462" cy="546" rx="46" ry="36" fill="#bcc0c4" opacity="0.95" transform="rotate(20 462 546)" filter="url(#b14)"/>
<path d="M640 430L670 430L670 720L596 720L614 640L626 570L630 500Z" fill="#50545a" opacity="0.6" filter="url(#b8)"/>
<path d="M602 286L646 300L652 432L628 424L622 350Z" fill="#34383c" opacity="0.65" filter="url(#b8)"/>
<path d="M436 300L470 280L540 274L604 284L604 300L540 294L480 298L450 322Z" fill="#34383c" opacity="0.65" filter="url(#b6)"/>
<ellipse cx="462" cy="464" rx="52" ry="22" fill="#34383c" opacity="0.7" transform="rotate(5 462 464)" filter="url(#b10)"/>
<ellipse cx="606" cy="470" rx="34" ry="22" fill="#34383c" opacity="0.7" transform="rotate(-3 606 470)" filter="url(#b8)"/>
<ellipse cx="452" cy="438" rx="30" ry="6" fill="#9a9ea2" opacity="0.35" transform="rotate(-12 452 438)" filter="url(#b4)"/>
<path d="M528 472L544 470L540 520L534 556L522 574L512 552L522 510Z" fill="#45494d" opacity="0.7" filter="url(#b6)"/>
<path d="M549 452L561 452L579 528L590 548L576 558L562 534Z" fill="#c4c8cc" opacity="0.85" filter="url(#b6)"/>
<ellipse cx="583" cy="549" rx="12" ry="11" fill="#c8ccd0" opacity="0.85" filter="url(#b6)"/>
<path d="M600 500L612 520L616 560L604 584L598 560L604 540Z" fill="#5a5e62" opacity="0.5" filter="url(#b6)"/>
<ellipse cx="528" cy="562" rx="9" ry="10" fill="#85898d" opacity="0.6" filter="url(#b4)"/>
<ellipse cx="562" cy="582" rx="32" ry="8" fill="#45494d" opacity="0.75" transform="rotate(-5 562 582)" filter="url(#b6)"/>
<ellipse cx="536" cy="602" rx="28" ry="9" fill="#a4a8ac" opacity="0.5" transform="rotate(-14 536 602)" filter="url(#b8)"/>
<ellipse cx="486" cy="638" rx="10" ry="7" fill="#4a4e52" opacity="0.6" filter="url(#b4)"/>
<ellipse cx="554" cy="681" rx="30" ry="8" fill="#3e4246" opacity="0.85" transform="rotate(-8 554 681)" filter="url(#b6)"/>
<ellipse cx="548" cy="707" rx="25" ry="17" fill="#bcc0c4" opacity="0.85" transform="rotate(-15 548 707)" filter="url(#b10)"/>
<path d="M505 745L545 749L577 739L594 712L586 700L560 730L520 738Z" fill="#45494d" opacity="0.75" filter="url(#b6)"/>
<ellipse cx="384" cy="640" rx="36" ry="50" fill="#50545a" opacity="0.5" transform="rotate(20 384 640)" filter="url(#b22)"/>
</g></g>
<g fill="none" stroke-linecap="round" filter="url(#b1)">
<path d="M501.5 278C493.5 280.5 470 286 456 293.5S428.5 311 417 322.5S395.5 348 385 360.5S360 383.5 352.5 397.5S342 428.5 338.5 444.5S334 486 333 494M452.5 291.5C446 296.5 425 310.5 413.5 322S395 349 384.5 361.5S358 392.5 352.5 398.5M429 328C424 334.5 409 354 399 366.5S376 390.5 369 405S356.5 444.5 354 452.5M490 273C482.5 275.5 459 280.5 445 288S417 307 405.5 318.5S386 344 375.5 356.5S351.5 379.5 343.5 393.5S331.5 423.5 327.5 439.5S322 480.5 320.5 488.5M486.5 271C479 273.5 454 279 440 287S414.5 306 403.5 317.5S384.5 344.5 374.5 357S350 379 341.5 393S329.5 423.5 325.5 439.5S320 479.5 318.5 487.5M376 357C370.5 363.5 352 381 344.5 395S332.5 433.5 330 441.5M607 289C601.5 287.5 585 281 573.5 278S548.5 275 536 273.5S506 271.5 500 271.5" stroke="#14171a" stroke-width="0.8" opacity="0.4"/>
<path d="M508 281C500.5 283.5 476 287.5 462 295.5S435.5 315.5 424.5 327S405.5 353 395.5 366S371 388.5 363.5 402.5S352.5 432.5 349 448.5S342.5 490 341 498.5M514.5 283C506.5 286 483 291 468.5 298.5S441 317.5 429.5 329S411 355 400.5 367.5S377.5 390.5 369.5 404.5S356.5 435.5 352.5 451.5S347 491 346 499M459.5 294C453 299 432.5 313 421 325S397 357.5 392 364M498.5 277C491 279.5 466.5 285 452.5 292.5S425.5 310.5 414.5 322S395.5 349 385.5 361.5S362.5 384.5 354.5 398.5S343 429.5 339 445.5S333.5 486 332.5 494M606 289C600 287.5 581.5 282.5 569.5 280.5S547 278.5 535.5 277.5S506.5 276.5 501 276.5M606 298C600.5 296.5 583 291 571 288.5S547 286 535.5 285S506.5 283.5 500.5 283M606.5 291.5C600.5 289.5 583.5 284 572 281S548 277 536 275.5S505.5 274 499.5 274" stroke="#1d2023" stroke-width="1" opacity="0.4"/>
<path d="M501 276.5C493 279 468 284.5 453.5 292S426 310.5 414.5 322S395 348.5 385 361S361.5 384.5 353 398.5S340.5 428.5 336.5 444S328.5 483.5 327 491.5M492.5 271.5C484.5 274.5 459.5 280.5 445.5 288S419 307 408 319S389.5 346 380 359S358 383 350.5 397S339 429 335.5 445S329 485 327.5 493M345 394.5C342.5 402 334 425 330.5 441S324 482 322.5 490.5M415.5 323C410.5 329.5 397 349.5 387 362S363.5 386 356 400S344.5 430 341 446S334.5 486.5 333.5 494.5M361.5 402.5C359 410.5 350 433.5 346 449.5S339.5 489.5 338.5 497.5M514 282.5C506.5 285 481.5 290 467 297.5S440 315.5 428.5 327.5S409 354 398.5 367S374.5 389.5 366.5 403.5S356 434.5 352 450.5S345.5 491.5 344 499.5M606.5 287.5C600.5 286 583.5 280.5 571.5 278.5S547 275.5 535 274.5S505.5 272.5 500 272.5M605.5 297.5C599.5 295.5 582.5 289 570.5 286.5S547 284 535.5 283S505.5 280.5 499.5 280M606 296.5C600.5 295.5 583 290.5 571.5 288.5S548 286 536 285S505.5 285 499.5 285" stroke="#1d2023" stroke-width="0.8" opacity="0.4"/>
<path d="M493.5 273.5C486 276 460.5 281.5 446 289S419 307.5 407.5 319S387.5 344.5 377 357S351.5 380 343.5 393.5S332 424 328 440S321.5 480.5 320 488.5M491 272C483 275 458 280.5 443.5 288.5S416 307 405 318S386 344 376 356.5S352 380 344 394S332 424 328 440S323 482 322 490M485 270C477 272 452.5 277 438 284.5S405.5 309.5 399 315M381.5 358.5C376 365 357 381.5 349 395.5S336 426.5 332.5 442.5S327.5 483 326.5 491M402.5 314.5C397.5 321 382 340.5 372 353.5S348 378 340 392.5S329.5 423.5 325.5 440S320 480.5 319 489M447.5 290C441.5 295 421.5 308.5 410 320S389.5 345 378.5 357.5S353.5 381 345.5 395S334.5 425.5 330.5 441S324.5 482 323 490.5" stroke="#25282b" stroke-width="1.2" opacity="0.4"/>
<path d="M514.5 284.5C507 287 482.5 292 469 299.5S442.5 318.5 431.5 330S413 356 402.5 368.5S376.5 391 368.5 404.5S355.5 434.5 352 450S346.5 490 345 498M505.5 279C497.5 281.5 473.5 287 459.5 295S432.5 313.5 421 325S401.5 351 391.5 363.5S368.5 387 361 401.5S349 431.5 345.5 447.5S340.5 489 339.5 497M513.5 282.5C505.5 285.5 481 290.5 467 298S440 316 428.5 327.5S409 354 398.5 367S374.5 390.5 366.5 404.5S354.5 435.5 351 451S345.5 491 344.5 499M362 402.5C359.5 410 351.5 433.5 348.5 450S343.5 491.5 342.5 500M414.5 322C409.5 328.5 395 347.5 384.5 360S360 384 352 398S341 427.5 337 443.5S330 484.5 329 493" stroke="#25282b" stroke-width="1" opacity="0.4"/>
<path d="M487.5 271C479.5 273 454.5 278 440 285.5S413.5 305 402 316.5S381.5 342 371.5 354.5S347.5 378 339.5 392S328.5 423 324.5 439S318.5 479.5 317.5 488M456 293.5C450 298.5 429.5 312 418 323.5S399 349.5 388.5 362S364.5 386.5 356.5 400.5S344 438.5 341 446M360.5 401.5C358 409 348.5 431.5 345 447S339.5 487 338.5 495M605 299C599.5 297.5 583.5 292 572 290S548 288 536 287S506.5 285.5 500.5 285" stroke="#0e1012" stroke-width="1" opacity="0.4"/>
<path d="M454.5 292.5C448 297.5 427.5 311.5 416 323S392.5 355.5 387.5 362M503 278C495.5 280.5 471 285.5 457 293S428.5 311.5 417 323S398 350 388 362.5S364.5 386 356.5 400S343.5 439 340.5 446.5M339 391C336 398.5 326 421.5 322.5 437.5S317 478.5 316 487M515 283.5C507.5 286 482.5 291 468 298S441.5 315 429.5 326.5S409 352.5 398.5 365.5S374.5 389 366.5 403.5S356 435 352.5 451S347.5 492 346.5 500.5M606 296.5C600.5 294.5 583 288.5 571.5 286.5S549 283.5 537 282S506 278.5 500 278M606.5 299.5C600.5 298 583 291.5 571 289.5S546 287.5 534 287S505.5 286 499.5 285.5" stroke="#14171a" stroke-width="1" opacity="0.2"/>
<path d="M467.5 297.5C461 302.5 439.5 316 427.5 327.5S407.5 353.5 397 366S372.5 388.5 364.5 402S352 441.5 349 449.5M370.5 354C365 360 345 376.5 337 390.5S325.5 420 322 436.5S315.5 478.5 314.5 486.5M605 289.5C599.5 288.5 583 283.5 571.5 281.5S548.5 279 536.5 278S506.5 276.5 500.5 276" stroke="#14171a" stroke-width="1" opacity="0.4"/>
<path d="M364 403C361 410.5 351.5 434 347 449.5S340 488.5 338.5 496.5M512 284.5C504.5 287 481 292 467.5 299.5S440.5 317.5 429 328.5S410 354.5 399 367S374 389.5 365.5 403S351.5 433 347.5 448.5S341.5 489 340.5 497" stroke="#1d2023" stroke-width="0.8" opacity="0.6"/>
<path d="M502 278.5C494.5 281 470.5 285 456.5 292.5S428 310 416.5 321.5S397 349 387 362S363.5 385.5 355.5 399.5S345 430 341.5 445.5S336 487 334.5 495M605 290.5C599.5 289 581.5 284 570 281.5S548 278.5 536.5 277S507 274 501 273.5M605 301C599.5 299.5 582.5 294 571 291.5S547 289 535.5 288S506 285.5 500.5 285.5" stroke="#0e1012" stroke-width="0.8" opacity="0.2"/>
<path d="M423.5 326.5C418.5 332.5 404.5 352 394 364.5S369.5 388 361.5 402S349.5 432.5 346 448.5S339 488.5 338 496.5M415 322C410 328.5 396 349 386 361.5S362 384.5 354 398.5S343 428.5 339 444.5S332 485 330.5 493M345.5 393.5C343 401.5 333.5 424 329.5 440S323.5 481.5 322 490M511 281.5C503.5 284 479 289 465 296.5S437 315.5 425.5 327S405.5 352.5 395.5 365.5S372 389 364 403.5S352.5 434 348.5 450S342 490.5 341 498.5M606.5 296C600.5 294.5 583.5 289 572 286.5S548.5 283 536 282S504.5 280.5 498 280M605 286C599.5 284 583 278.5 571.5 276.5S548 274 536.5 273S506.5 270 500.5 269.5" stroke="#14171a" stroke-width="1.2" opacity="0.4"/>
<path d="M507.5 280C499.5 282 475 286.5 460.5 293.5S427.5 318.5 421 323.5" stroke="#1d2023" stroke-width="1" opacity="0.6"/>
<path d="M485 270C477.5 272.5 452.5 277.5 438 285S411 304 399.5 315.5S375 348 370 354.5M384.5 361C379.5 367 360.5 384 353 398S341.5 437 339 444.5" stroke="#0e1012" stroke-width="0.6" opacity="0.2"/>
<path d="M504.5 279.5C497 282 472.5 286 458.5 293.5S431 313 420 324.5S401.5 350.5 391 363.5S367 387.5 359.5 401.5S347.5 431.5 343.5 447S337.5 488 336.5 496M446 288.5C439.5 293.5 418 307.5 406.5 319S387 345 377 357.5S354.5 381.5 347 395.5S334 434 331.5 441.5M606 297C600 295.5 583.5 290 572 287.5S548.5 284.5 536.5 283.5S505.5 281 499.5 280.5" stroke="#14171a" stroke-width="0.8" opacity="0.2"/>
<path d="M497 275.5C489.5 278 464.5 284 450 291S423.5 308.5 412.5 320S392.5 347.5 382 360S358 382 350 396S338.5 428 334.5 444S328 484 326.5 492M348.5 397C346 404.5 336 426.5 332 442.5S325.5 482.5 324.5 490.5" stroke="#25282b" stroke-width="0.6" opacity="0.4"/>
<path d="M510 281.5C502 283.5 478 288 464 295.5S436.5 315 425.5 326.5S405.5 353 395.5 365.5S372.5 389 364.5 403S352 434 348.5 449.5S343.5 489.5 342.5 497.5M468 298.5C461.5 303 440 316.5 428.5 328S409.5 353.5 399 366.5S375 390 367 404.5S355 443.5 352.5 451M501.5 277.5C493.5 280 468 284.5 453 291.5S420 316 413.5 321M605 292.5C600 291 584 285.5 572.5 282.5S549.5 278 537.5 276.5S506 273.5 500 273M606 293.5C600.5 292 583.5 285.5 572 283S547 280.5 535 279.5S505.5 278.5 499.5 278.5M605.5 301C600 299.5 583.5 293.5 572 291S548 287 536 286S506 284.5 500 284.5" stroke="#0e1012" stroke-width="1.2" opacity="0.4"/>
<path d="M508 281C500 283.5 476 289 462 296.5S436 314.5 425 326S405 352.5 395 365.5S369.5 396.5 364 402.5M606 291.5C600 290 583.5 285 571.5 283S547.5 279 535.5 278S505 277 499 276.5M605 285C599.5 283.5 582.5 278 571 275.5S548 272.5 536.5 271.5S506.5 270 500.5 269.5" stroke="#0e1012" stroke-width="1" opacity="0.2"/>
<path d="M364 402.5C361.5 410.5 353 434 349.5 450S344 491 343 499.5M496 275C488 277.5 462.5 282.5 448.5 290S422 309 410.5 320.5S391.5 346.5 381.5 359.5S358.5 383 351 397S338.5 428 334.5 443.5S328.5 483.5 327 491.5M491.5 273.5C483.5 276 459 281.5 445 289S418 307.5 406 318.5S386 343 375.5 355.5S351 378 342.5 392S329.5 423 325.5 439S320 480 319 488.5M449.5 289.5C443 294.5 421.5 308.5 410 320.5S390 347 380 359.5S354 389.5 348.5 395.5" stroke="#25282b" stroke-width="1" opacity="0.2"/>
<path d="M453.5 291C447 296.5 425.5 310.5 414 322S394 347.5 384 360S357.5 391.5 352 397.5M495.5 275C488 277.5 464.5 282.5 450.5 290.5S422.5 309.5 411.5 321S392.5 348 382.5 360.5S357 391.5 352 398M500 277.5C492.5 280 467.5 285.5 453.5 293S427 310.5 416 322S396 348.5 386 361S361.5 383.5 353.5 397.5S341.5 429 338 445S332 485.5 330.5 493.5" stroke="#14171a" stroke-width="1.2" opacity="0.2"/>
<path d="M374 356C368.5 362.5 350 379.5 342 393S327.5 431.5 324.5 439" stroke="#14171a" stroke-width="1.2" opacity="0.6"/>
<path d="M507.5 279C499.5 281.5 475 288 461 295.5S434 313 422.5 324.5S404 352 394 365S370.5 388.5 363 402.5S352 433 348.5 449S342.5 490 341.5 498M421 324.5C416 331 401.5 351 391 364S366.5 387.5 358.5 401.5S347 439.5 344.5 447" stroke="#14171a" stroke-width="1" opacity="0.6"/>
<path d="M484 270.5C476.5 273 452.5 278.5 438.5 286S411 304.5 399.5 316S381.5 342.5 371 355S346 377.5 338 391S326 420.5 322 436.5S316 478 314.5 486" stroke="#25282b" stroke-width="0.8" opacity="0.6"/>
<path d="M420 324.5C414.5 331 400 350.5 389.5 363S362 393.5 356.5 400M492.5 274.5C485 277 461.5 281 447 288S419.5 306.5 407.5 317.5S387 343.5 377 356S353.5 380.5 346 395S334.5 426.5 331.5 442.5S328 484 327 492M606 293.5C600.5 292 584 286.5 572.5 284S548.5 279.5 536.5 278S506.5 275 500.5 274.5" stroke="#0e1012" stroke-width="0.6" opacity="0.4"/>
<path d="M493.5 276C486 278.5 462.5 283 449 290.5S422.5 309 411 320.5S391.5 346 381 358S355 380 347 394S334.5 425 331 440.5S325.5 481 324 489M517.5 284.5C509.5 287 485.5 291 470.5 298S441.5 316.5 429.5 328S409.5 354 399.5 367S375.5 391 367.5 405S356.5 436.5 353.5 452.5S348.5 492.5 347.5 500.5" stroke="#1d2023" stroke-width="0.8" opacity="0.2"/>
<path d="M404 317C399 323.5 384.5 344 374 356.5S346 387 340 393M406.5 318.5C401.5 325 387 344.5 377 357S349.5 387 344 393M386 361C380.5 367 361.5 385 353.5 399S341.5 437.5 339 445M495.5 275.5C488 278 464 282.5 450 290S418.5 316 412.5 321M606 290.5C600 289 582.5 283 570.5 280.5S546.5 277 535 275.5S505.5 274 499.5 273.5M606.5 293C600.5 291.5 583 286.5 571 284.5S547.5 282 535.5 281S506 279.5 500 279.5M606 296.5C600.5 295 582 288.5 570.5 286.5S547 284 535.5 283S506 281.5 500 281" stroke="#0e1012" stroke-width="0.8" opacity="0.4"/>
<path d="M360 402.5C357.5 410 349 433 345.5 448.5S338.5 488.5 337.5 496" stroke="#25282b" stroke-width="1" opacity="0.6"/>
<path d="M511.5 283C504 285.5 480 290 466.5 297.5S439.5 316.5 428 327.5S408 353 397.5 365.5S373 389 365 402.5S352 433.5 348.5 449.5S344 490.5 343.5 498.5M429.5 329.5C424.5 335.5 410.5 354.5 400 367S374.5 389 366 402.5S353.5 433 349.5 449S343.5 489.5 342.5 497.5M494.5 275C487 277.5 463.5 283 449 290.5S421.5 308 409.5 319S389 345 378.5 357.5S354 380 346 394S334.5 425.5 330.5 441.5S325.5 482.5 324.5 490.5M606.5 297C600.5 295.5 583.5 289 571.5 286.5S547.5 283.5 535.5 282.5S505.5 280.5 499 280M604.5 291.5C599 290 583 285 571.5 283S548 280.5 536.5 279.5S507 278.5 501 278.5" stroke="#1d2023" stroke-width="0.6" opacity="0.2"/>
<path d="M499.5 278.5C492 281 468 286.5 454 293.5S427 310.5 415.5 321.5S394 347.5 383.5 360S359 383 350.5 396.5S337.5 426 334 442S329 483.5 328 492M341 392.5C339 400.5 331 424 327.5 440S321.5 481 320.5 489M605 284.5C599 283 581.5 277 570 275S548 273 536.5 271.5S507 269 501 268.5" stroke="#1d2023" stroke-width="1.2" opacity="0.4"/>
<path d="M400.5 368.5C395 374.5 377 391.5 369 405.5S355 444 352.5 451.5M453.5 293C447.5 298 427.5 311 416 322.5S396 349 385.5 361.5S362 384.5 354 398.5S341 436.5 338.5 444M606.5 293.5C600.5 292 582.5 287 570.5 285S547.5 282.5 535.5 282S506 280.5 500 280.5M606.5 295C600.5 293 584 287.5 572 285S547.5 281.5 535.5 281S505 280.5 498.5 280M606.5 286.5C600.5 284.5 583 278 571 275.5S547.5 273.5 535.5 273S505.5 270.5 499 270" stroke="#1d2023" stroke-width="0.6" opacity="0.4"/>
<path d="M495.5 273.5C488 276 463 281.5 448 289S419.5 307.5 408 319S388.5 344.5 378.5 357.5S354 381.5 346.5 396S336.5 427.5 333 443.5S326.5 483 325.5 491M400 315.5C395 322 381 342 371 355S345 386 340 392M606 286.5C600.5 284.5 583 277.5 571.5 274.5S547.5 271 535.5 270S505.5 269 499 269" stroke="#14171a" stroke-width="0.6" opacity="0.4"/>
<path d="M492.5 273.5C485 276 460.5 281.5 446.5 289S420 308.5 409 320S389.5 346 379.5 358.5S356 381.5 348 395.5S336.5 426.5 333 442.5S327.5 483 326.5 491" stroke="#0e1012" stroke-width="1.2" opacity="0.6"/>
<path d="M484.5 270C476.5 272.5 452 277.5 437.5 285S410.5 303.5 399.5 315S381 342 371 355S348.5 379.5 341 394S329 424 325.5 440S319 480 318 488M607 292C601 290.5 583.5 284.5 571.5 282S548 279 535.5 278S505 276 499 276M606 294.5C600.5 293 584 288 572 285.5S548 281.5 536 280S506.5 278 500.5 277.5" stroke="#1d2023" stroke-width="1" opacity="0.2"/>
<path d="M401.5 316C396.5 322.5 381.5 342 371.5 354.5S347.5 377.5 339.5 391.5S327.5 422.5 323.5 438.5S316.5 478.5 315 486.5M355 398C352.5 406 343 429.5 339 445.5S334 486 333 494M487 270.5C479 273 454 278 439.5 285.5S412 304 400 315.5S380 341.5 369.5 354.5S346 378 338 392S326 422.5 322 438.5S316 478.5 314.5 486.5" stroke="#25282b" stroke-width="1.2" opacity="0.2"/>
<path d="M494.5 273C486.5 275.5 461.5 280 447 287.5S418.5 305.5 407 317S386.5 343.5 376.5 357S354 381.5 346.5 396S335 426.5 331.5 442.5S326 483.5 325 491.5" stroke="#25282b" stroke-width="0.8" opacity="0.2"/>
<path d="M441 286.5C434.5 291.5 413.5 304 401.5 315S375 347 369.5 353.5" stroke="#1d2023" stroke-width="1.2" opacity="0.6"/>
<path d="M607 298.5C601 296.5 583.5 290.5 571 288S547 284.5 534.5 283.5S505 281.5 499 281M606 293.5C600 291.5 583 286.5 571.5 284S547.5 280.5 536 279S506 277.5 500.5 277" stroke="#0e1012" stroke-width="1.2" opacity="0.2"/>
<path d="M607 298C601 296 584.5 289 572.5 286.5S547 283 535 282S505.5 280 500 280M605 296C599.5 294.5 582.5 288.5 571 286.5S548.5 283 536.5 282S506.5 279.5 500.5 279M606 283.5C600.5 282 583 276.5 571.5 274.5S547.5 271.5 535.5 270.5S506.5 268 500.5 267.5" stroke="#1d2023" stroke-width="1.2" opacity="0.2"/>
<path d="M607 293.5C601 292 583 286 571 283.5S547 280 535 279S505 278.5 499 278.5" stroke="#14171a" stroke-width="0.6" opacity="0.2"/>
</g>
<path d="M322 516C312 508 296 506 282 510C266 515 256 526 256 540C257 556 264 572 276 584C288 596 304 601 318 597C324 580 322 548 322 516Z" fill="#5c6064" filter="url(#b2)"/>
<path d="M312 524C300 516 286 516 274 523C266 530 265 542 270 556C278 572 292 584 306 586" fill="none" stroke="#2a2e32" stroke-width="7" opacity=".8" filter="url(#b4)"/>
<ellipse cx="268" cy="548" rx="4" ry="8" fill="#8e9296" opacity=".6" filter="url(#b4)"/>
<ellipse cx="281" cy="560" rx="4" ry="4" fill="#b8bcc0" opacity=".7" filter="url(#b2)"/>
<ellipse cx="308" cy="540" rx="4" ry="12" fill="#8e9296" opacity=".7" filter="url(#b4)"/>
<ellipse cx="313" cy="563" rx="5" ry="9" fill="#0b0d0e" opacity=".9" filter="url(#b2)"/>
<ellipse cx="304" cy="586" rx="11" ry="7" fill="#7a7e82" opacity=".8" filter="url(#b4)"/>
<path d="M330 500C310 498 285 498 262 510C254 516 250 530 252 545" fill="none" stroke="#14171a" stroke-width="14" opacity=".55" filter="url(#b4)"/>
<path d="M296.5 577C293 586 294 596 297.5 603" fill="none" stroke="#d0d4d8" stroke-width="1.8"/>
<path d="M297.5 601C300 608 296.6 618 298.4 627" fill="none" stroke="#d8dce0" stroke-width="2.6" stroke-linecap="round"/>
<path d="M294.6 577C291 586 292.4 596 295.6 603" fill="none" stroke="#22262a" stroke-width="1.1"/>
<g fill="none" stroke-linecap="round">
<path d="M328 514C325 514 316.5 514.5 311 515.5S300.5 516.5 295.5 518S284.5 521 280 524S271.5 529.5 268 533.5S261.5 545.5 260.5 548" stroke="#1d2023" stroke-width="0.8" opacity="0.4"/>
<path d="M329 507.5C326.5 507.5 319 507.5 313.5 508S302 508.5 296 509.5S284 512 279 514.5S268.5 520.5 265 524.5S257.5 537 255.5 539.5" stroke="#5a5f63" stroke-width="1.2" opacity="0.8"/>
<path d="M277.5 504C275 506 267 510.5 262.5 514.5S253.5 527.5 251.5 530" stroke="#33373b" stroke-width="0.6" opacity="0.8"/>
<path d="M295 501C292.5 502.5 284 505 278.5 508S266 518 263.5 520M326.5 517C324 517 314.5 517.5 309.5 518S299 519.5 294.5 521.5S285 526 281 529S274.5 536.5 271.5 540S265 550.5 263.5 552.5" stroke="#4a4f53" stroke-width="1" opacity="0.8"/>
<path d="M281.5 528.5C280 530.5 274 536 271 540S264 550 262.5 552" stroke="#1d2023" stroke-width="1.2" opacity="0.4"/>
<path d="M295 519C292.5 520 285 522 281 525S271 533 269 535" stroke="#0e1012" stroke-width="1" opacity="0.6"/>
<path d="M329.5 505C327 505.5 318.5 506.5 313 507.5S302 509.5 296.5 511S284.5 512.5 279.5 515S269.5 522 265.5 526.5S257.5 539 256 541" stroke="#5a5f63" stroke-width="0.6" opacity="0.8"/>
<path d="M278.5 512.5C276.5 514.5 269 518.5 265 522.5S257 535 255 537.5" stroke="#5a5f63" stroke-width="0.8" opacity="0.4"/>
<path d="M328.5 507.5C326 507.5 317.5 508.5 312 509.5S301.5 511.5 296.5 512.5S286 515 281 517.5S270 522.5 265.5 526.5S258 538 256 540M331 503C328 503 319 504 313 504.5S301.5 504.5 295.5 505.5S283 508 277.5 511S267 517.5 263.5 522S256 534.5 255 537.5" stroke="#1d2023" stroke-width="0.6" opacity="0.6"/>
<path d="M328.5 506.5C325.5 506.5 317 508 311.5 509S301 511.5 296 513.5S285 517.5 280 520.5S269.5 530.5 267.5 532" stroke="#4a4f53" stroke-width="1" opacity="0.4"/>
<path d="M329 507C326.5 507 318 508 312 508.5S300.5 509.5 295 511.5S284.5 515.5 280 518S270 525 266.5 529S260 541.5 258.5 544" stroke="#4a4f53" stroke-width="0.6" opacity="0.6"/>
<path d="M327.5 506.5C325 507 317.5 508 312 509.5S298.5 513 295.5 513.5M311.5 518C309 518.5 301.5 518 296 519.5S284.5 522.5 280 525.5S271 534.5 269 536.5" stroke="#5a5f63" stroke-width="1" opacity="0.8"/>
<path d="M331 493.5C328 494.5 319 496.5 313 498S301 500.5 295 502.5S284 507.5 279 510.5S268.5 517 264.5 521.5S256.5 533.5 255 536" stroke="#4a4f53" stroke-width="0.6" opacity="0.8"/>
<path d="M295.5 502.5C292.5 503.5 283 505.5 278 508.5S267.5 514.5 263.5 519S255 532 253.5 535" stroke="#4a4f53" stroke-width="1" opacity="0.6"/>
<path d="M331 499C328 499.5 319 501.5 313 502.5S298.5 505 296 505.5" stroke="#1d2023" stroke-width="1" opacity="0.4"/>
<path d="M326 517C323.5 517 316 516.5 311 517S301 518 296 519.5S285.5 522.5 281 525S271.5 531.5 268.5 535.5S262 547.5 261 549.5M279 510.5C276.5 512 268 516.5 264 520.5S255 532.5 253 535M281 525.5C279 527 272.5 531.5 269 535S262 545.5 260.5 547.5M332.5 490.5C329.5 491 320 492.5 314 494S301 497 295 499S283 502.5 277.5 505.5S267.5 512 263.5 516.5S254.5 530.5 252.5 533" stroke="#5a5f63" stroke-width="1" opacity="0.6"/>
<path d="M332.5 489.5C329.5 490 320 492 313.5 493S302 495 296 496.5S284.5 498.5 278.5 501S265.5 507 261 511.5S251.5 524.5 250 527" stroke="#0e1012" stroke-width="1" opacity="0.8"/>
<path d="M328 513C325.5 513.5 318 513 312.5 513.5S302 515 296.5 516.5S285 519 280 521.5S271 527.5 267.5 531.5S260.5 543.5 259 546" stroke="#5a5f63" stroke-width="1.2" opacity="0.6"/>
<path d="M312 512.5C309.5 513 300.5 513 295 514.5S283.5 518 279 521S269 530 267 531.5" stroke="#33373b" stroke-width="1.2" opacity="0.8"/>
<path d="M329 508C326.5 508.5 318.5 509.5 313 510.5S302 511 296 512.5S284 517 279 519.5S270 525.5 266.5 529.5S260 542.5 258.5 545M331.5 494.5C328.5 495 320.5 497 314.5 498S301 500.5 295 502S283 505 278 507.5S266.5 514.5 262.5 519S255.5 532 254 534.5M281 519C278.5 520.5 272 524.5 268 528.5S258.5 540 256.5 542" stroke="#0e1012" stroke-width="1.2" opacity="0.6"/>
<path d="M329.5 501.5C327 502 318.5 503 313 504.5S301 506.5 295.5 508S284 511 279 513.5S269.5 519.5 265.5 523.5S257 535.5 255.5 538M329 505.5C326 505.5 318 505.5 312.5 506S300.5 508 295 509S281.5 513.5 278.5 514.5M280 516C277.5 517.5 270.5 522 266.5 526S258 539 256 541.5" stroke="#4a4f53" stroke-width="0.8" opacity="0.8"/>
<path d="M332 494.5C329 495 319.5 497.5 313.5 499S302 501.5 296 503S284 506 278.5 508.5S267.5 515 263 519.5S255 532.5 253 535M328.5 511C325.5 511 318 511 312.5 511.5S300 513 294.5 514.5S285 518.5 280.5 521.5S271 528.5 267.5 533S260.5 544 259.5 546.5" stroke="#4a4f53" stroke-width="1.2" opacity="0.6"/>
<path d="M278.5 512C276 513.5 267.5 517.5 263.5 522S257 536 255.5 538.5M295.5 509C292.5 510 284 513.5 279.5 517S269 526 266.5 528" stroke="#1d2023" stroke-width="1" opacity="0.8"/>
<path d="M331 497.5C328 498 319.5 499 313.5 500S301.5 501.5 295.5 503S283.5 506 278 508.5S266.5 514.5 262.5 518.5S254.5 531 253 533.5M330.5 501.5C327.5 502 319 503 313 504S300.5 504.5 295 505.5S284.5 508 279 511S267 517.5 263 521.5S255 533 253.5 535.5" stroke="#5a5f63" stroke-width="0.8" opacity="0.6"/>
<path d="M329.5 504.5C326.5 505 317.5 505 312 506S300.5 509 295.5 510.5S285 514 280 517S270 523.5 266 527.5S258 538.5 256.5 541" stroke="#5a5f63" stroke-width="1.2" opacity="0.4"/>
<path d="M296.5 506C293.5 507 283.5 509 278 512S268 518 264 522.5S257 536 255.5 539" stroke="#0e1012" stroke-width="1" opacity="0.4"/>
<path d="M280 515C277.5 516.5 269.5 520.5 265 524.5S257 538 255.5 540.5M277.5 508C275 509.5 266 513.5 262 517.5S254 531 252 533.5" stroke="#1d2023" stroke-width="1" opacity="0.6"/>
<path d="M330.5 498C327.5 499 317.5 501 311.5 502.5S301 505 296 507S285 511.5 280 514.5S269 520.5 265 525S257.5 537.5 256 540" stroke="#1d2023" stroke-width="0.8" opacity="0.6"/>
<path d="M331 498.5C328 498.5 319 499.5 313 500S301.5 501.5 295.5 503S283.5 506.5 278.5 509S267 514 263 518S254.5 530.5 253 533.5" stroke="#1d2023" stroke-width="1.2" opacity="0.6"/>
<path d="M295.5 521C293.5 522 286.5 525 282 527.5S271.5 535.5 269 537" stroke="#0e1012" stroke-width="0.8" opacity="0.8"/>
<path d="M327.5 509.5C325 509.5 316.5 510 311 510.5S300.5 512.5 295.5 514S285.5 516.5 281 519.5S271 526 267.5 530S259 541 257.5 543" stroke="#33373b" stroke-width="1.2" opacity="0.4"/>
<path d="M330 501C327.5 501 319.5 501 314 501.5S302 502.5 296 503S284.5 505 279 507.5S267 513.5 262.5 517.5S253.5 528.5 251.5 530.5" stroke="#4a4f53" stroke-width="0.8" opacity="0.4"/>
</g>
<path d="M385 444.5C396 436 416 425.5 440 419C462 414 480 413.5 500 415C516 416.5 530 420 538 424.5C541.5 430 540 437 535 439.5C522 437.5 506 434 490 431C470 427.5 452 427 432 430C414 433 397 439.5 385 444.5Z" fill="#1e2124" opacity="0.95" filter="url(#b2)"/><path d="M385 444.5C396 436 416 425.5 440 419C456 415.5 470 414 480 414C466 418 450 421 436 425C416 431 398 438 385 444.5Z" fill="#15181a" opacity="0.8" filter="url(#b1)"/><path d="M433.1 418.2L438.7 414.7M497.9 413.1L502.5 413.2M433.1 422.1L437 420.5M469.1 411L474.7 409.2M525.7 434.7L530.9 435.7M450.9 414.3L454.8 413.1M529.2 429.5L533 429.5M416.2 427L421.9 423.2M522.3 431.5L528.9 431.9M419.5 424.7L424.1 421.5M483.6 423.7L487.8 422.8M426.2 423.7L429.3 421M501.5 429.2L508.1 427.6M412.9 430.8L417 427.4M505 429.7L510.7 428.2M426.2 421.2L429.9 420M416.2 430.3L419.9 426.6M403.2 435.9L408.4 432.1M476.3 423.7L480.8 421.7M472.7 417.4L479.9 416.5M522.3 421.2L527.6 421.3M450.9 417.7L456.8 416.3M443.7 416.7L449 413.9M426.2 426L429.9 424.2M422.9 425.5L427.4 421.7M476.3 423.6L480.3 423M532.6 428L538.8 429.5M522.3 435.1L525.9 435.3M472.7 410.7L478.8 409.6M403.2 435.2L406.3 432.2M525.7 432.8L530.6 432M490.8 415.6L494.3 415.5M490.8 423.2L496 421.9M515.4 421.2L519.5 420.7M400 438.5L404.3 433.7M497.9 419.5L501.7 418.2M494.4 423.6L499.8 422.3M454.5 419.7L460 418.6M465.4 419.5L468.8 417.8M518.8 424.8L523.4 425M458.1 412.2L462.7 410.6M406.5 432.4L410.3 429M458.1 414.3L462.3 412.1M518.8 429.7L523.6 429.7M433.1 418.2L436.8 415.2M461.8 422.8L466.1 420.3M490.8 418.7L496.7 416.9M454.5 414.6L458.9 413.7M476.3 422L480.8 421.6M518.8 433.1L526 433.1M487.2 411.9L491 410.9M501.5 420.2L506 420.2M483.6 418.5L490.3 416.5M403.2 433.8L407.4 429.3M450.9 421.1L456.2 418.4M400 438.1L403.6 434.8M429.6 421.7L435.5 417.2M515.4 424.5L521.2 424.1M525.7 434.9L533.2 434.6M525.7 422.4L532 422.7M497.9 426.3L504.2 426M458.1 416.9L461.5 415.3M440.1 423.6L445.9 421.3M400 436.9L404.7 431.6M447.3 416.5L451.4 414M472.7 412.3L476.7 411.9M476.3 421.9L480.1 420.6M458.1 422.5L461.4 420.8M429.6 426.7L434.5 423.4M422.9 423.9L427.7 419.5M518.8 422.5L522.7 421.8M440.1 419.7L445.8 416.3M515.4 428.6L520.6 427.5M529.2 430.7L536.3 431.5M494.4 414.7L500.5 414.2M501.5 426.2L507.8 426.7M487.2 414.3L492.8 412M465.4 419.9L470.1 417.6M409.7 431.1L414.7 428.3M508.5 424.9L515.1 423.9M429.6 421L435.9 418M472.7 418L476.3 416.8M494.4 412.7L500.2 412.9M458.1 413L463.1 411.8M522.3 422.9L527.5 423.5M472.7 420.5L477.9 419.2M508.5 421.8L515.2 422.1M525.7 429.5L530.2 430M406.5 434.9L410 431.4M497.9 413.8L502.7 413.7M429.6 424.3L435.4 420.2M483.6 417.8L490.9 416.7M409.7 434L414.6 429.1M469.1 414L474.7 411.5M440.1 421.5L443.8 419.8M440.1 421L443.5 419M532.6 428.5L538.9 428.6M454.5 417.7L459.3 416.8M429.6 423.8L436.1 421.6M480 421.3L483.6 421.1M419.5 425.4L423.3 422.1M406.5 433.8L412 429.7M522.3 432.6L529 433.4M515.4 433.5L522.7 432.3M515.4 423.1L521.7 423.8M525.7 421.9L531.5 421.9M508.5 427.2L513.5 426.7M429.6 422L433.9 419.2M400 437.4L404.9 432.2M436.6 424.3L442.5 422.6" stroke="#1a1d20" stroke-width="1.2" fill="none" stroke-linecap="round" opacity=".7" filter="url(#b1)"/>
<path d="M584 439C590 430 600 423 614 420C626 418.5 636 420 643 425L641 434C632 433 622 433 612 434C602 435 592 437.5 584 439Z" fill="#1e2124" opacity="0.95" filter="url(#b2)"/><path d="M608.3 423.8L614.2 419.6M611.1 423.3L614.8 421.3M613.9 420.6L620.9 418.3M589.2 435.7L591.4 432.3M601.6 426.7L604.5 424.5M628 420.6L634.7 420.5M634.8 426.1L639 425.5M628 420.9L634.4 418.9M630.7 427.9L637.2 427.5M626.6 421.2L631.1 420.3M628 425.9L634 425.9M604.3 425.8L607.6 422.9M598.9 423.8L602.8 421.4M621 420.1L625.3 418.3M598.9 431L601.5 428.6M601.6 429.7L606.2 425.2M611.1 425.5L615.7 422.3M616.7 420.3L620.4 418.3M601.6 423.8L606.6 419.5M595.1 429.7L599.6 424.7M591.5 429.7L595.4 426.3M591.5 434.3L595.4 428.3M615.3 427.4L621 426M616.7 421.9L621 420.8M630.7 422.3L635.6 421.2M623.8 426.9L628 426.4M621 424.3L627.3 422M597.6 424.8L602.7 419.7M636.1 424.1L640.7 423.7M598.9 430.5L602 428.7M621 426.5L627.2 423.3M592.7 432.3L595.9 426.8M628 424.5L634.9 422.6M593.9 431.2L597.2 428.1M633.4 428.2L638.1 427.8M602.9 428.8L606 425.6M625.2 425.1L629.8 424.5M613.9 422.8L618.6 420.1M602.9 430.2L607.2 425.9M616.7 426.1L623.3 424.2M633.4 427.2L640.8 426.2M625.2 420.4L629.4 420.4M604.3 424.6L610.8 421M596.4 430.7L599.6 426.1M628 424.7L634.5 423.1M613.9 427L618.5 424.4M613.9 427.6L619.3 426.5M612.5 426.3L617.4 423.9M621 427L627.6 424.1M592.7 433.3L597.6 428.8" stroke="#1a1d20" stroke-width="1.2" fill="none" stroke-linecap="round" opacity=".7" filter="url(#b1)"/>
<ellipse cx="458" cy="463" rx="46" ry="17" fill="#0b0d0e" opacity="0.97" transform="rotate(6 458 463)" filter="url(#b6)"/>
<ellipse cx="432" cy="466" rx="16" ry="9" fill="#0e1012" opacity="0.8" transform="rotate(-15 432 466)" filter="url(#b4)"/>
<ellipse cx="468" cy="488" rx="38" ry="8" fill="#1d2023" opacity="0.8" transform="rotate(4 468 488)" filter="url(#b4)"/>
<path d="M444 474C450 466 458 461 468 460C482 460 496 468 509 478.5C500 481 488 483 474 483.5C462 483.5 452 480 444 474Z" fill="#2e3236"/>
<path d="M478 462.5C488 464.5 499 471 508 478.3C500 480.5 490 482.2 480 483C483 476 482 468 478 462.5Z" fill="#bcc0c4" filter="url(#b1)"/>
<circle cx="468" cy="471" r="11.3" fill="#070809"/>
<path d="M428 466C436 460 448 456.5 464 455.5C480 456 494 462 503 470C506 473 508.5 476 510.5 479" fill="none" stroke="#070809" stroke-width="5" stroke-linecap="round" filter="url(#b1)"/>
<path d="M436 461Q434.2 459 430.7 455.8M438.3 460.2Q436.8 457.5 433.5 453.6M438.3 460.2Q436 457.7 431.9 453.9M440.6 459.4Q437.7 455.9 433 451.1M442.9 458.6Q441.6 455.1 438.2 450.4M447.5 457.2Q445.9 453.5 442.2 448.5M447.5 457.2Q447.2 453.8 444.6 449.3M449.8 456.5Q448.6 453.1 445.3 448.5M452.2 456Q451.3 451.8 448.3 446.4M456.9 455.1Q457.4 450.8 455.5 445.2M456.9 455.1Q457.3 451.5 455.3 446.6M459.3 454.8Q460.1 451.7 458.4 447.4M464.2 454.4Q464.2 449.8 461.9 444M466.6 454.4Q467.5 450.6 466.1 445.6M466.6 454.4Q468 451.3 467.1 446.9M469 454.6Q469.7 449.5 468.1 443.3M471.4 454.8Q473.1 450.4 472.4 444.8M473.8 455Q475.6 450 475 443.8M476.2 455.4Q477.9 451.4 477.3 446.3M480.9 456.4Q483 452.2 482.8 446.7M483.3 457.1Q485.8 453.4 486 448.6M485.6 457.8Q487.8 455 487.7 451M485.6 457.8Q488.6 453.8 489.3 448.6M487.8 458.8Q491 456.1 492.1 452.1M492 461.2Q494.9 458 495.6 453.5M494 462.5Q497.3 459.8 498.6 456M496 463.9Q499.8 461.3 501.8 457.6M496 463.9Q500.8 460.1 503.8 455.2M498 465.2Q502.3 461.5 504.6 456.6M500 466.6Q503.7 464.4 505.8 461" stroke="#15181a" stroke-width="1.25" fill="none" stroke-linecap="round" opacity="0.9"/>
<path d="M444 475C452 481 464 484.5 476 484.3C488 484 500 481.5 510 479" fill="none" stroke="#1d2023" stroke-width="2" opacity=".85" filter="url(#b1)"/>
<path d="M448 479Q445.9 481.1 445.6 482M449.7 479.7Q447.5 482.7 447.5 484.6M453.1 481.1Q450.8 483.6 450.4 485M456.5 482.4Q454.6 485.3 455 487M458.2 483Q456.5 485.5 457.2 486.8M461.8 484Q460 486.6 460.6 488M465.4 484.5Q464 487.1 465 488.4M467.2 484.7Q466 487.2 467.1 488.5M470.9 485Q469.8 488.3 471 490.4M474.6 485.1Q473.2 488 474.3 489.6M476.4 485.1Q475.1 488.1 476.2 489.9M480.1 485Q479 487.6 480.3 488.9M483.7 484.7Q482.7 487.4 484.1 489M487.3 484.2Q486.6 487 488.3 488.7M491 483.6Q490.6 485.9 492.4 487.1M492.8 483.3Q492.4 485.7 494.2 486.9M496.4 482.6Q496.2 485.8 498.2 487.7M498.2 482.3Q498.3 484.8 500.4 486.1" stroke="#25282b" stroke-width="0.8" fill="none" stroke-linecap="round" opacity="0.7"/>
<ellipse cx="470" cy="466.2" rx="5.8" ry="2.4" fill="#f4f4f4" transform="rotate(-4 470 466.2)"/><ellipse cx="467" cy="475" rx="3.2" ry="2.6" fill="#e8e8e8"/>
<path d="M506 476C510 478 514 482 516 487C512 485 508 482 504 480Z" fill="#a8acb0" opacity="0.5" filter="url(#b1)"/>
<ellipse cx="606" cy="462" rx="31" ry="12" fill="#0e1012" opacity="0.92" transform="rotate(-4 606 462)" filter="url(#b4)"/>
<ellipse cx="608" cy="492" rx="25" ry="7" fill="#25282b" opacity="0.8" transform="rotate(3 608 492)" filter="url(#b4)"/>
<path d="M577 478C584 468 594 463.5 606 463.5C618 464 628 467 636 471C630 480 618 486 606 486.5C594 486 584 483 577 478Z" fill="#50545a"/>
<path d="M604 466C612 465.5 621 467 628 470.5C624 478 616 484 608 485.5C610 479 608.5 471 604 466Z" fill="#c0c4c8" filter="url(#b1)"/>
<circle cx="592.5" cy="475.5" r="11.6" fill="#070809"/>
<path d="M572 482C580 470 590 458 606 455C624 455 640 462 648 464L652 465.5C648 470 644 474 640 476C632 470 620 464.5 608 464.5C594 465 584 472 576 480Z" fill="#070809" filter="url(#b1)"/>
<path d="M582 466Q580.9 464.2 578 461.2M583.5 465.2Q582.3 462.8 579.2 459.2M586.3 463.5Q585.9 461.2 583.3 457.7M587.8 462.7Q587.3 460.2 584.7 456.5M592.2 460.4Q592.8 458.3 591 455M593.8 459.8Q594.1 457.8 592.2 454.7M596.9 458.8Q597.3 455.8 595.4 451.5M600.2 458.2Q601.5 455.5 600.5 451.7M601.9 458Q603.2 454.8 602 450.4M605.2 457.8Q607 454.5 606.4 450M606.9 457.8Q608.5 455 607.7 451M610.2 457.9Q611.9 455.9 611.3 452.8M613.5 458.2Q616.2 455.3 616.8 451.2M616.8 458.8Q619.8 455.6 620.6 451.2M620 459.7Q622.2 457.7 622.3 454.4M621.6 460.1Q624.6 457.5 625.6 453.6M624.8 461.1Q627.4 459.2 628.1 456.1M628 462Q631.4 459.8 632.9 456.4" stroke="#15181a" stroke-width="1.2" fill="none" stroke-linecap="round" opacity="0.9"/>
<path d="M628 462C636 458 644 458 650 462L652 466C648 472 642 476 636 478C632 474 630 468 628 462Z" fill="#0b0c0d" filter="url(#b1)"/>
<path d="M578 482C588 487 600 489.5 612 488C622 486.5 632 482 640 476" fill="none" stroke="#1d2023" stroke-width="2.2" opacity=".85" filter="url(#b1)"/>
<path d="M590 487Q588.3 489.4 588.9 490.6M593.1 487.7Q591.4 490 592 491M597.7 488.8Q596.1 491.7 596.9 493.3M602.3 489.7Q601.2 491.8 602.5 492.7M603.9 489.9Q602.6 492.8 603.7 494.6M610.1 489.7Q609.3 491.8 610.7 492.7M613.2 489.2Q612.4 491.5 613.9 492.5M617.8 488.1Q617 490.2 618.6 491.1M620.9 487.3Q620.8 490.1 622.9 491.7M626.8 485.3Q627.2 487.4 629.4 488.3M628.3 484.6Q628.8 487 631.2 488.2M634 482Q634.4 483.8 636.5 484.5" stroke="#25282b" stroke-width="0.8" fill="none" stroke-linecap="round" opacity="0.7"/>
<ellipse cx="595.6" cy="470.6" rx="5.4" ry="3.2" fill="#c8ccd0"/><circle cx="593" cy="480.2" r="1.7" fill="#e8e8e8"/>
<path d="M546.5 575.6C551 571 556 568.6 561 568.4C566 568.4 570 569.4 573 571C569 571.6 564 572.4 559 574C554 575.6 550 576.6 546.5 575.6Z" fill="#0e1012" opacity="0.95" filter="url(#b1)"/>
<path d="M574 486C576.5 495 579 503 582 511C585 518 588 524 591.5 530C595 536 597.5 541 599.5 547C601.5 552 602 555 601.6 558C601 563 599 567 596 570.7C593 575 589 577.5 585 578.6C582 579.6 578.6 580 575.6 580" fill="none" stroke="#3a3e42" stroke-width="2.2" opacity=".75" filter="url(#b1)"/>
<path d="M586 500L600 512L612 540L612 566L602 582L598 572L603 558L598 540L590 522Z" fill="#5a5e62" opacity="0.45" filter="url(#b3)"/>
<path d="M526 552C522.5 559 522.6 567 527 573C531 578 538 580.6 545 578" fill="none" stroke="#45494d" stroke-width="2.6" opacity=".7" filter="url(#b2)"/>
<ellipse cx="585" cy="550" rx="10" ry="10" fill="#d0d4d8" opacity="0.55" filter="url(#b4)"/>
<path d="M487 637.5C498 635 506 633 513 631C521 628 528 625 535 621.5C541 618 546 615.5 551 613.8C553.5 612 555.5 610.8 556.6 610.6C560 610 563.5 610.6 567.4 611.7C571 611.4 575 611.6 578.3 612.7C584 614.5 588 616 591.2 618C594 620 595.4 622.5 595.6 624.6C596 628 595.5 631 594.5 633.3C593.5 636 592 638 590.2 639.8C580 640.5 566 640.8 552 641C530 641 508 640 487 637.5Z" fill="#4a4e52" filter="url(#b1)"/>
<path d="M520 630C532 626 544 620 556 616C568 614 582 618 590 626C578 631 562 634 548 635C538 635.5 528 634 520 630Z" fill="#6a6e72" opacity="0.45" filter="url(#b2)"/>
<path d="M500 640C512 641.5 534 642.5 554 641.5C570 640.8 582 640 589 639C588 643 587 647 584.7 650.6C583 657 581 661 578.3 663.6C574 667.5 568 669.6 562 670C556 670 551 668.5 545.8 666.9C538 664 531 659.5 524 655C516 650 508 645 500 640Z" fill="#787c80" filter="url(#b1)"/>
<ellipse cx="553" cy="653" rx="26" ry="9" fill="#a4a8ac" opacity="0.9" transform="rotate(-4 553 653)" filter="url(#b4)"/>
<path d="M510 646C520 653 532 661 546 667C556 670 568 670 578 663.6C572 664 562 665 552 663C538 660 524 653 510 646Z" fill="#50545a" opacity="0.8" filter="url(#b2)"/>
<path d="M486.5 637.5C510 640 534 641 554 640.5C570 640 582 640 591 639.5" fill="none" stroke="#111315" stroke-width="2.8" stroke-linecap="round" filter="url(#b1)"/>
<ellipse cx="556" cy="652" rx="18" ry="5.5" fill="#d0d4d8" opacity=".75" transform="rotate(-3 556 652)" filter="url(#b2)"/>
<ellipse cx="566" cy="625" rx="10" ry="3" fill="#9a9ea2" opacity=".45" transform="rotate(-10 566 625)" filter="url(#b2)"/>
</g><g clip-path="url(#cut)"><g clip-path="url(#skinclip)"><rect x="320" y="270" width="340" height="550" filter="url(#grain)" opacity=".15" style="mix-blend-mode:overlay"/></g></g></svg></div>
<div id="panel" class="abs"></div>
<!-- everything below is positioned in page coords -->
<div class="abs" style="left:728px;top:54px;width:746px;height:24px;background:#424242;border-radius:5px 5px 0 0"></div>
<div class="ln" style="left:728px;top:78px;width:746px;height:2px"></div>
<div class="abs" style="left:728px;top:80px;width:746px;height:54px;background:#424242"></div>
<div class="abs" style="left:728px;top:80px;width:90px;height:56px;background:#535353"></div>
<div class="ln" style="left:818px;top:134px;width:656px;height:2px"></div>
<div class="ln" style="left:818px;top:80px;width:2px;height:56px"></div>
<div class="ln" style="left:934px;top:80px;width:2px;height:54px"></div>
<div class="ln" style="left:1069px;top:80px;width:2px;height:54px"></div>
<div class="ln" style="left:1199px;top:80px;width:2px;height:54px"></div>
<div class="ln" style="left:1353px;top:80px;width:2px;height:54px"></div>
<!-- title bar icons -->
<svg class="abs" style="left:736px;top:60px" width="16" height="16" viewBox="0 0 16 16"><path d="M2.5 2.5L13.5 13.5M13.5 2.5L2.5 13.5" stroke="#bdbdbd" stroke-width="2.2" fill="none"/></svg>
<svg class="abs" style="left:1444px;top:60px" width="20" height="14" viewBox="0 0 20 14"><path d="M8 2L3.6 7L8 12M16 2L11.6 7L16 12" stroke="#d0d0d0" stroke-width="1.6" fill="none"/></svg>
<!-- tabs text -->
<span class="t b" id="tx0" style="left:745px;top:97.6px;color:#ececec;letter-spacing:0.33px">Слои</span>
<span class="t b" id="tx1" style="left:835.8px;top:97.6px;color:#b4b4b4;letter-spacing:-0.16px">Каналы</span>
<span class="t b" id="tx2" style="left:952.8px;top:97.6px;color:#b4b4b4;letter-spacing:-0.44px">Свойства</span>
<span class="t b" id="tx3" style="left:1087px;top:97.6px;color:#b4b4b4;letter-spacing:0.33px">Контуры</span>
<span class="t b" id="tx4" style="left:1217px;top:97.6px;color:#b4b4b4;letter-spacing:0.7px">Коррекция</span>
<!-- menu icon -->
<div class="abs" style="left:1442px;top:100px;width:20px;height:2px;background:#c4c4c4;box-shadow:0 4px 0 #c4c4c4,0 8px 0 #c4c4c4,0 12px 0 #c4c4c4"></div>
<!-- row dividers -->
<div class="ln" style="left:728px;top:198px;width:746px;height:2px"></div>
<div class="ln" style="left:728px;top:252px;width:746px;height:2px"></div>
<!-- filter row -->
<div class="dd" style="left:734px;top:152px;width:256px;height:38px"></div>
<svg class="abs" style="left:750px;top:158px" width="26" height="26" viewBox="0 0 26 26"><circle cx="15.2" cy="10.6" r="6" stroke="#d6d6d6" stroke-width="2.2" fill="none"/><path d="M10.6 15.2L4.2 21.6" stroke="#d6d6d6" stroke-width="3.2" stroke-linecap="round"/></svg>
<span class="t" id="tx5" style="left:777px;top:159px;color:#e8e8e8;letter-spacing:0.8px">Вид</span>
<svg class="abs" style="left:967px;top:166px" width="16" height="12" viewBox="0 0 16 12"><path d="M2 2.6L8 8.8L14 2.6" stroke="#dcdcdc" stroke-width="1.9" fill="none"/></svg>
<!-- blend row -->
<div class="dd" style="left:734px;top:206px;width:392px;height:38px"></div>
<span class="t" id="tx6" style="left:749px;top:214px;color:#e8e8e8;letter-spacing:0.17px">Обычные</span>
<svg class="abs" style="left:1103px;top:220px" width="16" height="12" viewBox="0 0 16 12"><path d="M2 2.6L8 8.8L14 2.6" stroke="#dcdcdc" stroke-width="1.9" fill="none"/></svg>
<span class="t" id="tx7" style="left:1131px;top:214px;color:#cfcfcf;letter-spacing:0.79px">Непрозрачность:</span>
<div class="dd" style="left:1310px;top:206px;width:104px;height:38px"></div>
<div class="abs" style="left:1381px;top:208px;width:2px;height:34px;background:#656565"></div>
<span class="t" id="tx8" style="left:1317px;top:214px;color:#e8e8e8;letter-spacing:-0.63px">100%</span>
<svg class="abs" style="left:1389px;top:220px" width="16" height="12" viewBox="0 0 16 12"><path d="M2 2.6L8 8.8L14 2.6" stroke="#dcdcdc" stroke-width="1.9" fill="none"/></svg>
<!-- lock row -->
<span class="t" id="tx9" style="left:738px;top:268.3px;color:#cfcfcf;letter-spacing:0.61px">Закрепить:</span>
<span class="t" id="tx10" style="left:1217.4px;top:268.3px;color:#cfcfcf;letter-spacing:0.27px">Заливка:</span>
<div class="dd" style="left:1310px;top:260px;width:104px;height:38px"></div>
<div class="abs" style="left:1381px;top:262px;width:2px;height:34px;background:#656565"></div>
<span class="t" id="tx11" style="left:1317px;top:268.3px;color:#e8e8e8;letter-spacing:-0.63px">100%</span>
<svg class="abs" style="left:1389px;top:274px" width="16" height="12" viewBox="0 0 16 12"><path d="M2 2.6L8 8.8L14 2.6" stroke="#dcdcdc" stroke-width="1.9" fill="none"/></svg>
<!-- filter icons -->
<svg class="abs" style="left:1076px;top:152px" width="240" height="40" viewBox="0 0 240 40" fill="none" stroke="#dedede" stroke-width="1.7">
 <rect x="7.9" y="9.9" width="22.3" height="18.4"/>
 <path d="M11 24.9L15.8 15.6L19.6 21.6L23.2 17.5L27.2 24.9Z" fill="#dedede" stroke="none"/>
 <circle cx="66.5" cy="18.4" r="9.6"/>
 <path d="M59.7 25.2A9.6 9.6 0 0 0 73.3 11.6Z" fill="#dedede" stroke="none"/>
 <path d="M106.4 14.6V10.6H122.9V14.6M114.6 10.6V27.6M110.2 27.7H119.2" stroke-width="2.8" stroke-linecap="round" stroke-linejoin="round"/>
 <path d="M155 13.6V24.6M171 13.6V24.6M157.6 11H168.4M157.6 27H168.4" />
 <rect x="152.8" y="8.8" width="4.4" height="4.4"/><rect x="168.8" y="8.8" width="4.4" height="4.4"/><rect x="152.8" y="24.8" width="4.4" height="4.4"/><rect x="168.8" y="24.8" width="4.4" height="4.4"/>
 <path d="M207.6 19V8.9H216.2L221 13.8V28H214.5M216 9V14H221" />
 <rect x="202.2" y="19.2" width="11.8" height="11.6" fill="#dedede" stroke="none"/>
</svg>
<!-- toggle -->
<div class="abs" style="left:1394px;top:152px;width:20px;height:38px;box-sizing:border-box;border:2px solid #656565;border-radius:10px;background:#424242"></div>
<div class="abs" style="left:1396px;top:153.6px;width:16px;height:16px;border-radius:8px;background:#dedede"></div>
<!-- lock icons -->
<svg class="abs" style="left:856px;top:260px" width="220" height="40" viewBox="0 0 220 40" fill="#dedede" stroke="none">
 <!-- checker -->
 <rect x="7" y="9" width="22" height="22"/>
 <g fill="#535353"><rect x="9" y="11" width="6" height="6"/><rect x="21" y="11" width="6" height="6"/><rect x="15" y="17" width="6" height="6"/><rect x="9" y="23" width="6" height="6"/><rect x="21" y="23" width="6" height="6"/></g>
 <!-- brush -->
 <path d="M75.9 6.8C77.2 7.6 76.6 9.6 75.7 11.2L66.4 24.2L62.3 21.6L71.6 9.2C72.9 7.5 74.7 6.1 75.9 6.8Z"/>
 <path d="M61.2 22.6L65.3 25.3C65.6 29.5 62.6 33 57.6 33.6C54.6 34 52 33.9 50.4 33.6C53.8 32.2 53.4 29.6 54.4 26.8C55.5 23.8 58.6 22.1 61.2 22.6Z"/>
 <!-- move -->
 <path d="M105 7.2L110 12.8H106.1V18.9H112.2V15L117.8 20L112.2 25V21.1H106.1V27.2H110L105 32.8L100 27.2H103.9V21.1H97.8V25L92.2 20L97.8 15V18.9H103.9V12.8H100Z"/>
 <!-- artboard -->
 <path d="M141.6 11.8H153.6L158.8 17V25.2H141.6Z" fill="none" stroke="#dedede" stroke-width="1.8"/>
 <path d="M153 11.8V17.6H158.8" fill="none" stroke="#dedede" stroke-width="1.8"/>
 <g><rect x="140.2" y="6.8" width="2" height="2.2"/><rect x="158" y="6.8" width="2" height="2.2"/><rect x="140.2" y="28" width="2" height="2.2"/><rect x="158" y="28" width="2" height="2.2"/>
 <rect x="136" y="10.2" width="3" height="2"/><rect x="161" y="10.2" width="3" height="2"/><rect x="136" y="24.4" width="3" height="2"/><rect x="161" y="24.4" width="3" height="2"/></g>
 <!-- lock -->
 <path d="M188.9 16V13.6A5.1 5.1 0 0 1 199.1 13.6V16" fill="none" stroke="#dedede" stroke-width="2.2"/>
 <rect x="184.1" y="15.2" width="19.9" height="15.6" rx="1.8"/>
 <circle cx="194" cy="22.4" r="2.3" fill="#535353"/>
</svg>

<!-- layers list background -->
<div class="abs" style="left:728px;top:308px;width:746px;height:572px;background:#4a4a4a"></div>
<!-- row 1 -->
<div class="abs" style="left:728px;top:310px;width:60px;height:171px;background:#535353"></div>
<div class="abs" style="left:790px;top:310px;width:654px;height:171px;background:#6b6b6b"></div>
<!-- row 2 -->
<div class="abs" style="left:728px;top:484px;width:60px;height:172px;background:#535353"></div>
<div class="abs" style="left:790px;top:484px;width:654px;height:172px;background:#535353"></div>
<!-- row 3 -->
<div class="abs" style="left:728px;top:658px;width:60px;height:174px;background:#535353"></div>
<div class="abs" style="left:790px;top:658px;width:654px;height:174px;background:#535353"></div>
<!-- eye -->
<svg class="abs" style="left:744px;top:386px" width="30" height="22" viewBox="0 0 30 22"><path d="M1.6 10.6C5.2 5.6 9.8 2.9 14.6 2.9C19.4 2.9 24 5.6 27.4 10.6C24 15.5 19.4 18.2 14.6 18.2C9.8 18.2 5.2 15.5 1.6 10.6Z" fill="#dedede"/><circle cx="14.5" cy="10.5" r="5.4" fill="#535353"/><rect x="15" y="8" width="2.2" height="2.2" fill="#dedede"/></svg>
<!-- hidden-eye boxes -->
<div class="abs" style="left:745px;top:559px;width:23px;height:23px;box-sizing:border-box;border:1.5px solid #474747"></div>
<div class="abs" style="left:745px;top:733px;width:23px;height:23px;box-sizing:border-box;border:1.5px solid #474747"></div>
<!-- thumb 1 frame -->
<div class="abs" style="left:796px;top:316px;width:138px;height:160px;background:#333"></div>
<div class="abs" id="th1" style="left:798px;top:318px;width:134px;height:156px;background-color:#fff;background-image:conic-gradient(#ccc 0 25%,#fff 0 50%,#ccc 0 75%,#fff 0);background-size:8px 8px;overflow:hidden"><svg style="position:absolute;left:0;top:0" width="134" height="156" viewBox="98 167.5 554 643.5" preserveAspectRatio="none"><use href="#faceg"/></svg></div>
<svg class="abs" style="left:790px;top:310px" width="150" height="172" viewBox="0 0 150 172" fill="none" stroke="#fff" stroke-width="2"><path d="M3 58V3H50M100 3H147V58M147 116V169H100M50 169H3V116"/></svg>
<!-- thumb 2 -->
<div class="abs" style="left:796px;top:490px;width:146px;height:160px;background:#383838"></div>
<div class="abs" id="th2" style="left:798px;top:492px;width:142px;height:156px;background:#70757a;overflow:hidden"><svg style="position:absolute;left:0;top:0" width="142" height="156" viewBox="70 114 730 802" preserveAspectRatio="none">
<defs><linearGradient id="bgg" x1="0" y1="0" x2="1" y2="1"><stop offset="0" stop-color="#6a6f74"/><stop offset=".55" stop-color="#7a7f84"/><stop offset="1" stop-color="#62676c"/></linearGradient>
<linearGradient id="bdg" x1="200" y1="0" x2="680" y2="0" gradientUnits="userSpaceOnUse"><stop offset="0" stop-color="#6e7276"/><stop offset=".35" stop-color="#8a8e92"/><stop offset=".62" stop-color="#74787c"/><stop offset="1" stop-color="#5a5e62"/></linearGradient></defs>
<g id="fullg">
<rect x="70" y="114" width="730" height="802" fill="url(#bgg)"/>
<path d="M324 640C325 656 333.2 709.3 330 736C326.8 762.7 315 781 305 800C295 819 287.2 830.5 270 850C252.8 869.5 213.3 905.8 202 917C281.7 917 600.3 917 680 917C673.3 913.5 655 903.5 640 896C625 888.5 605.3 881.3 590 872C574.7 862.7 559 852 548 840C537 828 530 815.3 524 800C518 784.7 499.3 764.7 512 748C524.7 731.3 585.3 708 600 700C600 690 600 650 600 640C554 640 370 640 324 640Z" fill="url(#bdg)"/>
<path d="M320 640L345 715L500 810L512 752L530 830L500 870L380 850L330 800Z" fill="#2e3236" opacity=".85" filter="url(#b14)"/>
<path d="M604 892L626 890L650 917L612 917Z" fill="#d0d4d8"/>
<path d="M512 746C517.3 736 538.3 737.3 548 740C557.7 742.7 564 752 570 762C576 772 580.3 785.3 584 800C587.7 814.7 588.3 835.8 592 850C595.7 864.2 605.3 873.8 606 885C606.7 896.2 597.7 911.7 596 917C582.3 917 527.7 917 514 917C515.3 907.5 521.7 879.5 522 860C522.3 840.5 517.7 819 516 800C514.3 781 506.7 756 512 746Z" fill="#0e1012"/>
<path d="M411 149C426.3 149 452.5 152.3 470 156C487.5 159.7 501 165.3 516 171C531 176.7 547 182.8 560 190C573 197.2 583.7 204.7 594 214C604.3 223.3 614.7 234.3 622 246C629.3 257.7 633.7 270 638 284C642.3 298 645.8 317 648 330C650.2 343 652.3 343.7 651 362C649.7 380.3 641.8 427 640 440C633.3 416.7 606.7 323.3 600 300C571.7 300 458.3 300 430 300C413.3 333.3 346.7 466.7 330 500C329 519 324 580.7 324 614C324 647.3 329.3 679.7 330 700C330.7 720.3 331.3 721 328 736C324.7 751 316.5 776.8 310 790C303.5 803.2 299 801.7 289 815C279 828.3 264.5 853 250 870C235.5 887 210 909.2 202 917C180 917 92 917 70 917C70 897.5 69.7 824.3 70 800C70.3 775.7 70.3 787.7 72 771C73.7 754.3 77.2 721.7 80 700C82.8 678.3 85 659.3 89 641C93 622.7 98.2 607.5 104 590C109.8 572.5 116.7 551.8 124 536C131.3 520.2 140.8 508 148 495C155.2 482 162 472.2 167 458C172 443.8 175 426 178 410C181 394 182 378.7 185 362C188 345.3 191.7 326 196 310C200.3 294 204 280 211 266C218 252 227.8 237.5 238 226C248.2 214.5 260.8 204.7 272 197C283.2 189.3 293.3 184.3 305 180C316.7 175.7 329.8 175 342 171C354.2 167 366.5 159.7 378 156C389.5 152.3 395.7 149 411 149Z" fill="#0c0e10"/>
<g fill="none" stroke-linecap="round"><path d="M200 741.9C196.6 752.6 188.3 785 179.6 806C170.9 827.1 156.9 847.8 147.8 868.4C138.7 889.1 128.6 919.7 124.8 930" stroke="#6a6f73" stroke-width="5.5" opacity="0.44"/>
<path d="M278 642.3C277.8 652.7 277 683.8 276.8 704.5C276.6 725.2 276.9 756.3 276.9 766.7" stroke="#4a4f53" stroke-width="3.6" opacity="0.39"/>
<path d="M277.2 767.1C272.3 776.6 258.1 805.8 247.6 824.2C237.2 842.7 224.9 860.2 214.5 877.9C204.2 895.5 190.5 921.3 185.7 930" stroke="#3d4246" stroke-width="5.1" opacity="0.64"/>
<path d="M252 562.3C251.7 572.9 251.5 604.5 250.5 625.7C249.5 646.9 249.3 668.2 246.1 689.6C242.8 711 233.4 743.2 230.9 753.9" stroke="#7b8084" stroke-width="4.6" opacity="0.70"/>
<path d="M183.7 598.4C182.2 609.5 177.5 642.7 174.5 665.1C171.5 687.6 170 710.5 165.6 733C161.2 755.4 154.4 777.6 148.1 799.6C141.7 821.6 130.8 854.2 127.4 865.1" stroke="#4a4f53" stroke-width="2.5" opacity="0.39"/>
<path d="M266 565.5C263.4 576 254.5 607.5 250.3 628.6C246.2 649.7 243.1 670.9 241.1 692.2C239.1 713.5 241.3 735.5 238.4 756.2C235.5 776.9 226.1 806.3 223.6 816.3" stroke="#9da2a6" stroke-width="5.2" opacity="0.58"/>
<path d="M153.2 503C148.3 514.3 131.7 548.1 123.9 571.1C116.1 594 111.2 617.2 106.5 640.7C101.7 664.2 98.8 688 95.3 712C91.8 736 87 772.4 85.3 784.5" stroke="#4a4f53" stroke-width="2.7" opacity="0.36"/>
<path d="M277.5 568.5C275.9 579 272.5 610.3 267.4 631.4C262.4 652.4 252.9 673.5 247.4 694.7C241.8 715.8 238 737.8 234.2 758.3C230.4 778.8 229 798.5 224.6 817.9C220.1 837.3 210.5 865.1 207.6 874.6" stroke="#4a4f53" stroke-width="5.9" opacity="0.53"/>
<path d="M119.7 644.3C118.3 656.1 115.5 691.3 111.2 715C107 738.8 99.9 762.8 94.2 786.7C88.4 810.6 79.6 846.4 76.7 858.4" stroke="#5a5f63" stroke-width="3.6" opacity="0.36"/>
<path d="M217.3 541C216.1 551.8 213 584.2 209.7 606.1C206.5 627.9 199.7 661 197.6 672" stroke="#5a5f63" stroke-width="4.1" opacity="0.57"/>
<path d="M266.3 631.1C263.6 641.7 255.2 673.3 250.1 694.5C245 715.6 240.5 737.6 235.8 758.1C231.1 778.7 227.2 798.3 221.9 817.7C216.5 837.1 211.9 855.8 203.7 874.5C195.4 893.2 177.6 920.7 172.4 930" stroke="#3d4246" stroke-width="3.8" opacity="0.53"/>
<path d="M330.2 719.8C326.5 729.8 316.7 761 307.8 779.9C298.9 798.8 282.1 824.5 277 833.4" stroke="#7b8084" stroke-width="3.2" opacity="0.80"/>
<path d="M240.9 623.7C240.1 634.4 238.5 666.4 236.5 687.9C234.5 709.3 233.8 731.5 228.7 752.4C223.7 773.4 210.2 803.5 206.5 813.7" stroke="#4a4f53" stroke-width="3.4" opacity="0.70"/>
<path d="M210.3 532.9C206.8 543.8 196.1 576.5 189.5 598.6C182.8 620.7 175.6 642.9 170.5 665.4C165.3 687.8 160.5 721.8 158.5 733.1" stroke="#6a6f73" stroke-width="4.7" opacity="0.36"/>
<path d="M175.1 735.9C171.9 746.9 162.6 780.1 155.9 801.8C149.2 823.5 138.3 855.5 134.8 866.2" stroke="#4a4f53" stroke-width="3.1" opacity="0.42"/>
<path d="M308.3 652C309 662.1 313.7 692.7 312.1 713.1C310.5 733.5 306.5 754.8 298.5 774.1C290.6 793.5 270.2 820.1 264.5 829.3" stroke="#3d4246" stroke-width="4.7" opacity="0.60"/>
<path d="M271.9 568.7C269.6 579.2 261.9 610.5 258 631.6C254.1 652.6 250.7 673.7 248.6 694.9C246.4 716 248.1 737.9 244.9 758.5C241.8 779 237.2 798.6 229.8 818C222.3 837.3 205.2 865.2 200.3 874.6" stroke="#5a5f63" stroke-width="2.9" opacity="0.37"/>
<path d="M310.6 717.6C309.1 727.6 305.8 758.9 301.5 777.9C297.2 797 292.2 814.7 284.7 832C277.1 849.3 260.8 873.6 256.1 881.9" stroke="#6a6f73" stroke-width="4.2" opacity="0.58"/>
<path d="M298.3 775.6C293.4 784.7 278.5 812.7 268.9 830.3C259.4 847.9 245.5 872.6 240.8 881" stroke="#9da2a6" stroke-width="3.2" opacity="0.76"/>
<path d="M282.2 637.3C280.3 647.7 275.8 679 270.8 700C265.8 720.9 255.3 752.4 252.2 762.8" stroke="#5a5f63" stroke-width="3.1" opacity="0.52"/>
<path d="M210.8 750.3C208.3 760.6 200.7 791.9 195.9 812.1C191.1 832.4 188.1 851.9 181.8 871.6C175.5 891.2 161.9 920.3 157.9 930" stroke="#3d4246" stroke-width="5.1" opacity="0.58"/>
<path d="M316.3 776.8C310.8 785.9 296.5 813.8 283.1 831.2C269.6 848.7 249.9 865 235.6 881.5C221.4 898 203.7 921.9 197.3 930" stroke="#3d4246" stroke-width="3.6" opacity="0.37"/>
<path d="M236.3 687.6C233.5 698.3 225.5 731.2 219.5 752.2C213.6 773.2 206.6 793.5 200.6 813.5C194.6 833.5 186.3 862.5 183.4 872.3" stroke="#7b8084" stroke-width="6.0" opacity="0.38"/>
<path d="M229.8 618.6C230.4 629.4 234.8 661.6 233.2 683.3C231.6 704.9 227.9 727.2 220.3 748.5C212.7 769.8 197.8 790.4 187.7 810.8C177.7 831.2 164.6 860.9 160 870.9" stroke="#9da2a6" stroke-width="2.8" opacity="0.56"/>
<path d="M154.2 507.8C152.3 519 147.1 552.6 143 575.5C138.9 598.3 136 621.3 129.5 644.7C122.9 668 111.6 691.7 103.7 715.4C95.7 739.1 85.9 763.1 81.8 787C77.7 810.8 79.5 846.6 79 858.5" stroke="#6a6f73" stroke-width="2.6" opacity="0.65"/>
<path d="M214.8 537.9C213.1 548.8 208.7 581.3 204.3 603.2C199.9 625.2 191 658.5 188.4 669.5" stroke="#9da2a6" stroke-width="5.6" opacity="0.68"/>
<path d="M181.5 737.3C177.2 748.3 163.2 781.2 155.3 802.8C147.3 824.4 139 845.5 134 866.7C128.9 887.9 126.5 919.5 125 930" stroke="#6a6f73" stroke-width="2.8" opacity="0.69"/>
<path d="M121.4 571.1C119.2 582.7 111.7 617.2 107.9 640.7C104.1 664.2 100.2 700.1 98.6 712" stroke="#4a4f53" stroke-width="5.2" opacity="0.65"/>
<path d="M225.8 613.1C224.3 624 221.8 656.5 217 678.3C212.2 700.2 204.3 722.7 196.9 744.3C189.5 765.8 176.6 797.2 172.5 807.8" stroke="#6a6f73" stroke-width="3.1" opacity="0.76"/>
<path d="M241.1 692.6C241.3 703.3 244.7 735.9 242.5 756.5C240.2 777.2 235.6 797.1 227.4 816.6C219.2 836.2 199.1 864.4 193.4 873.9" stroke="#3d4246" stroke-width="3.4" opacity="0.64"/>
<path d="M284.8 642.3C285.2 652.7 288.8 683.7 287.3 704.5C285.8 725.2 282.9 746.8 275.8 766.7C268.6 786.6 254.8 805.4 244.2 823.9C233.6 842.4 221.9 860 212.3 877.7C202.7 895.4 190.7 921.3 186.4 930" stroke="#7b8084" stroke-width="4.5" opacity="0.49"/>
<path d="M173.4 513.6C167.9 524.8 148.1 558.2 140.1 580.9C132.2 603.5 128 638 125.5 649.5" stroke="#9da2a6" stroke-width="5.4" opacity="0.40"/>
<path d="M191.1 743.2C186.8 753.8 171.6 786.1 165.6 807C159.5 828 157.9 848.4 154.9 868.9C151.9 889.4 148.8 919.8 147.6 930" stroke="#3d4246" stroke-width="3.6" opacity="0.73"/>
<path d="M318.3 598.2C318.3 608.3 318.3 638.6 318.5 658.7C318.7 678.9 319.9 699.1 319.4 719.2C318.9 739.3 320.5 760.3 315.5 779.3C310.5 798.3 293.8 824.1 289.4 833" stroke="#6a6f73" stroke-width="2.6" opacity="0.67"/>
<path d="M256.6 557.1C253.5 567.7 243.9 599.5 237.7 620.8C231.5 642.2 223.6 663.7 219.5 685.3C215.3 706.8 214 739.4 212.9 750.2" stroke="#4a4f53" stroke-width="4.1" opacity="0.36"/>
<path d="M296.2 583C295.7 593.3 295.2 624.1 293.2 644.7C291.2 665.3 285.7 696.3 284.2 706.6" stroke="#4a4f53" stroke-width="2.9" opacity="0.59"/>
<path d="M250.7 627.2C249.1 637.9 243.7 669.7 240.8 691C237.9 712.3 237.3 734.4 233.2 755.1C229.1 775.9 219.2 805.5 216.4 815.6" stroke="#4a4f53" stroke-width="3.4" opacity="0.67"/>
<path d="M271.9 637.8C271.6 648.3 271.4 679.6 270.1 700.5C268.7 721.4 269 743.1 264 763.3C258.9 783.4 249.3 802.6 239.9 821.5C230.4 840.3 212.6 867.3 207.1 876.4" stroke="#9da2a6" stroke-width="4.4" opacity="0.78"/>
<path d="M229.5 614.4C227.3 625.2 221.9 657.7 216.6 679.5C211.2 701.3 200.6 734.3 197.4 745.3" stroke="#4a4f53" stroke-width="5.8" opacity="0.68"/>
<path d="M174.7 513C169.2 524.2 150.1 557.6 141.5 580.3C132.9 602.9 127 625.8 123.2 649C119.3 672.1 120.1 695.6 118.3 719.1C116.5 742.5 116 766.2 112.4 789.6C108.7 813.1 99.1 848.2 96.5 859.9" stroke="#6a6f73" stroke-width="4.5" opacity="0.75"/>
<path d="M291 641.7C290.3 652 290.9 683.1 286.9 703.9C282.9 724.7 270.4 755.8 267.1 766.2" stroke="#3d4246" stroke-width="5.5" opacity="0.71"/>
<path d="M294 775.2C290.2 784.4 279.1 812.5 270.8 830.1C262.6 847.7 248.9 872.4 244.5 880.9" stroke="#9da2a6" stroke-width="4.4" opacity="0.71"/>
<path d="M182.7 664.7C178.4 676 165 710.1 156.8 732.5C148.5 755 138.3 777.3 133.3 799.3C128.2 821.4 127.9 843.2 126.5 864.9C125.2 886.7 125.5 919.2 125.3 930" stroke="#5a5f63" stroke-width="2.6" opacity="0.50"/>
<path d="M209.7 607.1C205.6 618.1 191 650.9 185.3 673C179.6 695.1 177.2 728.6 175.5 739.7" stroke="#4a4f53" stroke-width="5.3" opacity="0.43"/>
<path d="M190.6 599.2C189.1 610.3 185.5 643.5 181.2 665.9C176.9 688.3 171.3 711.2 165 733.6C158.8 755.9 149.9 778.1 143.8 800.1C137.7 822 132.3 843.7 128.3 865.3C124.2 887 121 919.2 119.5 930" stroke="#4a4f53" stroke-width="4.5" opacity="0.66"/>
<path d="M270.1 638.1C269.3 648.5 266.3 679.8 265.3 700.7C264.3 721.6 267.5 743.3 264.2 763.5C260.9 783.6 254.5 802.8 245.6 821.6C236.7 840.4 216.6 867.3 210.8 876.5" stroke="#9da2a6" stroke-width="4.8" opacity="0.78"/>
<path d="M293.7 648.4C294.5 658.7 298.4 689.4 298.4 709.9C298.4 730.4 299.5 751.8 293.7 771.4C287.9 791 275.1 809.3 263.6 827.3C252.1 845.3 231.2 870.8 224.7 879.5" stroke="#6a6f73" stroke-width="4.2" opacity="0.53"/>
<path d="M169.6 511.4C166.8 522.7 159.4 556.1 152.7 578.8C146.1 601.5 137.6 624.5 129.7 647.7C121.9 670.9 111.6 694.4 105.6 718C99.7 741.5 95.9 765.2 94.1 788.8C92.3 812.4 94.8 836 94.7 859.5C94.6 883 93.8 918.2 93.6 930" stroke="#4a4f53" stroke-width="4.4" opacity="0.80"/>
<path d="M107.2 718.5C105.9 730.3 100.8 765.7 99.3 789.2C97.8 812.8 99.3 836.2 98.2 859.7C97 883.1 93.3 918.3 92.3 930" stroke="#4a4f53" stroke-width="3.4" opacity="0.56"/>
<path d="M117.1 718.9C116.5 730.6 116.7 766 113.4 789.5C110.1 813 103.1 836.4 97.3 859.8C91.6 883.2 82.1 918.3 79 930" stroke="#5a5f63" stroke-width="3.2" opacity="0.63"/>
<path d="M314.7 592.5C315.5 602.7 320.9 633.2 319.6 653.5C318.4 673.8 309.3 704.3 307.2 714.5" stroke="#7b8084" stroke-width="3.0" opacity="0.36"/>
<path d="M155.3 730C151.8 741.2 140.7 775.1 134.5 797.5C128.2 819.8 120.5 852.9 117.7 864" stroke="#4a4f53" stroke-width="5.1" opacity="0.41"/>
<path d="M199.2 746C197.2 756.5 192 788.3 187.2 809C182.3 829.7 172.9 859.8 170.1 870" stroke="#4a4f53" stroke-width="4.7" opacity="0.72"/>
<path d="M237 625C236.9 635.7 236.6 667.6 236.6 689C236.6 710.4 240.6 732.5 237 753.4C233.4 774.3 218.8 804.2 215.1 814.4" stroke="#6a6f73" stroke-width="4.6" opacity="0.74"/>
<path d="M166.6 589.7C165.8 601 165.1 634.7 161.8 657.4C158.4 680.2 153.1 703.4 146.3 726.3C139.5 749.2 128.1 772.1 121 794.9C114 817.6 106.9 851.3 104 862.6" stroke="#6a6f73" stroke-width="3.6" opacity="0.77"/>
<path d="M177.7 588.4C174 599.7 164.1 633.4 155.7 656.2C147.3 679.1 134.6 702.3 127.4 725.3C120.2 748.3 114.9 782.7 112.4 794.1" stroke="#7b8084" stroke-width="5.0" opacity="0.47"/>
<path d="M144.2 577.2C141.8 588.7 135.7 623 129.8 646.3C123.9 669.5 115.3 693.1 108.8 716.7C102.2 740.4 93.4 776.1 90.3 788" stroke="#4a4f53" stroke-width="4.7" opacity="0.71"/>
<path d="M121.5 646.2C120 657.9 116.3 693.1 112.8 716.7C109.2 740.3 102.5 776 100.4 787.9" stroke="#3d4246" stroke-width="4.3" opacity="0.69"/>
<path d="M230.4 550.3C228.9 561 223.6 593 221.5 614.6C219.3 636.2 220 657.9 217.5 679.7C215 701.5 212.5 723.9 206.6 745.4C200.8 766.9 190.6 787.9 182.4 808.6C174.3 829.3 162 859.6 157.9 869.8" stroke="#5a5f63" stroke-width="2.6" opacity="0.69"/>
<path d="M252.5 624.8C251.5 635.5 250.9 667.4 246.5 688.8C242.1 710.2 234 732.3 226.1 753.2C218.1 774.2 203.2 804.1 198.6 814.2" stroke="#5a5f63" stroke-width="3.2" opacity="0.73"/>
<path d="M574.5 796.3C573.9 804.7 570.7 828 570.9 846.3C571.1 864.7 570.3 888 575.7 906.3C581.1 924.7 598.7 948 603.3 956.3" stroke="#5a5f63" stroke-width="2.2" opacity="0.44"/>
<path d="M541.5 771.3C541.6 779.7 541.1 803 541.8 821.3C542.5 839.7 543.4 863 545.7 881.3C548 899.7 554.1 923 555.8 931.3" stroke="#2a2e32" stroke-width="3.4" opacity="0.74"/>
<path d="M530 772.7C531 781 534.7 804.4 536.1 822.7C537.4 841 537.4 864.4 538.1 882.7C538.7 901 539.6 924.4 539.8 932.7" stroke="#3d4246" stroke-width="2.2" opacity="0.72"/>
<path d="M537.8 754.2C539.1 762.6 542.5 785.9 545.4 804.2C548.4 822.6 552 845.9 555.3 864.2C558.7 882.6 563.8 905.9 565.5 914.2" stroke="#5a5f63" stroke-width="3.1" opacity="0.48"/>
<path d="M552.2 767C553.2 775.4 557.7 798.7 558.6 817C559.5 835.4 557.5 858.7 557.7 877C558 895.4 559.7 918.7 560.1 927" stroke="#2a2e32" stroke-width="3.6" opacity="0.73"/>
<path d="M542.3 794.8C543.7 803.2 548.2 826.5 550.5 844.8C552.8 863.2 553.5 886.5 556.2 904.8C558.9 923.2 564.8 946.5 566.5 954.8" stroke="#3d4246" stroke-width="2.8" opacity="0.69"/>
<path d="M523.9 767.1C524.2 775.4 525.9 798.8 525.9 817.1C525.9 835.4 522.1 858.8 524.1 877.1C526.1 895.4 535.5 918.8 537.8 927.1" stroke="#2a2e32" stroke-width="3.8" opacity="0.42"/>
<path d="M535 798.1C534.9 806.4 533.8 829.7 534.5 848.1C535.2 866.4 536.7 889.7 539.3 908.1C541.9 926.4 548.4 949.7 550.2 958.1" stroke="#3d4246" stroke-width="3.1" opacity="0.56"/>
<path d="M575 782.1C575.9 790.4 578 813.8 580.5 832.1C583.1 850.4 586.2 873.8 590.2 892.1C594.2 910.4 602.1 933.8 604.5 942.1" stroke="#3d4246" stroke-width="2.2" opacity="0.44"/>
<path d="M533 772.2C533.5 780.5 533.1 803.8 535.6 822.2C538.1 840.5 545.2 863.8 548.3 882.2C551.4 900.5 553.2 923.8 554.2 932.2" stroke="#3d4246" stroke-width="2.2" opacity="0.50"/></g>
<path d="M289 815C330 850 380 890 420 916" stroke="#c8ccd0" stroke-width="4" fill="none"/>
<use href="#faceg"/>
</g></svg></div>
<!-- thumb 3 -->
<div class="abs" style="left:796px;top:664px;width:146px;height:160px;background:#383838"></div>
<div class="abs" id="th3" style="left:798px;top:666px;width:142px;height:156px;background:#70757a;overflow:hidden"><svg style="position:absolute;left:0;top:0" width="142" height="156" viewBox="70 114 730 802" preserveAspectRatio="none"><use href="#fullg"/></svg></div>
<!-- names -->
<span class="t" id="tx12" style="left:950.2px;top:387.8px;color:#f0f0f0;letter-spacing:-0.62px">Слой 1</span>
<span class="t" id="tx13" style="left:957.2px;top:562px;color:#f0f0f0;letter-spacing:0.46px">MyPhotoshop.ru копия</span>
<span class="t" id="tx14" style="left:957.2px;top:736px;color:#f0f0f0;letter-spacing:0.5px">MyPhotoshop.ru</span>

<div class="abs" style="left:728px;top:880px;width:746px;height:2px;background:#414141"></div>
<div class="abs" style="left:728px;top:882px;width:746px;height:48px;background:#535353"></div>
<div class="abs" style="left:728px;top:930px;width:746px;height:4px;background:#3a3a3a"></div>
<div class="abs" style="left:728px;top:934px;width:746px;height:12px;background:#535353"></div>
<!-- grip -->
<div class="abs" style="left:1082px;top:934px;width:40px;height:8px;background:repeating-linear-gradient(90deg,#474747 0 2px,#535353 2px 4px)"></div>
<svg class="abs" style="left:1056px;top:884px" width="380" height="50" viewBox="0 0 380 50" fill="none" stroke="#dedede" stroke-width="1.8">
 <!-- link -->
 <g stroke="#8c8c8c" stroke-width="2"><path d="M23 15.6H18.4A5.9 5.9 0 0 0 18.4 27.4H23M29 15.6H33.6A5.9 5.9 0 0 1 33.6 27.4H29"/><path d="M19 21.5H33" stroke-width="2.6" stroke-linecap="round"/></g>
 <!-- fx -->
 <path d="M79.7 10.7C77.8 9.7 75.5 10.5 74.8 13.2L70.3 32.6M70.6 17.2H78M80.9 16.3L88.6 29.3M91.1 16.1L78.3 29.3" stroke="#dedede" stroke-width="2" stroke-linecap="round" fill="none"/>
 <path d="M96 38H102V40H100V42H98V40H96Z" fill="#f4f4f4" stroke="none"/>
 <!-- mask -->
 <rect x="122" y="11.2" width="24.8" height="18.6" rx="2" fill="#dedede" stroke="none"/><circle cx="134.5" cy="20.6" r="5.9" fill="#535353" stroke="none"/>
 <!-- adjust -->
 <circle cx="188.5" cy="20.7" r="9.6"/><path d="M181.7 27.5A9.6 9.6 0 0 0 195.3 13.9Z" fill="#dedede" stroke="none"/>
 <path d="M204 38H210V40H208V42H206V40H204Z" fill="#f4f4f4" stroke="none"/>
 <!-- folder -->
 <path d="M229.6 13V12.6A1.6 1.6 0 0 1 231.2 11H240.2A1.6 1.6 0 0 1 241.8 12.6V13" fill="#dedede" stroke="none"/>
 <rect x="229.6" y="14.6" width="24.4" height="16.4" rx="1.8" fill="#dedede" stroke="none"/>
 <path d="M229.6 13.4H242" stroke="#dedede" stroke-width="1.2"/>
 <!-- new layer -->
 <path d="M286.8 12.1H304.8V29.8H293.4L286.8 23.2Z" fill="#424242"/>
 <path d="M286.8 23.2H293.4V29.8" />
 <!-- trash -->
 <path d="M339.4 17.2H360.2M345.2 16.6V13.6A2.6 2.6 0 0 1 347.8 11H351.8A2.6 2.6 0 0 1 354.4 13.6V16.6" stroke-width="2"/>
 <path d="M342.4 18V32.2H357.2V18" stroke-width="2"/>
 <path d="M346.6 20.4V29.6M349.8 20.4V29.6M353 20.4V29.6" stroke-width="1.7"/>
</svg>

</body></html>
